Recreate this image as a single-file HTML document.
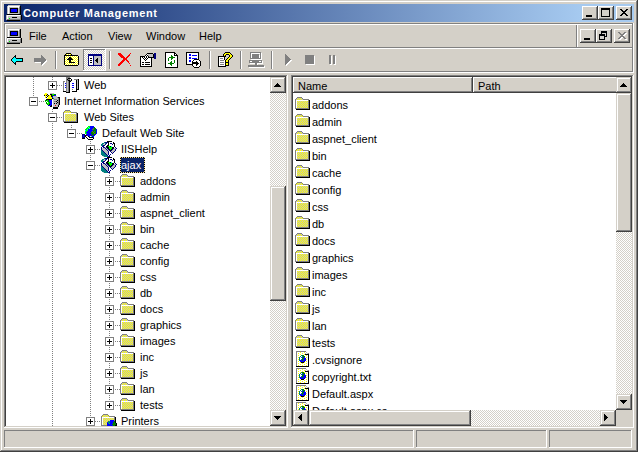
<!DOCTYPE html>
<html><head><meta charset="utf-8"><title>Computer Management</title>
<style>
html,body{margin:0;padding:0;}
body{width:638px;height:452px;overflow:hidden;position:relative;background:#d4d0c8;}
body>div,body>svg,body>span{position:absolute;display:block;}
.t{font-family:"Liberation Sans",sans-serif;font-size:11px;line-height:16px;white-space:nowrap;color:#000;}
</style></head><body>
<svg width="0" height="0" style="position:absolute"><defs><pattern id="v1" width="2" height="2" patternUnits="userSpaceOnUse"><rect x="0" y="0" width="1" height="1" fill="#ffffff"/><rect x="1" y="0" width="1" height="1" fill="#ffff00"/><rect x="0" y="1" width="1" height="1" fill="#ffff00"/><rect x="1" y="1" width="1" height="1" fill="#ffffff"/></pattern><pattern id="y0" width="2" height="2" patternUnits="userSpaceOnUse"><rect x="0" y="0" width="1" height="1" fill="#ffff00"/><rect x="1" y="0" width="1" height="1" fill="#c0c0c0"/><rect x="0" y="1" width="1" height="1" fill="#c0c0c0"/><rect x="1" y="1" width="1" height="1" fill="#ffff00"/></pattern><pattern id="y1" width="2" height="2" patternUnits="userSpaceOnUse"><rect x="0" y="0" width="1" height="1" fill="#c0c0c0"/><rect x="1" y="0" width="1" height="1" fill="#ffff00"/><rect x="0" y="1" width="1" height="1" fill="#ffff00"/><rect x="1" y="1" width="1" height="1" fill="#c0c0c0"/></pattern><pattern id="w21" width="4" height="2" patternUnits="userSpaceOnUse"><rect width="4" height="2" fill="#ffffff"/><rect x="0" y="0" width="1" height="1" fill="#ffff00"/><rect x="2" y="1" width="1" height="1" fill="#ffff00"/></pattern><pattern id="w20" width="4" height="2" patternUnits="userSpaceOnUse"><rect width="4" height="2" fill="#ffffff"/><rect x="2" y="0" width="1" height="1" fill="#ffff00"/><rect x="0" y="1" width="1" height="1" fill="#ffff00"/></pattern></defs></svg>
<div style="left:0px;top:0px;width:638px;height:452px;background:#d4d0c8;"></div>
<div style="left:1px;top:1px;width:636px;height:450px;background:#ffffff;"></div>
<div style="left:0px;top:0px;width:637px;height:451px;background:#d4d0c8;"></div>
<div style="left:0px;top:0px;width:638px;height:452px;background:#404040;"></div>
<div style="left:0px;top:0px;width:637px;height:451px;background:#d4d0c8;"></div>
<div style="left:1px;top:1px;width:636px;height:450px;background:#808080;"></div>
<div style="left:1px;top:1px;width:635px;height:449px;background:#ffffff;"></div>
<div style="left:2px;top:2px;width:634px;height:448px;background:#d4d0c8;"></div>
<div style="left:4px;top:4px;width:630px;height:18px;background:linear-gradient(to right,#0a246a 0px,#a6caf0 578px,#a6caf0 630px);"></div>
<svg style="left:5px;top:5px" width="17" height="16" shape-rendering="crispEdges"><rect x="3" y="0" width="12" height="1" fill="#c0c0c0"/><rect x="2" y="1" width="1" height="1" fill="#c0c0c0"/><rect x="3" y="1" width="11" height="1" fill="#ffffff"/><rect x="14" y="1" width="1" height="1" fill="#c0c0c0"/><rect x="15" y="1" width="1" height="1" fill="#000000"/><rect x="2" y="2" width="1" height="1" fill="#c0c0c0"/><rect x="3" y="2" width="1" height="1" fill="#ffffff"/><rect x="4" y="2" width="9" height="1" fill="#c0c0c0"/><rect x="13" y="2" width="1" height="1" fill="#ffffff"/><rect x="14" y="2" width="1" height="1" fill="#808080"/><rect x="15" y="2" width="1" height="1" fill="#000000"/><rect x="2" y="3" width="1" height="1" fill="#c0c0c0"/><rect x="3" y="3" width="1" height="1" fill="#ffffff"/><rect x="4" y="3" width="1" height="1" fill="#c0c0c0"/><rect x="5" y="3" width="8" height="1" fill="#000000"/><rect x="13" y="3" width="1" height="1" fill="#c0c0c0"/><rect x="14" y="3" width="1" height="1" fill="#808080"/><rect x="15" y="3" width="1" height="1" fill="#000000"/><rect x="2" y="4" width="1" height="1" fill="#c0c0c0"/><rect x="3" y="4" width="1" height="1" fill="#ffffff"/><rect x="4" y="4" width="1" height="1" fill="#c0c0c0"/><rect x="5" y="4" width="1" height="1" fill="#000000"/><rect x="6" y="4" width="6" height="1" fill="#0000ff"/><rect x="12" y="4" width="1" height="1" fill="#000000"/><rect x="13" y="4" width="1" height="1" fill="#c0c0c0"/><rect x="14" y="4" width="1" height="1" fill="#808080"/><rect x="15" y="4" width="1" height="1" fill="#000000"/><rect x="2" y="5" width="1" height="1" fill="#c0c0c0"/><rect x="3" y="5" width="1" height="1" fill="#ffffff"/><rect x="4" y="5" width="1" height="1" fill="#c0c0c0"/><rect x="5" y="5" width="1" height="1" fill="#000000"/><rect x="6" y="5" width="6" height="1" fill="#0000ff"/><rect x="12" y="5" width="1" height="1" fill="#000000"/><rect x="13" y="5" width="1" height="1" fill="#c0c0c0"/><rect x="14" y="5" width="1" height="1" fill="#808080"/><rect x="15" y="5" width="1" height="1" fill="#000000"/><rect x="2" y="6" width="1" height="1" fill="#c0c0c0"/><rect x="3" y="6" width="1" height="1" fill="#ffffff"/><rect x="4" y="6" width="1" height="1" fill="#c0c0c0"/><rect x="5" y="6" width="1" height="1" fill="#000000"/><rect x="6" y="6" width="6" height="1" fill="#0000ff"/><rect x="12" y="6" width="1" height="1" fill="#000000"/><rect x="13" y="6" width="1" height="1" fill="#c0c0c0"/><rect x="14" y="6" width="1" height="1" fill="#808080"/><rect x="15" y="6" width="1" height="1" fill="#000000"/><rect x="2" y="7" width="1" height="1" fill="#c0c0c0"/><rect x="3" y="7" width="1" height="1" fill="#ffffff"/><rect x="4" y="7" width="1" height="1" fill="#c0c0c0"/><rect x="5" y="7" width="8" height="1" fill="#000000"/><rect x="13" y="7" width="1" height="1" fill="#c0c0c0"/><rect x="14" y="7" width="1" height="1" fill="#808080"/><rect x="15" y="7" width="1" height="1" fill="#000000"/><rect x="2" y="8" width="1" height="1" fill="#c0c0c0"/><rect x="3" y="8" width="1" height="1" fill="#ffffff"/><rect x="4" y="8" width="10" height="1" fill="#c0c0c0"/><rect x="14" y="8" width="1" height="1" fill="#808080"/><rect x="15" y="8" width="1" height="1" fill="#000000"/><rect x="2" y="9" width="14" height="1" fill="#000000"/><rect x="1" y="10" width="1" height="1" fill="#c0c0c0"/><rect x="2" y="10" width="13" height="1" fill="#ffffff"/><rect x="15" y="10" width="1" height="1" fill="#c0c0c0"/><rect x="16" y="10" width="1" height="1" fill="#000000"/><rect x="1" y="11" width="1" height="1" fill="#c0c0c0"/><rect x="2" y="11" width="1" height="1" fill="#ffffff"/><rect x="3" y="11" width="12" height="1" fill="#c0c0c0"/><rect x="15" y="11" width="1" height="1" fill="#808080"/><rect x="16" y="11" width="1" height="1" fill="#000000"/><rect x="1" y="12" width="1" height="1" fill="#c0c0c0"/><rect x="2" y="12" width="1" height="1" fill="#ffffff"/><rect x="3" y="12" width="4" height="1" fill="#c0c0c0"/><rect x="7" y="12" width="5" height="1" fill="#000000"/><rect x="12" y="12" width="3" height="1" fill="#c0c0c0"/><rect x="15" y="12" width="1" height="1" fill="#808080"/><rect x="16" y="12" width="1" height="1" fill="#000000"/><rect x="1" y="13" width="1" height="1" fill="#c0c0c0"/><rect x="2" y="13" width="1" height="1" fill="#ffffff"/><rect x="3" y="13" width="1" height="1" fill="#c0c0c0"/><rect x="4" y="13" width="1" height="1" fill="#00ff00"/><rect x="5" y="13" width="10" height="1" fill="#c0c0c0"/><rect x="15" y="13" width="1" height="1" fill="#808080"/><rect x="16" y="13" width="1" height="1" fill="#000000"/><rect x="1" y="14" width="1" height="1" fill="#c0c0c0"/><rect x="2" y="14" width="14" height="1" fill="#808080"/><rect x="16" y="14" width="1" height="1" fill="#000000"/><rect x="2" y="15" width="13" height="1" fill="#000000"/></svg>
<span class="t" style="left:23px;top:5px;color:#fff;font-weight:bold;letter-spacing:0.65px">Computer Management</span>
<div style="left:582px;top:6px;width:16px;height:14px;background:#404040;"></div>
<div style="left:582px;top:6px;width:15px;height:13px;background:#ffffff;"></div>
<div style="left:583px;top:7px;width:14px;height:12px;background:#808080;"></div>
<div style="left:583px;top:7px;width:13px;height:11px;background:#d4d0c8;"></div>
<svg style="left:586px;top:15px" width="6" height="2" shape-rendering="crispEdges"><rect x="0" y="0" width="6" height="1" fill="#000000"/><rect x="0" y="1" width="6" height="1" fill="#000000"/></svg>
<div style="left:598px;top:6px;width:16px;height:14px;background:#404040;"></div>
<div style="left:598px;top:6px;width:15px;height:13px;background:#ffffff;"></div>
<div style="left:599px;top:7px;width:14px;height:12px;background:#808080;"></div>
<div style="left:599px;top:7px;width:13px;height:11px;background:#d4d0c8;"></div>
<svg style="left:601px;top:8px" width="9" height="9" shape-rendering="crispEdges"><rect x="0" y="0" width="9" height="1" fill="#000000"/><rect x="0" y="1" width="9" height="1" fill="#000000"/><rect x="0" y="2" width="1" height="1" fill="#000000"/><rect x="8" y="2" width="1" height="1" fill="#000000"/><rect x="0" y="3" width="1" height="1" fill="#000000"/><rect x="8" y="3" width="1" height="1" fill="#000000"/><rect x="0" y="4" width="1" height="1" fill="#000000"/><rect x="8" y="4" width="1" height="1" fill="#000000"/><rect x="0" y="5" width="1" height="1" fill="#000000"/><rect x="8" y="5" width="1" height="1" fill="#000000"/><rect x="0" y="6" width="1" height="1" fill="#000000"/><rect x="8" y="6" width="1" height="1" fill="#000000"/><rect x="0" y="7" width="1" height="1" fill="#000000"/><rect x="8" y="7" width="1" height="1" fill="#000000"/><rect x="0" y="8" width="9" height="1" fill="#000000"/></svg>
<div style="left:616px;top:6px;width:16px;height:14px;background:#404040;"></div>
<div style="left:616px;top:6px;width:15px;height:13px;background:#ffffff;"></div>
<div style="left:617px;top:7px;width:14px;height:12px;background:#808080;"></div>
<div style="left:617px;top:7px;width:13px;height:11px;background:#d4d0c8;"></div>
<svg style="left:620px;top:9px" width="8" height="7" shape-rendering="crispEdges"><rect x="0" y="0" width="2" height="1" fill="#000000"/><rect x="6" y="0" width="2" height="1" fill="#000000"/><rect x="1" y="1" width="2" height="1" fill="#000000"/><rect x="5" y="1" width="2" height="1" fill="#000000"/><rect x="2" y="2" width="4" height="1" fill="#000000"/><rect x="3" y="3" width="2" height="1" fill="#000000"/><rect x="2" y="4" width="4" height="1" fill="#000000"/><rect x="1" y="5" width="2" height="1" fill="#000000"/><rect x="5" y="5" width="2" height="1" fill="#000000"/><rect x="0" y="6" width="2" height="1" fill="#000000"/><rect x="6" y="6" width="2" height="1" fill="#000000"/></svg>
<div style="left:4px;top:23px;width:630px;height:1px;background:#808080;"></div>
<div style="left:4px;top:23px;width:1px;height:49px;background:#808080;"></div>
<div style="left:5px;top:24px;width:628px;height:1px;background:#ffffff;"></div>
<div style="left:5px;top:24px;width:1px;height:47px;background:#ffffff;"></div>
<div style="left:632px;top:24px;width:1px;height:48px;background:#808080;"></div>
<div style="left:633px;top:23px;width:1px;height:50px;background:#ffffff;"></div>
<div style="left:4px;top:71px;width:629px;height:1px;background:#808080;"></div>
<div style="left:4px;top:72px;width:630px;height:1px;background:#ffffff;"></div>
<div style="left:5px;top:47px;width:627px;height:1px;background:#808080;"></div>
<div style="left:5px;top:48px;width:627px;height:1px;background:#ffffff;"></div>
<div style="left:576px;top:25px;width:1px;height:22px;background:#808080;"></div>
<div style="left:577px;top:25px;width:1px;height:22px;background:#ffffff;"></div>
<svg style="left:5px;top:28px" width="17" height="16" shape-rendering="crispEdges"><rect x="3" y="0" width="12" height="1" fill="#c0c0c0"/><rect x="2" y="1" width="1" height="1" fill="#c0c0c0"/><rect x="3" y="1" width="11" height="1" fill="#ffffff"/><rect x="14" y="1" width="1" height="1" fill="#c0c0c0"/><rect x="15" y="1" width="1" height="1" fill="#000000"/><rect x="2" y="2" width="1" height="1" fill="#c0c0c0"/><rect x="3" y="2" width="1" height="1" fill="#ffffff"/><rect x="4" y="2" width="9" height="1" fill="#c0c0c0"/><rect x="13" y="2" width="1" height="1" fill="#ffffff"/><rect x="14" y="2" width="1" height="1" fill="#808080"/><rect x="15" y="2" width="1" height="1" fill="#000000"/><rect x="2" y="3" width="1" height="1" fill="#c0c0c0"/><rect x="3" y="3" width="1" height="1" fill="#ffffff"/><rect x="4" y="3" width="1" height="1" fill="#c0c0c0"/><rect x="5" y="3" width="8" height="1" fill="#000000"/><rect x="13" y="3" width="1" height="1" fill="#c0c0c0"/><rect x="14" y="3" width="1" height="1" fill="#808080"/><rect x="15" y="3" width="1" height="1" fill="#000000"/><rect x="2" y="4" width="1" height="1" fill="#c0c0c0"/><rect x="3" y="4" width="1" height="1" fill="#ffffff"/><rect x="4" y="4" width="1" height="1" fill="#c0c0c0"/><rect x="5" y="4" width="1" height="1" fill="#000000"/><rect x="6" y="4" width="6" height="1" fill="#0000ff"/><rect x="12" y="4" width="1" height="1" fill="#000000"/><rect x="13" y="4" width="1" height="1" fill="#c0c0c0"/><rect x="14" y="4" width="1" height="1" fill="#808080"/><rect x="15" y="4" width="1" height="1" fill="#000000"/><rect x="2" y="5" width="1" height="1" fill="#c0c0c0"/><rect x="3" y="5" width="1" height="1" fill="#ffffff"/><rect x="4" y="5" width="1" height="1" fill="#c0c0c0"/><rect x="5" y="5" width="1" height="1" fill="#000000"/><rect x="6" y="5" width="6" height="1" fill="#0000ff"/><rect x="12" y="5" width="1" height="1" fill="#000000"/><rect x="13" y="5" width="1" height="1" fill="#c0c0c0"/><rect x="14" y="5" width="1" height="1" fill="#808080"/><rect x="15" y="5" width="1" height="1" fill="#000000"/><rect x="2" y="6" width="1" height="1" fill="#c0c0c0"/><rect x="3" y="6" width="1" height="1" fill="#ffffff"/><rect x="4" y="6" width="1" height="1" fill="#c0c0c0"/><rect x="5" y="6" width="1" height="1" fill="#000000"/><rect x="6" y="6" width="6" height="1" fill="#0000ff"/><rect x="12" y="6" width="1" height="1" fill="#000000"/><rect x="13" y="6" width="1" height="1" fill="#c0c0c0"/><rect x="14" y="6" width="1" height="1" fill="#808080"/><rect x="15" y="6" width="1" height="1" fill="#000000"/><rect x="2" y="7" width="1" height="1" fill="#c0c0c0"/><rect x="3" y="7" width="1" height="1" fill="#ffffff"/><rect x="4" y="7" width="1" height="1" fill="#c0c0c0"/><rect x="5" y="7" width="8" height="1" fill="#000000"/><rect x="13" y="7" width="1" height="1" fill="#c0c0c0"/><rect x="14" y="7" width="1" height="1" fill="#808080"/><rect x="15" y="7" width="1" height="1" fill="#000000"/><rect x="2" y="8" width="1" height="1" fill="#c0c0c0"/><rect x="3" y="8" width="1" height="1" fill="#ffffff"/><rect x="4" y="8" width="10" height="1" fill="#c0c0c0"/><rect x="14" y="8" width="1" height="1" fill="#808080"/><rect x="15" y="8" width="1" height="1" fill="#000000"/><rect x="2" y="9" width="14" height="1" fill="#000000"/><rect x="1" y="10" width="1" height="1" fill="#c0c0c0"/><rect x="2" y="10" width="13" height="1" fill="#ffffff"/><rect x="15" y="10" width="1" height="1" fill="#c0c0c0"/><rect x="16" y="10" width="1" height="1" fill="#000000"/><rect x="1" y="11" width="1" height="1" fill="#c0c0c0"/><rect x="2" y="11" width="1" height="1" fill="#ffffff"/><rect x="3" y="11" width="12" height="1" fill="#c0c0c0"/><rect x="15" y="11" width="1" height="1" fill="#808080"/><rect x="16" y="11" width="1" height="1" fill="#000000"/><rect x="1" y="12" width="1" height="1" fill="#c0c0c0"/><rect x="2" y="12" width="1" height="1" fill="#ffffff"/><rect x="3" y="12" width="4" height="1" fill="#c0c0c0"/><rect x="7" y="12" width="5" height="1" fill="#000000"/><rect x="12" y="12" width="3" height="1" fill="#c0c0c0"/><rect x="15" y="12" width="1" height="1" fill="#808080"/><rect x="16" y="12" width="1" height="1" fill="#000000"/><rect x="1" y="13" width="1" height="1" fill="#c0c0c0"/><rect x="2" y="13" width="1" height="1" fill="#ffffff"/><rect x="3" y="13" width="1" height="1" fill="#c0c0c0"/><rect x="4" y="13" width="1" height="1" fill="#00ff00"/><rect x="5" y="13" width="10" height="1" fill="#c0c0c0"/><rect x="15" y="13" width="1" height="1" fill="#808080"/><rect x="16" y="13" width="1" height="1" fill="#000000"/><rect x="1" y="14" width="1" height="1" fill="#c0c0c0"/><rect x="2" y="14" width="14" height="1" fill="#808080"/><rect x="16" y="14" width="1" height="1" fill="#000000"/><rect x="2" y="15" width="13" height="1" fill="#000000"/></svg>
<span class="t" style="left:29px;top:28px;">File</span>
<span class="t" style="left:62px;top:28px;">Action</span>
<span class="t" style="left:108px;top:28px;">View</span>
<span class="t" style="left:146px;top:28px;">Window</span>
<span class="t" style="left:199px;top:28px;">Help</span>
<div style="left:580px;top:29px;width:16px;height:14px;background:#404040;"></div>
<div style="left:580px;top:29px;width:15px;height:13px;background:#ffffff;"></div>
<div style="left:581px;top:30px;width:14px;height:12px;background:#808080;"></div>
<div style="left:581px;top:30px;width:13px;height:11px;background:#d4d0c8;"></div>
<svg style="left:584px;top:38px" width="6" height="2" shape-rendering="crispEdges"><rect x="0" y="0" width="6" height="1" fill="#000000"/><rect x="0" y="1" width="6" height="1" fill="#000000"/></svg>
<div style="left:596px;top:29px;width:16px;height:14px;background:#404040;"></div>
<div style="left:596px;top:29px;width:15px;height:13px;background:#ffffff;"></div>
<div style="left:597px;top:30px;width:14px;height:12px;background:#808080;"></div>
<div style="left:597px;top:30px;width:13px;height:11px;background:#d4d0c8;"></div>
<svg style="left:599px;top:31px" width="8" height="9" shape-rendering="crispEdges"><rect x="2" y="0" width="6" height="1" fill="#000000"/><rect x="2" y="1" width="6" height="1" fill="#000000"/><rect x="2" y="2" width="1" height="1" fill="#000000"/><rect x="7" y="2" width="1" height="1" fill="#000000"/><rect x="0" y="3" width="6" height="1" fill="#000000"/><rect x="7" y="3" width="1" height="1" fill="#000000"/><rect x="0" y="4" width="6" height="1" fill="#000000"/><rect x="7" y="4" width="1" height="1" fill="#000000"/><rect x="0" y="5" width="1" height="1" fill="#000000"/><rect x="5" y="5" width="3" height="1" fill="#000000"/><rect x="0" y="6" width="1" height="1" fill="#000000"/><rect x="5" y="6" width="1" height="1" fill="#000000"/><rect x="0" y="7" width="1" height="1" fill="#000000"/><rect x="5" y="7" width="1" height="1" fill="#000000"/><rect x="0" y="8" width="6" height="1" fill="#000000"/></svg>
<div style="left:614px;top:29px;width:16px;height:14px;background:#404040;"></div>
<div style="left:614px;top:29px;width:15px;height:13px;background:#ffffff;"></div>
<div style="left:615px;top:30px;width:14px;height:12px;background:#808080;"></div>
<div style="left:615px;top:30px;width:13px;height:11px;background:#d4d0c8;"></div>
<svg style="left:619px;top:33px" width="8" height="7" shape-rendering="crispEdges"><rect x="0" y="0" width="2" height="1" fill="#ffffff"/><rect x="6" y="0" width="2" height="1" fill="#ffffff"/><rect x="1" y="1" width="2" height="1" fill="#ffffff"/><rect x="5" y="1" width="2" height="1" fill="#ffffff"/><rect x="2" y="2" width="4" height="1" fill="#ffffff"/><rect x="3" y="3" width="2" height="1" fill="#ffffff"/><rect x="2" y="4" width="4" height="1" fill="#ffffff"/><rect x="1" y="5" width="2" height="1" fill="#ffffff"/><rect x="5" y="5" width="2" height="1" fill="#ffffff"/><rect x="0" y="6" width="2" height="1" fill="#ffffff"/><rect x="6" y="6" width="2" height="1" fill="#ffffff"/></svg>
<svg style="left:618px;top:32px" width="8" height="7" shape-rendering="crispEdges"><rect x="0" y="0" width="2" height="1" fill="#808080"/><rect x="6" y="0" width="2" height="1" fill="#808080"/><rect x="1" y="1" width="2" height="1" fill="#808080"/><rect x="5" y="1" width="2" height="1" fill="#808080"/><rect x="2" y="2" width="4" height="1" fill="#808080"/><rect x="3" y="3" width="2" height="1" fill="#808080"/><rect x="2" y="4" width="4" height="1" fill="#808080"/><rect x="1" y="5" width="2" height="1" fill="#808080"/><rect x="5" y="5" width="2" height="1" fill="#808080"/><rect x="0" y="6" width="2" height="1" fill="#808080"/><rect x="6" y="6" width="2" height="1" fill="#808080"/></svg>
<div style="left:55px;top:51px;width:1px;height:18px;background:#808080;"></div>
<div style="left:56px;top:51px;width:1px;height:18px;background:#ffffff;"></div>
<div style="left:109px;top:51px;width:1px;height:18px;background:#808080;"></div>
<div style="left:110px;top:51px;width:1px;height:18px;background:#ffffff;"></div>
<div style="left:209px;top:51px;width:1px;height:18px;background:#808080;"></div>
<div style="left:210px;top:51px;width:1px;height:18px;background:#ffffff;"></div>
<div style="left:240px;top:51px;width:1px;height:18px;background:#808080;"></div>
<div style="left:241px;top:51px;width:1px;height:18px;background:#ffffff;"></div>
<div style="left:271px;top:51px;width:1px;height:18px;background:#808080;"></div>
<div style="left:272px;top:51px;width:1px;height:18px;background:#ffffff;"></div>
<div style="left:83px;top:49px;width:23px;height:22px;background:#ffffff;"></div>
<div style="left:83px;top:49px;width:22px;height:21px;background:#808080;"></div>
<svg style="left:84px;top:50px" width="21" height="20" shape-rendering="crispEdges"><defs><pattern id="p84_50" x="0" y="0" width="2" height="2" patternUnits="userSpaceOnUse"><rect width="2" height="2" fill="#d4d0c8"/><rect width="1" height="1" fill="#ffffff"/><rect x="1" y="1" width="1" height="1" fill="#ffffff"/></pattern></defs><rect width="21" height="20" fill="url(#p84_50)"/></svg>
<svg style="left:11px;top:55px" width="12" height="10" shape-rendering="crispEdges"><rect x="4" y="0" width="1" height="1" fill="#000000"/><rect x="3" y="1" width="2" height="1" fill="#000000"/><rect x="2" y="2" width="1" height="1" fill="#000000"/><rect x="3" y="2" width="1" height="1" fill="#00ffff"/><rect x="4" y="2" width="1" height="1" fill="#000000"/><rect x="1" y="3" width="1" height="1" fill="#000000"/><rect x="2" y="3" width="3" height="1" fill="#00ffff"/><rect x="5" y="3" width="7" height="1" fill="#000000"/><rect x="0" y="4" width="1" height="1" fill="#000000"/><rect x="1" y="4" width="10" height="1" fill="#00ffff"/><rect x="11" y="4" width="1" height="1" fill="#000000"/><rect x="0" y="5" width="1" height="1" fill="#000000"/><rect x="1" y="5" width="10" height="1" fill="#00ffff"/><rect x="11" y="5" width="1" height="1" fill="#000000"/><rect x="1" y="6" width="1" height="1" fill="#000000"/><rect x="2" y="6" width="3" height="1" fill="#00ffff"/><rect x="5" y="6" width="7" height="1" fill="#000000"/><rect x="2" y="7" width="1" height="1" fill="#000000"/><rect x="3" y="7" width="1" height="1" fill="#00ffff"/><rect x="4" y="7" width="1" height="1" fill="#000000"/><rect x="3" y="8" width="2" height="1" fill="#000000"/><rect x="4" y="9" width="1" height="1" fill="#000000"/></svg>
<svg style="left:35px;top:56px" width="13" height="10" shape-rendering="crispEdges"><rect x="7" y="0" width="1" height="1" fill="#ffffff"/><rect x="7" y="1" width="2" height="1" fill="#ffffff"/><rect x="7" y="2" width="3" height="1" fill="#ffffff"/><rect x="0" y="3" width="11" height="1" fill="#ffffff"/><rect x="0" y="4" width="12" height="1" fill="#ffffff"/><rect x="0" y="5" width="12" height="1" fill="#ffffff"/><rect x="0" y="6" width="11" height="1" fill="#ffffff"/><rect x="7" y="7" width="3" height="1" fill="#ffffff"/><rect x="7" y="8" width="2" height="1" fill="#ffffff"/><rect x="7" y="9" width="1" height="1" fill="#ffffff"/></svg>
<svg style="left:34px;top:55px" width="13" height="10" shape-rendering="crispEdges"><rect x="7" y="0" width="1" height="1" fill="#808080"/><rect x="7" y="1" width="2" height="1" fill="#808080"/><rect x="7" y="2" width="3" height="1" fill="#808080"/><rect x="0" y="3" width="11" height="1" fill="#808080"/><rect x="0" y="4" width="12" height="1" fill="#808080"/><rect x="0" y="5" width="12" height="1" fill="#808080"/><rect x="0" y="6" width="11" height="1" fill="#808080"/><rect x="7" y="7" width="3" height="1" fill="#808080"/><rect x="7" y="8" width="2" height="1" fill="#808080"/><rect x="7" y="9" width="1" height="1" fill="#808080"/></svg>
<svg style="left:64px;top:53px" width="15" height="13" shape-rendering="crispEdges"><rect x="2" y="0" width="5" height="1" fill="#000000"/><rect x="1" y="1" width="1" height="1" fill="#000000"/><rect x="2" y="1" width="5" height="1" fill="url(#v1)"/><rect x="7" y="1" width="1" height="1" fill="#000000"/><rect x="0" y="2" width="14" height="1" fill="#000000"/><rect x="0" y="3" width="1" height="1" fill="#000000"/><rect x="1" y="3" width="13" height="1" fill="url(#v1)"/><rect x="14" y="3" width="1" height="1" fill="#000000"/><rect x="0" y="4" width="1" height="1" fill="#000000"/><rect x="1" y="4" width="4" height="1" fill="url(#v1)"/><rect x="5" y="4" width="2" height="1" fill="#000000"/><rect x="7" y="4" width="7" height="1" fill="url(#v1)"/><rect x="14" y="4" width="1" height="1" fill="#000000"/><rect x="0" y="5" width="1" height="1" fill="#000000"/><rect x="1" y="5" width="3" height="1" fill="url(#v1)"/><rect x="4" y="5" width="4" height="1" fill="#000000"/><rect x="8" y="5" width="6" height="1" fill="url(#v1)"/><rect x="14" y="5" width="1" height="1" fill="#000000"/><rect x="0" y="6" width="1" height="1" fill="#000000"/><rect x="1" y="6" width="2" height="1" fill="url(#v1)"/><rect x="3" y="6" width="6" height="1" fill="#000000"/><rect x="9" y="6" width="5" height="1" fill="url(#v1)"/><rect x="14" y="6" width="1" height="1" fill="#000000"/><rect x="0" y="7" width="1" height="1" fill="#000000"/><rect x="1" y="7" width="4" height="1" fill="url(#v1)"/><rect x="5" y="7" width="2" height="1" fill="#000000"/><rect x="7" y="7" width="7" height="1" fill="url(#v1)"/><rect x="14" y="7" width="1" height="1" fill="#000000"/><rect x="0" y="8" width="1" height="1" fill="#000000"/><rect x="1" y="8" width="4" height="1" fill="url(#v1)"/><rect x="5" y="8" width="2" height="1" fill="#000000"/><rect x="7" y="8" width="7" height="1" fill="url(#v1)"/><rect x="14" y="8" width="1" height="1" fill="#000000"/><rect x="0" y="9" width="1" height="1" fill="#000000"/><rect x="1" y="9" width="4" height="1" fill="url(#v1)"/><rect x="5" y="9" width="6" height="1" fill="#000000"/><rect x="11" y="9" width="3" height="1" fill="url(#v1)"/><rect x="14" y="9" width="1" height="1" fill="#000000"/><rect x="0" y="10" width="1" height="1" fill="#000000"/><rect x="1" y="10" width="13" height="1" fill="url(#v1)"/><rect x="14" y="10" width="1" height="1" fill="#000000"/><rect x="0" y="11" width="1" height="1" fill="#000000"/><rect x="1" y="11" width="13" height="1" fill="url(#v1)"/><rect x="14" y="11" width="1" height="1" fill="#000000"/><rect x="1" y="12" width="13" height="1" fill="#000000"/></svg>
<svg style="left:88px;top:54px" width="14" height="12" shape-rendering="crispEdges"><rect x="0" y="0" width="14" height="1" fill="#000080"/><rect x="0" y="1" width="14" height="1" fill="#000080"/><rect x="0" y="2" width="1" height="1" fill="#000080"/><rect x="1" y="2" width="4" height="1" fill="#ffffff"/><rect x="5" y="2" width="1" height="1" fill="#000080"/><rect x="6" y="2" width="7" height="1" fill="#c0c0c0"/><rect x="13" y="2" width="1" height="1" fill="#000080"/><rect x="0" y="3" width="1" height="1" fill="#000080"/><rect x="1" y="3" width="4" height="1" fill="#ffffff"/><rect x="5" y="3" width="1" height="1" fill="#000080"/><rect x="6" y="3" width="7" height="1" fill="#c0c0c0"/><rect x="13" y="3" width="1" height="1" fill="#000080"/><rect x="0" y="4" width="1" height="1" fill="#000080"/><rect x="1" y="4" width="1" height="1" fill="#ffffff"/><rect x="2" y="4" width="2" height="1" fill="#000000"/><rect x="4" y="4" width="1" height="1" fill="#ffffff"/><rect x="5" y="4" width="1" height="1" fill="#000080"/><rect x="6" y="4" width="3" height="1" fill="#c0c0c0"/><rect x="9" y="4" width="1" height="1" fill="#000000"/><rect x="10" y="4" width="3" height="1" fill="#c0c0c0"/><rect x="13" y="4" width="1" height="1" fill="#000080"/><rect x="0" y="5" width="1" height="1" fill="#000080"/><rect x="1" y="5" width="4" height="1" fill="#ffffff"/><rect x="5" y="5" width="1" height="1" fill="#000080"/><rect x="6" y="5" width="2" height="1" fill="#c0c0c0"/><rect x="8" y="5" width="2" height="1" fill="#000000"/><rect x="10" y="5" width="3" height="1" fill="#c0c0c0"/><rect x="13" y="5" width="1" height="1" fill="#000080"/><rect x="0" y="6" width="1" height="1" fill="#000080"/><rect x="1" y="6" width="1" height="1" fill="#ffffff"/><rect x="2" y="6" width="2" height="1" fill="#000000"/><rect x="4" y="6" width="1" height="1" fill="#ffffff"/><rect x="5" y="6" width="1" height="1" fill="#000080"/><rect x="6" y="6" width="1" height="1" fill="#c0c0c0"/><rect x="7" y="6" width="3" height="1" fill="#000000"/><rect x="10" y="6" width="3" height="1" fill="#c0c0c0"/><rect x="13" y="6" width="1" height="1" fill="#000080"/><rect x="0" y="7" width="1" height="1" fill="#000080"/><rect x="1" y="7" width="4" height="1" fill="#ffffff"/><rect x="5" y="7" width="1" height="1" fill="#000080"/><rect x="6" y="7" width="2" height="1" fill="#c0c0c0"/><rect x="8" y="7" width="2" height="1" fill="#000000"/><rect x="10" y="7" width="3" height="1" fill="#c0c0c0"/><rect x="13" y="7" width="1" height="1" fill="#000080"/><rect x="0" y="8" width="1" height="1" fill="#000080"/><rect x="1" y="8" width="1" height="1" fill="#ffffff"/><rect x="2" y="8" width="2" height="1" fill="#000000"/><rect x="4" y="8" width="1" height="1" fill="#ffffff"/><rect x="5" y="8" width="1" height="1" fill="#000080"/><rect x="6" y="8" width="3" height="1" fill="#c0c0c0"/><rect x="9" y="8" width="1" height="1" fill="#000000"/><rect x="10" y="8" width="3" height="1" fill="#c0c0c0"/><rect x="13" y="8" width="1" height="1" fill="#000080"/><rect x="0" y="9" width="1" height="1" fill="#000080"/><rect x="1" y="9" width="4" height="1" fill="#ffffff"/><rect x="5" y="9" width="1" height="1" fill="#000080"/><rect x="6" y="9" width="7" height="1" fill="#c0c0c0"/><rect x="13" y="9" width="1" height="1" fill="#000080"/><rect x="0" y="10" width="1" height="1" fill="#000080"/><rect x="1" y="10" width="4" height="1" fill="#ffffff"/><rect x="5" y="10" width="1" height="1" fill="#000080"/><rect x="6" y="10" width="7" height="1" fill="#c0c0c0"/><rect x="13" y="10" width="1" height="1" fill="#000080"/><rect x="0" y="11" width="14" height="1" fill="#000080"/></svg>
<svg style="left:118px;top:53px" width="13" height="13" shape-rendering="crispEdges"><rect x="0" y="0" width="3" height="1" fill="#ff0000"/><rect x="12" y="0" width="1" height="1" fill="#ff0000"/><rect x="0" y="1" width="4" height="1" fill="#ff0000"/><rect x="11" y="1" width="1" height="1" fill="#ff0000"/><rect x="1" y="2" width="4" height="1" fill="#ff0000"/><rect x="10" y="2" width="2" height="1" fill="#ff0000"/><rect x="2" y="3" width="4" height="1" fill="#ff0000"/><rect x="9" y="3" width="2" height="1" fill="#ff0000"/><rect x="3" y="4" width="4" height="1" fill="#ff0000"/><rect x="8" y="4" width="2" height="1" fill="#ff0000"/><rect x="5" y="5" width="4" height="1" fill="#ff0000"/><rect x="5" y="6" width="4" height="1" fill="#ff0000"/><rect x="4" y="7" width="3" height="1" fill="#ff0000"/><rect x="8" y="7" width="2" height="1" fill="#ff0000"/><rect x="3" y="8" width="3" height="1" fill="#ff0000"/><rect x="9" y="8" width="2" height="1" fill="#ff0000"/><rect x="2" y="9" width="3" height="1" fill="#ff0000"/><rect x="10" y="9" width="1" height="1" fill="#ff0000"/><rect x="1" y="10" width="3" height="1" fill="#ff0000"/><rect x="11" y="10" width="1" height="1" fill="#ff0000"/><rect x="0" y="11" width="3" height="1" fill="#ff0000"/><rect x="0" y="12" width="2" height="1" fill="#ff0000"/><rect x="12" y="12" width="1" height="1" fill="#ff0000"/></svg>
<svg style="left:140px;top:53px" width="16" height="14" shape-rendering="crispEdges"><rect x="7" y="0" width="6" height="1" fill="#000000"/><rect x="14" y="0" width="2" height="1" fill="#000080"/><rect x="6" y="1" width="1" height="1" fill="#000000"/><rect x="7" y="1" width="1" height="1" fill="#ffffff"/><rect x="8" y="1" width="5" height="1" fill="#c0c0c0"/><rect x="13" y="1" width="1" height="1" fill="#000000"/><rect x="14" y="1" width="2" height="1" fill="#000080"/><rect x="5" y="2" width="1" height="1" fill="#000000"/><rect x="6" y="2" width="1" height="1" fill="#ffffff"/><rect x="7" y="2" width="1" height="1" fill="#000000"/><rect x="8" y="2" width="5" height="1" fill="#c0c0c0"/><rect x="13" y="2" width="1" height="1" fill="#000000"/><rect x="14" y="2" width="2" height="1" fill="#000080"/><rect x="0" y="3" width="5" height="1" fill="#000000"/><rect x="5" y="3" width="1" height="1" fill="#ffffff"/><rect x="6" y="3" width="1" height="1" fill="#000000"/><rect x="7" y="3" width="1" height="1" fill="#ffffff"/><rect x="8" y="3" width="1" height="1" fill="#000000"/><rect x="9" y="3" width="4" height="1" fill="#c0c0c0"/><rect x="13" y="3" width="1" height="1" fill="#000000"/><rect x="14" y="3" width="2" height="1" fill="#000080"/><rect x="0" y="4" width="1" height="1" fill="#000000"/><rect x="1" y="4" width="1" height="1" fill="#ffffff"/><rect x="2" y="4" width="1" height="1" fill="#000000"/><rect x="3" y="4" width="1" height="1" fill="#ffffff"/><rect x="4" y="4" width="1" height="1" fill="#000000"/><rect x="5" y="4" width="1" height="1" fill="#ffffff"/><rect x="6" y="4" width="1" height="1" fill="#000000"/><rect x="7" y="4" width="1" height="1" fill="#ffffff"/><rect x="8" y="4" width="6" height="1" fill="#000000"/><rect x="14" y="4" width="2" height="1" fill="#000080"/><rect x="0" y="5" width="1" height="1" fill="#000000"/><rect x="1" y="5" width="2" height="1" fill="#ffffff"/><rect x="3" y="5" width="1" height="1" fill="#000000"/><rect x="4" y="5" width="1" height="1" fill="#ffffff"/><rect x="5" y="5" width="1" height="1" fill="#000000"/><rect x="6" y="5" width="1" height="1" fill="#ffffff"/><rect x="7" y="5" width="1" height="1" fill="#000000"/><rect x="8" y="5" width="3" height="1" fill="#ffffff"/><rect x="11" y="5" width="1" height="1" fill="#000000"/><rect x="14" y="5" width="2" height="1" fill="#000080"/><rect x="0" y="6" width="1" height="1" fill="#000000"/><rect x="1" y="6" width="3" height="1" fill="#ffffff"/><rect x="4" y="6" width="1" height="1" fill="#000000"/><rect x="5" y="6" width="1" height="1" fill="#ffffff"/><rect x="6" y="6" width="1" height="1" fill="#000000"/><rect x="7" y="6" width="4" height="1" fill="#ffffff"/><rect x="11" y="6" width="1" height="1" fill="#000000"/><rect x="0" y="7" width="1" height="1" fill="#000000"/><rect x="1" y="7" width="4" height="1" fill="#ffffff"/><rect x="5" y="7" width="1" height="1" fill="#000000"/><rect x="6" y="7" width="5" height="1" fill="#ffffff"/><rect x="11" y="7" width="1" height="1" fill="#000000"/><rect x="0" y="8" width="1" height="1" fill="#000000"/><rect x="1" y="8" width="10" height="1" fill="#ffffff"/><rect x="11" y="8" width="1" height="1" fill="#000000"/><rect x="0" y="9" width="1" height="1" fill="#000000"/><rect x="1" y="9" width="1" height="1" fill="#ffffff"/><rect x="2" y="9" width="2" height="1" fill="#000000"/><rect x="4" y="9" width="1" height="1" fill="#ffffff"/><rect x="5" y="9" width="5" height="1" fill="#000000"/><rect x="10" y="9" width="1" height="1" fill="#ffffff"/><rect x="11" y="9" width="1" height="1" fill="#000000"/><rect x="0" y="10" width="1" height="1" fill="#000000"/><rect x="1" y="10" width="10" height="1" fill="#ffffff"/><rect x="11" y="10" width="1" height="1" fill="#000000"/><rect x="0" y="11" width="1" height="1" fill="#000000"/><rect x="1" y="11" width="1" height="1" fill="#ffffff"/><rect x="2" y="11" width="2" height="1" fill="#000000"/><rect x="4" y="11" width="1" height="1" fill="#ffffff"/><rect x="5" y="11" width="5" height="1" fill="#000000"/><rect x="10" y="11" width="1" height="1" fill="#ffffff"/><rect x="11" y="11" width="1" height="1" fill="#000000"/><rect x="0" y="12" width="1" height="1" fill="#000000"/><rect x="1" y="12" width="10" height="1" fill="#ffffff"/><rect x="11" y="12" width="1" height="1" fill="#000000"/><rect x="0" y="13" width="12" height="1" fill="#000000"/></svg>
<svg style="left:165px;top:52px" width="13" height="16" shape-rendering="crispEdges"><rect x="0" y="0" width="10" height="1" fill="#000000"/><rect x="0" y="1" width="1" height="1" fill="#000000"/><rect x="1" y="1" width="8" height="1" fill="#ffffff"/><rect x="9" y="1" width="2" height="1" fill="#000000"/><rect x="0" y="2" width="1" height="1" fill="#000000"/><rect x="1" y="2" width="8" height="1" fill="#ffffff"/><rect x="9" y="2" width="1" height="1" fill="#000000"/><rect x="10" y="2" width="1" height="1" fill="#ffffff"/><rect x="11" y="2" width="1" height="1" fill="#000000"/><rect x="0" y="3" width="1" height="1" fill="#000000"/><rect x="1" y="3" width="5" height="1" fill="#ffffff"/><rect x="6" y="3" width="1" height="1" fill="#008000"/><rect x="7" y="3" width="2" height="1" fill="#ffffff"/><rect x="9" y="3" width="4" height="1" fill="#000000"/><rect x="0" y="4" width="1" height="1" fill="#000000"/><rect x="1" y="4" width="5" height="1" fill="#ffffff"/><rect x="6" y="4" width="2" height="1" fill="#008000"/><rect x="8" y="4" width="4" height="1" fill="#ffffff"/><rect x="12" y="4" width="1" height="1" fill="#000000"/><rect x="0" y="5" width="1" height="1" fill="#000000"/><rect x="1" y="5" width="3" height="1" fill="#ffffff"/><rect x="4" y="5" width="6" height="1" fill="#008000"/><rect x="10" y="5" width="2" height="1" fill="#ffffff"/><rect x="12" y="5" width="1" height="1" fill="#000000"/><rect x="0" y="6" width="1" height="1" fill="#000000"/><rect x="1" y="6" width="2" height="1" fill="#ffffff"/><rect x="3" y="6" width="1" height="1" fill="#008000"/><rect x="4" y="6" width="2" height="1" fill="#ffffff"/><rect x="6" y="6" width="2" height="1" fill="#008000"/><rect x="8" y="6" width="4" height="1" fill="#ffffff"/><rect x="12" y="6" width="1" height="1" fill="#000000"/><rect x="0" y="7" width="1" height="1" fill="#000000"/><rect x="1" y="7" width="2" height="1" fill="#ffffff"/><rect x="3" y="7" width="1" height="1" fill="#008000"/><rect x="4" y="7" width="2" height="1" fill="#ffffff"/><rect x="6" y="7" width="1" height="1" fill="#008000"/><rect x="7" y="7" width="5" height="1" fill="#ffffff"/><rect x="12" y="7" width="1" height="1" fill="#000000"/><rect x="0" y="8" width="1" height="1" fill="#000000"/><rect x="1" y="8" width="2" height="1" fill="#ffffff"/><rect x="3" y="8" width="1" height="1" fill="#008000"/><rect x="4" y="8" width="5" height="1" fill="#ffffff"/><rect x="9" y="8" width="1" height="1" fill="#008000"/><rect x="10" y="8" width="2" height="1" fill="#ffffff"/><rect x="12" y="8" width="1" height="1" fill="#000000"/><rect x="0" y="9" width="1" height="1" fill="#000000"/><rect x="1" y="9" width="5" height="1" fill="#ffffff"/><rect x="6" y="9" width="1" height="1" fill="#008000"/><rect x="7" y="9" width="2" height="1" fill="#ffffff"/><rect x="9" y="9" width="1" height="1" fill="#008000"/><rect x="10" y="9" width="2" height="1" fill="#ffffff"/><rect x="12" y="9" width="1" height="1" fill="#000000"/><rect x="0" y="10" width="1" height="1" fill="#000000"/><rect x="1" y="10" width="4" height="1" fill="#ffffff"/><rect x="5" y="10" width="2" height="1" fill="#008000"/><rect x="7" y="10" width="2" height="1" fill="#ffffff"/><rect x="9" y="10" width="1" height="1" fill="#008000"/><rect x="10" y="10" width="2" height="1" fill="#ffffff"/><rect x="12" y="10" width="1" height="1" fill="#000000"/><rect x="0" y="11" width="1" height="1" fill="#000000"/><rect x="1" y="11" width="2" height="1" fill="#ffffff"/><rect x="3" y="11" width="6" height="1" fill="#008000"/><rect x="9" y="11" width="3" height="1" fill="#ffffff"/><rect x="12" y="11" width="1" height="1" fill="#000000"/><rect x="0" y="12" width="1" height="1" fill="#000000"/><rect x="1" y="12" width="4" height="1" fill="#ffffff"/><rect x="5" y="12" width="2" height="1" fill="#008000"/><rect x="7" y="12" width="5" height="1" fill="#ffffff"/><rect x="12" y="12" width="1" height="1" fill="#000000"/><rect x="0" y="13" width="1" height="1" fill="#000000"/><rect x="1" y="13" width="5" height="1" fill="#ffffff"/><rect x="6" y="13" width="1" height="1" fill="#008000"/><rect x="7" y="13" width="5" height="1" fill="#ffffff"/><rect x="12" y="13" width="1" height="1" fill="#000000"/><rect x="0" y="14" width="1" height="1" fill="#000000"/><rect x="1" y="14" width="11" height="1" fill="#ffffff"/><rect x="12" y="14" width="1" height="1" fill="#000000"/><rect x="0" y="15" width="13" height="1" fill="#000000"/></svg>
<svg style="left:186px;top:52px" width="15" height="16" shape-rendering="crispEdges"><rect x="0" y="0" width="13" height="1" fill="#000000"/><rect x="0" y="1" width="1" height="1" fill="#000000"/><rect x="1" y="1" width="11" height="1" fill="#ffffff"/><rect x="12" y="1" width="1" height="1" fill="#000000"/><rect x="0" y="2" width="1" height="1" fill="#000000"/><rect x="1" y="2" width="2" height="1" fill="#ffffff"/><rect x="3" y="2" width="2" height="1" fill="#0000ff"/><rect x="5" y="2" width="7" height="1" fill="#ffffff"/><rect x="12" y="2" width="1" height="1" fill="#000000"/><rect x="0" y="3" width="1" height="1" fill="#000000"/><rect x="1" y="3" width="2" height="1" fill="#ffffff"/><rect x="3" y="3" width="2" height="1" fill="#0000ff"/><rect x="5" y="3" width="1" height="1" fill="#ffffff"/><rect x="6" y="3" width="5" height="1" fill="#0000ff"/><rect x="11" y="3" width="1" height="1" fill="#ffffff"/><rect x="12" y="3" width="1" height="1" fill="#000000"/><rect x="0" y="4" width="1" height="1" fill="#000000"/><rect x="1" y="4" width="11" height="1" fill="#ffffff"/><rect x="12" y="4" width="1" height="1" fill="#000000"/><rect x="0" y="5" width="1" height="1" fill="#000000"/><rect x="1" y="5" width="2" height="1" fill="#ffffff"/><rect x="3" y="5" width="2" height="1" fill="#0000ff"/><rect x="5" y="5" width="7" height="1" fill="#ffffff"/><rect x="12" y="5" width="1" height="1" fill="#000000"/><rect x="0" y="6" width="1" height="1" fill="#000000"/><rect x="1" y="6" width="2" height="1" fill="#ffffff"/><rect x="3" y="6" width="2" height="1" fill="#0000ff"/><rect x="5" y="6" width="1" height="1" fill="#ffffff"/><rect x="6" y="6" width="5" height="1" fill="#0000ff"/><rect x="11" y="6" width="1" height="1" fill="#ffffff"/><rect x="12" y="6" width="1" height="1" fill="#000000"/><rect x="0" y="7" width="1" height="1" fill="#000000"/><rect x="1" y="7" width="7" height="1" fill="#ffffff"/><rect x="8" y="7" width="5" height="1" fill="#000000"/><rect x="0" y="8" width="1" height="1" fill="#000000"/><rect x="1" y="8" width="2" height="1" fill="#ffffff"/><rect x="3" y="8" width="2" height="1" fill="#0000ff"/><rect x="5" y="8" width="2" height="1" fill="#ffffff"/><rect x="7" y="8" width="1" height="1" fill="#000000"/><rect x="8" y="8" width="5" height="1" fill="#ffffff"/><rect x="13" y="8" width="1" height="1" fill="#000000"/><rect x="0" y="9" width="1" height="1" fill="#000000"/><rect x="1" y="9" width="2" height="1" fill="#ffffff"/><rect x="3" y="9" width="2" height="1" fill="#0000ff"/><rect x="5" y="9" width="1" height="1" fill="#ffffff"/><rect x="6" y="9" width="1" height="1" fill="#000000"/><rect x="7" y="9" width="3" height="1" fill="#ffffff"/><rect x="10" y="9" width="1" height="1" fill="#000000"/><rect x="11" y="9" width="3" height="1" fill="#ffffff"/><rect x="14" y="9" width="1" height="1" fill="#000000"/><rect x="0" y="10" width="1" height="1" fill="#000000"/><rect x="1" y="10" width="5" height="1" fill="#ffffff"/><rect x="6" y="10" width="6" height="1" fill="#000000"/><rect x="12" y="10" width="2" height="1" fill="#ffffff"/><rect x="14" y="10" width="1" height="1" fill="#000000"/><rect x="0" y="11" width="1" height="1" fill="#000000"/><rect x="1" y="11" width="5" height="1" fill="#ffffff"/><rect x="6" y="11" width="7" height="1" fill="#000000"/><rect x="13" y="11" width="1" height="1" fill="#ffffff"/><rect x="14" y="11" width="1" height="1" fill="#000000"/><rect x="0" y="12" width="7" height="1" fill="#000000"/><rect x="7" y="12" width="3" height="1" fill="#ffffff"/><rect x="10" y="12" width="2" height="1" fill="#000000"/><rect x="12" y="12" width="2" height="1" fill="#ffffff"/><rect x="14" y="12" width="1" height="1" fill="#000000"/><rect x="6" y="13" width="1" height="1" fill="#000000"/><rect x="7" y="13" width="3" height="1" fill="#ffffff"/><rect x="10" y="13" width="1" height="1" fill="#000000"/><rect x="11" y="13" width="3" height="1" fill="#ffffff"/><rect x="14" y="13" width="1" height="1" fill="#000000"/><rect x="7" y="14" width="1" height="1" fill="#000000"/><rect x="8" y="14" width="5" height="1" fill="#ffffff"/><rect x="13" y="14" width="1" height="1" fill="#000000"/><rect x="8" y="15" width="5" height="1" fill="#000000"/></svg>
<svg style="left:218px;top:52px" width="16" height="15" shape-rendering="crispEdges"><rect x="7" y="0" width="5" height="1" fill="#000000"/><rect x="6" y="1" width="1" height="1" fill="#000000"/><rect x="7" y="1" width="5" height="1" fill="#ffff00"/><rect x="12" y="1" width="1" height="1" fill="#000000"/><rect x="5" y="2" width="1" height="1" fill="#000000"/><rect x="6" y="2" width="2" height="1" fill="#ffff00"/><rect x="8" y="2" width="3" height="1" fill="#000000"/><rect x="11" y="2" width="2" height="1" fill="#ffff00"/><rect x="13" y="2" width="1" height="1" fill="#000000"/><rect x="5" y="3" width="1" height="1" fill="#000000"/><rect x="6" y="3" width="1" height="1" fill="#ffff00"/><rect x="7" y="3" width="1" height="1" fill="#000000"/><rect x="11" y="3" width="1" height="1" fill="#000000"/><rect x="12" y="3" width="2" height="1" fill="#ffff00"/><rect x="14" y="3" width="1" height="1" fill="#000000"/><rect x="0" y="4" width="8" height="1" fill="#000000"/><rect x="11" y="4" width="1" height="1" fill="#000000"/><rect x="12" y="4" width="2" height="1" fill="#ffff00"/><rect x="14" y="4" width="1" height="1" fill="#000000"/><rect x="0" y="5" width="1" height="1" fill="#000000"/><rect x="1" y="5" width="5" height="1" fill="#ffffff"/><rect x="6" y="5" width="1" height="1" fill="#000000"/><rect x="10" y="5" width="1" height="1" fill="#000000"/><rect x="11" y="5" width="2" height="1" fill="#ffff00"/><rect x="13" y="5" width="1" height="1" fill="#000000"/><rect x="0" y="6" width="1" height="1" fill="#000000"/><rect x="1" y="6" width="1" height="1" fill="#ffffff"/><rect x="2" y="6" width="3" height="1" fill="#808080"/><rect x="5" y="6" width="1" height="1" fill="#ffffff"/><rect x="6" y="6" width="1" height="1" fill="#000000"/><rect x="9" y="6" width="1" height="1" fill="#000000"/><rect x="10" y="6" width="2" height="1" fill="#ffff00"/><rect x="12" y="6" width="1" height="1" fill="#000000"/><rect x="0" y="7" width="1" height="1" fill="#000000"/><rect x="1" y="7" width="5" height="1" fill="#ffffff"/><rect x="6" y="7" width="1" height="1" fill="#000000"/><rect x="8" y="7" width="1" height="1" fill="#000000"/><rect x="9" y="7" width="2" height="1" fill="#ffff00"/><rect x="11" y="7" width="1" height="1" fill="#000000"/><rect x="0" y="8" width="1" height="1" fill="#000000"/><rect x="1" y="8" width="1" height="1" fill="#ffffff"/><rect x="2" y="8" width="4" height="1" fill="#808080"/><rect x="6" y="8" width="1" height="1" fill="#ffffff"/><rect x="7" y="8" width="1" height="1" fill="#000000"/><rect x="8" y="8" width="2" height="1" fill="#ffff00"/><rect x="10" y="8" width="1" height="1" fill="#000000"/><rect x="0" y="9" width="1" height="1" fill="#000000"/><rect x="1" y="9" width="6" height="1" fill="#ffffff"/><rect x="7" y="9" width="1" height="1" fill="#000000"/><rect x="8" y="9" width="2" height="1" fill="#ffff00"/><rect x="10" y="9" width="1" height="1" fill="#000000"/><rect x="0" y="10" width="1" height="1" fill="#000000"/><rect x="1" y="10" width="1" height="1" fill="#ffffff"/><rect x="2" y="10" width="4" height="1" fill="#808080"/><rect x="6" y="10" width="1" height="1" fill="#ffffff"/><rect x="7" y="10" width="4" height="1" fill="#000000"/><rect x="0" y="11" width="1" height="1" fill="#000000"/><rect x="1" y="11" width="6" height="1" fill="#ffffff"/><rect x="7" y="11" width="1" height="1" fill="#000000"/><rect x="8" y="11" width="2" height="1" fill="#ffff00"/><rect x="10" y="11" width="1" height="1" fill="#000000"/><rect x="0" y="12" width="1" height="1" fill="#000000"/><rect x="1" y="12" width="1" height="1" fill="#ffffff"/><rect x="2" y="12" width="4" height="1" fill="#808080"/><rect x="6" y="12" width="1" height="1" fill="#ffffff"/><rect x="7" y="12" width="1" height="1" fill="#000000"/><rect x="8" y="12" width="2" height="1" fill="#ffff00"/><rect x="10" y="12" width="1" height="1" fill="#000000"/><rect x="0" y="13" width="1" height="1" fill="#000000"/><rect x="1" y="13" width="6" height="1" fill="#ffffff"/><rect x="7" y="13" width="4" height="1" fill="#000000"/><rect x="0" y="14" width="8" height="1" fill="#000000"/></svg>
<svg style="left:249px;top:53px" width="16" height="15" shape-rendering="crispEdges"><rect x="2" y="0" width="11" height="1" fill="#ffffff"/><rect x="2" y="1" width="1" height="1" fill="#ffffff"/><rect x="12" y="1" width="1" height="1" fill="#ffffff"/><rect x="2" y="2" width="1" height="1" fill="#ffffff"/><rect x="4" y="2" width="7" height="1" fill="#ffffff"/><rect x="12" y="2" width="1" height="1" fill="#ffffff"/><rect x="2" y="3" width="1" height="1" fill="#ffffff"/><rect x="4" y="3" width="7" height="1" fill="#ffffff"/><rect x="12" y="3" width="1" height="1" fill="#ffffff"/><rect x="2" y="4" width="1" height="1" fill="#ffffff"/><rect x="4" y="4" width="7" height="1" fill="#ffffff"/><rect x="12" y="4" width="1" height="1" fill="#ffffff"/><rect x="2" y="5" width="1" height="1" fill="#ffffff"/><rect x="4" y="5" width="7" height="1" fill="#ffffff"/><rect x="12" y="5" width="1" height="1" fill="#ffffff"/><rect x="2" y="6" width="11" height="1" fill="#ffffff"/><rect x="1" y="8" width="13" height="1" fill="#ffffff"/><rect x="1" y="9" width="1" height="1" fill="#ffffff"/><rect x="4" y="9" width="7" height="1" fill="#ffffff"/><rect x="13" y="9" width="1" height="1" fill="#ffffff"/><rect x="1" y="10" width="13" height="1" fill="#ffffff"/><rect x="7" y="11" width="2" height="1" fill="#ffffff"/><rect x="7" y="12" width="2" height="1" fill="#ffffff"/><rect x="0" y="13" width="16" height="1" fill="#ffffff"/><rect x="0" y="14" width="16" height="1" fill="#ffffff"/></svg>
<svg style="left:248px;top:52px" width="16" height="15" shape-rendering="crispEdges"><rect x="2" y="0" width="11" height="1" fill="#808080"/><rect x="2" y="1" width="1" height="1" fill="#808080"/><rect x="12" y="1" width="1" height="1" fill="#808080"/><rect x="2" y="2" width="1" height="1" fill="#808080"/><rect x="4" y="2" width="7" height="1" fill="#808080"/><rect x="12" y="2" width="1" height="1" fill="#808080"/><rect x="2" y="3" width="1" height="1" fill="#808080"/><rect x="4" y="3" width="7" height="1" fill="#808080"/><rect x="12" y="3" width="1" height="1" fill="#808080"/><rect x="2" y="4" width="1" height="1" fill="#808080"/><rect x="4" y="4" width="7" height="1" fill="#808080"/><rect x="12" y="4" width="1" height="1" fill="#808080"/><rect x="2" y="5" width="1" height="1" fill="#808080"/><rect x="4" y="5" width="7" height="1" fill="#808080"/><rect x="12" y="5" width="1" height="1" fill="#808080"/><rect x="2" y="6" width="11" height="1" fill="#808080"/><rect x="1" y="8" width="13" height="1" fill="#808080"/><rect x="1" y="9" width="1" height="1" fill="#808080"/><rect x="4" y="9" width="7" height="1" fill="#808080"/><rect x="13" y="9" width="1" height="1" fill="#808080"/><rect x="1" y="10" width="13" height="1" fill="#808080"/><rect x="7" y="11" width="2" height="1" fill="#808080"/><rect x="7" y="12" width="2" height="1" fill="#808080"/><rect x="0" y="13" width="16" height="1" fill="#808080"/><rect x="0" y="14" width="16" height="1" fill="#808080"/></svg>
<svg style="left:286px;top:55px" width="6" height="11" shape-rendering="crispEdges"><rect x="0" y="0" width="1" height="1" fill="#ffffff"/><rect x="0" y="1" width="2" height="1" fill="#ffffff"/><rect x="0" y="2" width="3" height="1" fill="#ffffff"/><rect x="0" y="3" width="4" height="1" fill="#ffffff"/><rect x="0" y="4" width="5" height="1" fill="#ffffff"/><rect x="0" y="5" width="6" height="1" fill="#ffffff"/><rect x="0" y="6" width="5" height="1" fill="#ffffff"/><rect x="0" y="7" width="4" height="1" fill="#ffffff"/><rect x="0" y="8" width="3" height="1" fill="#ffffff"/><rect x="0" y="9" width="2" height="1" fill="#ffffff"/><rect x="0" y="10" width="1" height="1" fill="#ffffff"/></svg>
<svg style="left:285px;top:54px" width="6" height="11" shape-rendering="crispEdges"><rect x="0" y="0" width="1" height="1" fill="#808080"/><rect x="0" y="1" width="2" height="1" fill="#808080"/><rect x="0" y="2" width="3" height="1" fill="#808080"/><rect x="0" y="3" width="4" height="1" fill="#808080"/><rect x="0" y="4" width="5" height="1" fill="#808080"/><rect x="0" y="5" width="6" height="1" fill="#808080"/><rect x="0" y="6" width="5" height="1" fill="#808080"/><rect x="0" y="7" width="4" height="1" fill="#808080"/><rect x="0" y="8" width="3" height="1" fill="#808080"/><rect x="0" y="9" width="2" height="1" fill="#808080"/><rect x="0" y="10" width="1" height="1" fill="#808080"/></svg>
<svg style="left:306px;top:56px" width="9" height="9" shape-rendering="crispEdges"><rect x="0" y="0" width="9" height="1" fill="#ffffff"/><rect x="0" y="1" width="9" height="1" fill="#ffffff"/><rect x="0" y="2" width="9" height="1" fill="#ffffff"/><rect x="0" y="3" width="9" height="1" fill="#ffffff"/><rect x="0" y="4" width="9" height="1" fill="#ffffff"/><rect x="0" y="5" width="9" height="1" fill="#ffffff"/><rect x="0" y="6" width="9" height="1" fill="#ffffff"/><rect x="0" y="7" width="9" height="1" fill="#ffffff"/><rect x="0" y="8" width="9" height="1" fill="#ffffff"/></svg>
<svg style="left:305px;top:55px" width="9" height="9" shape-rendering="crispEdges"><rect x="0" y="0" width="9" height="1" fill="#808080"/><rect x="0" y="1" width="9" height="1" fill="#808080"/><rect x="0" y="2" width="9" height="1" fill="#808080"/><rect x="0" y="3" width="9" height="1" fill="#808080"/><rect x="0" y="4" width="9" height="1" fill="#808080"/><rect x="0" y="5" width="9" height="1" fill="#808080"/><rect x="0" y="6" width="9" height="1" fill="#808080"/><rect x="0" y="7" width="9" height="1" fill="#808080"/><rect x="0" y="8" width="9" height="1" fill="#808080"/></svg>
<svg style="left:330px;top:56px" width="6" height="9" shape-rendering="crispEdges"><rect x="0" y="0" width="2" height="1" fill="#ffffff"/><rect x="4" y="0" width="2" height="1" fill="#ffffff"/><rect x="0" y="1" width="2" height="1" fill="#ffffff"/><rect x="4" y="1" width="2" height="1" fill="#ffffff"/><rect x="0" y="2" width="2" height="1" fill="#ffffff"/><rect x="4" y="2" width="2" height="1" fill="#ffffff"/><rect x="0" y="3" width="2" height="1" fill="#ffffff"/><rect x="4" y="3" width="2" height="1" fill="#ffffff"/><rect x="0" y="4" width="2" height="1" fill="#ffffff"/><rect x="4" y="4" width="2" height="1" fill="#ffffff"/><rect x="0" y="5" width="2" height="1" fill="#ffffff"/><rect x="4" y="5" width="2" height="1" fill="#ffffff"/><rect x="0" y="6" width="2" height="1" fill="#ffffff"/><rect x="4" y="6" width="2" height="1" fill="#ffffff"/><rect x="0" y="7" width="2" height="1" fill="#ffffff"/><rect x="4" y="7" width="2" height="1" fill="#ffffff"/><rect x="0" y="8" width="2" height="1" fill="#ffffff"/><rect x="4" y="8" width="2" height="1" fill="#ffffff"/></svg>
<svg style="left:329px;top:55px" width="6" height="9" shape-rendering="crispEdges"><rect x="0" y="0" width="2" height="1" fill="#808080"/><rect x="4" y="0" width="2" height="1" fill="#808080"/><rect x="0" y="1" width="2" height="1" fill="#808080"/><rect x="4" y="1" width="2" height="1" fill="#808080"/><rect x="0" y="2" width="2" height="1" fill="#808080"/><rect x="4" y="2" width="2" height="1" fill="#808080"/><rect x="0" y="3" width="2" height="1" fill="#808080"/><rect x="4" y="3" width="2" height="1" fill="#808080"/><rect x="0" y="4" width="2" height="1" fill="#808080"/><rect x="4" y="4" width="2" height="1" fill="#808080"/><rect x="0" y="5" width="2" height="1" fill="#808080"/><rect x="4" y="5" width="2" height="1" fill="#808080"/><rect x="0" y="6" width="2" height="1" fill="#808080"/><rect x="4" y="6" width="2" height="1" fill="#808080"/><rect x="0" y="7" width="2" height="1" fill="#808080"/><rect x="4" y="7" width="2" height="1" fill="#808080"/><rect x="0" y="8" width="2" height="1" fill="#808080"/><rect x="4" y="8" width="2" height="1" fill="#808080"/></svg>
<div style="left:4px;top:75px;width:284px;height:353px;background:#ffffff;"></div>
<div style="left:4px;top:75px;width:283px;height:352px;background:#808080;"></div>
<div style="left:5px;top:76px;width:282px;height:351px;background:#d4d0c8;"></div>
<div style="left:5px;top:76px;width:281px;height:350px;background:#404040;"></div>
<div style="left:6px;top:77px;width:280px;height:349px;background:#fff;"></div>
<svg style="left:33px;top:77px" width="1" height="19" shape-rendering="crispEdges"><defs><pattern id="dv33_77" width="1" height="2" patternUnits="userSpaceOnUse"><rect width="1" height="1" fill="#808080"/></pattern></defs><rect width="1" height="19" fill="url(#dv33_77)"/></svg>
<svg style="left:52px;top:77px" width="1" height="3" shape-rendering="crispEdges"><defs><pattern id="dv52_77" width="1" height="2" patternUnits="userSpaceOnUse"><rect width="1" height="1" fill="#808080"/></pattern></defs><rect width="1" height="3" fill="url(#dv52_77)"/></svg>
<svg style="left:52px;top:109px" width="1" height="317" shape-rendering="crispEdges"><defs><pattern id="dv52_109" width="1" height="2" patternUnits="userSpaceOnUse"><rect width="1" height="1" fill="#808080"/></pattern></defs><rect width="1" height="317" fill="url(#dv52_109)"/></svg>
<svg style="left:71px;top:125px" width="1" height="3" shape-rendering="crispEdges"><defs><pattern id="dv71_125" width="1" height="2" patternUnits="userSpaceOnUse"><rect width="1" height="1" fill="#808080"/></pattern></defs><rect width="1" height="3" fill="url(#dv71_125)"/></svg>
<svg style="left:90px;top:141px" width="1" height="285" shape-rendering="crispEdges"><defs><pattern id="dv90_141" width="1" height="2" patternUnits="userSpaceOnUse"><rect width="1" height="1" fill="#808080"/></pattern></defs><rect width="1" height="285" fill="url(#dv90_141)"/></svg>
<svg style="left:109px;top:173px" width="1" height="227" shape-rendering="crispEdges"><defs><pattern id="dv109_173" width="1" height="2" patternUnits="userSpaceOnUse"><rect width="1" height="1" fill="#808080"/></pattern></defs><rect width="1" height="227" fill="url(#dv109_173)"/></svg>
<div style="left:57px;top:85px;width:1px;height:1px;background:#808080;"></div>
<div style="left:59px;top:85px;width:1px;height:1px;background:#808080;"></div>
<div style="left:61px;top:85px;width:1px;height:1px;background:#808080;"></div>
<div style="left:48px;top:81px;width:9px;height:9px;background:#808080;"></div>
<div style="left:49px;top:82px;width:7px;height:7px;background:#ffffff;"></div>
<div style="left:50px;top:85px;width:5px;height:1px;background:#000000;"></div>
<div style="left:52px;top:83px;width:1px;height:5px;background:#000000;"></div>
<svg style="left:63px;top:77px" width="16" height="16" shape-rendering="crispEdges"><rect x="3" y="0" width="4" height="1" fill="#808080"/><rect x="3" y="1" width="2" height="1" fill="#808080"/><rect x="5" y="1" width="3" height="1" fill="#000000"/><rect x="3" y="2" width="1" height="1" fill="#808080"/><rect x="4" y="2" width="1" height="1" fill="#000000"/><rect x="5" y="2" width="2" height="1" fill="#808080"/><rect x="7" y="2" width="1" height="1" fill="#ffffff"/><rect x="8" y="2" width="1" height="1" fill="#000000"/><rect x="11" y="2" width="4" height="1" fill="#808080"/><rect x="15" y="2" width="1" height="1" fill="#000000"/><rect x="3" y="3" width="2" height="1" fill="#808080"/><rect x="5" y="3" width="2" height="1" fill="#000000"/><rect x="7" y="3" width="1" height="1" fill="#808080"/><rect x="8" y="3" width="1" height="1" fill="#000000"/><rect x="11" y="3" width="2" height="1" fill="#ffffff"/><rect x="13" y="3" width="1" height="1" fill="#000000"/><rect x="14" y="3" width="1" height="1" fill="#c0c0c0"/><rect x="15" y="3" width="1" height="1" fill="#000000"/><rect x="0" y="4" width="2" height="1" fill="#808080"/><rect x="3" y="4" width="1" height="1" fill="#808080"/><rect x="4" y="4" width="1" height="1" fill="#c0c0c0"/><rect x="5" y="4" width="1" height="1" fill="#808080"/><rect x="6" y="4" width="2" height="1" fill="#000000"/><rect x="11" y="4" width="2" height="1" fill="#ffffff"/><rect x="13" y="4" width="1" height="1" fill="#000000"/><rect x="14" y="4" width="1" height="1" fill="#c0c0c0"/><rect x="15" y="4" width="1" height="1" fill="#000000"/><rect x="0" y="5" width="1" height="1" fill="#808080"/><rect x="1" y="5" width="1" height="1" fill="#ffffff"/><rect x="3" y="5" width="1" height="1" fill="#808080"/><rect x="4" y="5" width="1" height="1" fill="#c0c0c0"/><rect x="5" y="5" width="1" height="1" fill="#808080"/><rect x="6" y="5" width="1" height="1" fill="#000000"/><rect x="11" y="5" width="2" height="1" fill="#ffffff"/><rect x="13" y="5" width="1" height="1" fill="#000000"/><rect x="14" y="5" width="1" height="1" fill="#c0c0c0"/><rect x="15" y="5" width="1" height="1" fill="#000000"/><rect x="0" y="6" width="1" height="1" fill="#808080"/><rect x="1" y="6" width="1" height="1" fill="#ffffff"/><rect x="2" y="6" width="1" height="1" fill="#0000ff"/><rect x="3" y="6" width="1" height="1" fill="#808080"/><rect x="4" y="6" width="1" height="1" fill="#c0c0c0"/><rect x="5" y="6" width="1" height="1" fill="#808080"/><rect x="6" y="6" width="1" height="1" fill="#000000"/><rect x="9" y="6" width="2" height="1" fill="#0000ff"/><rect x="11" y="6" width="2" height="1" fill="#ffffff"/><rect x="13" y="6" width="1" height="1" fill="#000000"/><rect x="14" y="6" width="1" height="1" fill="#c0c0c0"/><rect x="15" y="6" width="1" height="1" fill="#000000"/><rect x="0" y="7" width="1" height="1" fill="#808080"/><rect x="1" y="7" width="1" height="1" fill="#ffffff"/><rect x="3" y="7" width="1" height="1" fill="#808080"/><rect x="4" y="7" width="1" height="1" fill="#c0c0c0"/><rect x="5" y="7" width="1" height="1" fill="#808080"/><rect x="6" y="7" width="1" height="1" fill="#000000"/><rect x="11" y="7" width="2" height="1" fill="#ffffff"/><rect x="13" y="7" width="1" height="1" fill="#000000"/><rect x="14" y="7" width="1" height="1" fill="#c0c0c0"/><rect x="15" y="7" width="1" height="1" fill="#000000"/><rect x="0" y="8" width="1" height="1" fill="#808080"/><rect x="1" y="8" width="1" height="1" fill="#ffffff"/><rect x="2" y="8" width="1" height="1" fill="#0000ff"/><rect x="3" y="8" width="1" height="1" fill="#808080"/><rect x="4" y="8" width="1" height="1" fill="#c0c0c0"/><rect x="5" y="8" width="1" height="1" fill="#808080"/><rect x="6" y="8" width="1" height="1" fill="#000000"/><rect x="9" y="8" width="2" height="1" fill="#0000ff"/><rect x="11" y="8" width="2" height="1" fill="#ffffff"/><rect x="13" y="8" width="1" height="1" fill="#000000"/><rect x="14" y="8" width="1" height="1" fill="#c0c0c0"/><rect x="15" y="8" width="1" height="1" fill="#000000"/><rect x="0" y="9" width="1" height="1" fill="#808080"/><rect x="1" y="9" width="1" height="1" fill="#ffffff"/><rect x="3" y="9" width="1" height="1" fill="#808080"/><rect x="4" y="9" width="1" height="1" fill="#c0c0c0"/><rect x="5" y="9" width="1" height="1" fill="#808080"/><rect x="6" y="9" width="1" height="1" fill="#000000"/><rect x="11" y="9" width="2" height="1" fill="#ffffff"/><rect x="13" y="9" width="1" height="1" fill="#000000"/><rect x="14" y="9" width="1" height="1" fill="#c0c0c0"/><rect x="15" y="9" width="1" height="1" fill="#000000"/><rect x="0" y="10" width="1" height="1" fill="#808080"/><rect x="1" y="10" width="1" height="1" fill="#ffffff"/><rect x="2" y="10" width="1" height="1" fill="#0000ff"/><rect x="3" y="10" width="1" height="1" fill="#808080"/><rect x="4" y="10" width="1" height="1" fill="#c0c0c0"/><rect x="5" y="10" width="1" height="1" fill="#808080"/><rect x="6" y="10" width="1" height="1" fill="#000000"/><rect x="9" y="10" width="2" height="1" fill="#0000ff"/><rect x="11" y="10" width="2" height="1" fill="#ffffff"/><rect x="13" y="10" width="1" height="1" fill="#000000"/><rect x="14" y="10" width="1" height="1" fill="#c0c0c0"/><rect x="15" y="10" width="1" height="1" fill="#000000"/><rect x="0" y="11" width="1" height="1" fill="#808080"/><rect x="1" y="11" width="1" height="1" fill="#ffffff"/><rect x="3" y="11" width="1" height="1" fill="#808080"/><rect x="4" y="11" width="1" height="1" fill="#c0c0c0"/><rect x="5" y="11" width="1" height="1" fill="#808080"/><rect x="6" y="11" width="1" height="1" fill="#000000"/><rect x="11" y="11" width="2" height="1" fill="#ffffff"/><rect x="13" y="11" width="1" height="1" fill="#000000"/><rect x="14" y="11" width="1" height="1" fill="#c0c0c0"/><rect x="15" y="11" width="1" height="1" fill="#000000"/><rect x="0" y="12" width="1" height="1" fill="#808080"/><rect x="1" y="12" width="1" height="1" fill="#ffffff"/><rect x="3" y="12" width="1" height="1" fill="#808080"/><rect x="4" y="12" width="1" height="1" fill="#c0c0c0"/><rect x="5" y="12" width="1" height="1" fill="#808080"/><rect x="6" y="12" width="1" height="1" fill="#000000"/><rect x="9" y="12" width="1" height="1" fill="#808080"/><rect x="11" y="12" width="2" height="1" fill="#ffffff"/><rect x="13" y="12" width="3" height="1" fill="#000000"/><rect x="0" y="13" width="1" height="1" fill="#808080"/><rect x="1" y="13" width="1" height="1" fill="#ffffff"/><rect x="3" y="13" width="1" height="1" fill="#808080"/><rect x="4" y="13" width="1" height="1" fill="#c0c0c0"/><rect x="5" y="13" width="1" height="1" fill="#808080"/><rect x="6" y="13" width="1" height="1" fill="#000000"/><rect x="11" y="13" width="2" height="1" fill="#ffffff"/><rect x="13" y="13" width="1" height="1" fill="#000000"/><rect x="0" y="14" width="3" height="1" fill="#000000"/><rect x="3" y="14" width="1" height="1" fill="#808080"/><rect x="4" y="14" width="1" height="1" fill="#c0c0c0"/><rect x="5" y="14" width="1" height="1" fill="#808080"/><rect x="6" y="14" width="1" height="1" fill="#000000"/><rect x="9" y="14" width="5" height="1" fill="#000000"/><rect x="3" y="15" width="4" height="1" fill="#000000"/></svg>
<span class="t" style="left:84px;top:77px;">Web</span>
<div style="left:39px;top:101px;width:1px;height:1px;background:#808080;"></div>
<div style="left:41px;top:101px;width:1px;height:1px;background:#808080;"></div>
<div style="left:43px;top:101px;width:1px;height:1px;background:#808080;"></div>
<div style="left:29px;top:97px;width:9px;height:9px;background:#808080;"></div>
<div style="left:30px;top:98px;width:7px;height:7px;background:#ffffff;"></div>
<div style="left:31px;top:101px;width:5px;height:1px;background:#000000;"></div>
<svg style="left:44px;top:93px" width="16" height="16" shape-rendering="crispEdges"><rect x="1" y="0" width="2" height="1" fill="#ffff00"/><rect x="6" y="0" width="4" height="1" fill="#c0c0c0"/><rect x="0" y="1" width="3" height="1" fill="#ffff00"/><rect x="3" y="1" width="1" height="1" fill="#000000"/><rect x="6" y="1" width="2" height="1" fill="#000000"/><rect x="8" y="1" width="2" height="1" fill="#00ff00"/><rect x="10" y="1" width="2" height="1" fill="#008000"/><rect x="0" y="2" width="1" height="1" fill="#000000"/><rect x="1" y="2" width="1" height="1" fill="#ffff00"/><rect x="2" y="2" width="1" height="1" fill="#000000"/><rect x="3" y="2" width="1" height="1" fill="#ffff00"/><rect x="4" y="2" width="1" height="1" fill="#000000"/><rect x="5" y="2" width="2" height="1" fill="#ffff00"/><rect x="7" y="2" width="1" height="1" fill="#000000"/><rect x="8" y="2" width="2" height="1" fill="#008000"/><rect x="10" y="2" width="2" height="1" fill="#0000ff"/><rect x="1" y="3" width="1" height="1" fill="#ffff00"/><rect x="2" y="3" width="1" height="1" fill="#ffffff"/><rect x="3" y="3" width="1" height="1" fill="#000000"/><rect x="4" y="3" width="3" height="1" fill="#ffff00"/><rect x="7" y="3" width="1" height="1" fill="#000000"/><rect x="8" y="3" width="1" height="1" fill="#000080"/><rect x="9" y="3" width="4" height="1" fill="#c0c0c0"/><rect x="1" y="4" width="1" height="1" fill="#ffff00"/><rect x="2" y="4" width="1" height="1" fill="#000000"/><rect x="4" y="4" width="4" height="1" fill="#ffff00"/><rect x="8" y="4" width="1" height="1" fill="#0000ff"/><rect x="9" y="4" width="4" height="1" fill="#c0c0c0"/><rect x="13" y="4" width="1" height="1" fill="#808080"/><rect x="14" y="4" width="2" height="1" fill="#000000"/><rect x="3" y="5" width="5" height="1" fill="#ffff00"/><rect x="8" y="5" width="1" height="1" fill="#000000"/><rect x="9" y="5" width="1" height="1" fill="#008080"/><rect x="10" y="5" width="4" height="1" fill="#c0c0c0"/><rect x="14" y="5" width="1" height="1" fill="#808080"/><rect x="15" y="5" width="1" height="1" fill="#000000"/><rect x="2" y="6" width="6" height="1" fill="#000000"/><rect x="9" y="6" width="1" height="1" fill="#c0c0c0"/><rect x="10" y="6" width="3" height="1" fill="#808080"/><rect x="13" y="6" width="1" height="1" fill="#c0c0c0"/><rect x="14" y="6" width="1" height="1" fill="#808080"/><rect x="15" y="6" width="1" height="1" fill="#000000"/><rect x="1" y="7" width="2" height="1" fill="#008000"/><rect x="3" y="7" width="1" height="1" fill="#00ff00"/><rect x="4" y="7" width="1" height="1" fill="#008000"/><rect x="5" y="7" width="3" height="1" fill="#0000ff"/><rect x="9" y="7" width="4" height="1" fill="#c0c0c0"/><rect x="13" y="7" width="1" height="1" fill="#000000"/><rect x="14" y="7" width="1" height="1" fill="#808080"/><rect x="15" y="7" width="1" height="1" fill="#000000"/><rect x="1" y="8" width="1" height="1" fill="#00ff00"/><rect x="2" y="8" width="1" height="1" fill="#ffffff"/><rect x="3" y="8" width="1" height="1" fill="#00ff00"/><rect x="4" y="8" width="1" height="1" fill="#008000"/><rect x="5" y="8" width="3" height="1" fill="#0000ff"/><rect x="9" y="8" width="1" height="1" fill="#c0c0c0"/><rect x="10" y="8" width="2" height="1" fill="#808080"/><rect x="12" y="8" width="1" height="1" fill="#000000"/><rect x="13" y="8" width="1" height="1" fill="#c0c0c0"/><rect x="14" y="8" width="1" height="1" fill="#808080"/><rect x="15" y="8" width="1" height="1" fill="#000000"/><rect x="2" y="9" width="1" height="1" fill="#008000"/><rect x="3" y="9" width="1" height="1" fill="#ffffff"/><rect x="4" y="9" width="1" height="1" fill="#00ff00"/><rect x="5" y="9" width="1" height="1" fill="#008000"/><rect x="6" y="9" width="2" height="1" fill="#0000ff"/><rect x="9" y="9" width="4" height="1" fill="#c0c0c0"/><rect x="13" y="9" width="1" height="1" fill="#000000"/><rect x="14" y="9" width="1" height="1" fill="#808080"/><rect x="15" y="9" width="1" height="1" fill="#000000"/><rect x="2" y="10" width="1" height="1" fill="#008000"/><rect x="3" y="10" width="2" height="1" fill="#00ff00"/><rect x="5" y="10" width="1" height="1" fill="#008000"/><rect x="6" y="10" width="2" height="1" fill="#0000ff"/><rect x="9" y="10" width="1" height="1" fill="#c0c0c0"/><rect x="10" y="10" width="1" height="1" fill="#000000"/><rect x="11" y="10" width="1" height="1" fill="#c0c0c0"/><rect x="12" y="10" width="1" height="1" fill="#000000"/><rect x="13" y="10" width="1" height="1" fill="#c0c0c0"/><rect x="14" y="10" width="1" height="1" fill="#808080"/><rect x="15" y="10" width="1" height="1" fill="#000000"/><rect x="3" y="11" width="1" height="1" fill="#008000"/><rect x="4" y="11" width="1" height="1" fill="#00ff00"/><rect x="5" y="11" width="1" height="1" fill="#000000"/><rect x="6" y="11" width="2" height="1" fill="#0000ff"/><rect x="9" y="11" width="5" height="1" fill="#c0c0c0"/><rect x="14" y="11" width="1" height="1" fill="#808080"/><rect x="15" y="11" width="1" height="1" fill="#000000"/><rect x="4" y="12" width="1" height="1" fill="#000080"/><rect x="5" y="12" width="2" height="1" fill="#0000ff"/><rect x="7" y="12" width="1" height="1" fill="#000000"/><rect x="9" y="12" width="2" height="1" fill="#c0c0c0"/><rect x="11" y="12" width="1" height="1" fill="#ff0000"/><rect x="12" y="12" width="2" height="1" fill="#c0c0c0"/><rect x="14" y="12" width="1" height="1" fill="#000000"/><rect x="6" y="13" width="2" height="1" fill="#000000"/><rect x="9" y="13" width="5" height="1" fill="#c0c0c0"/><rect x="14" y="13" width="1" height="1" fill="#000000"/><rect x="9" y="14" width="5" height="1" fill="#000000"/><rect x="9" y="15" width="5" height="1" fill="#000000"/></svg>
<span class="t" style="left:64px;top:93px;">Internet Information Services</span>
<div style="left:57px;top:117px;width:1px;height:1px;background:#808080;"></div>
<div style="left:59px;top:117px;width:1px;height:1px;background:#808080;"></div>
<div style="left:61px;top:117px;width:1px;height:1px;background:#808080;"></div>
<div style="left:48px;top:113px;width:9px;height:9px;background:#808080;"></div>
<div style="left:49px;top:114px;width:7px;height:7px;background:#ffffff;"></div>
<div style="left:50px;top:117px;width:5px;height:1px;background:#000000;"></div>
<svg style="left:63px;top:109px" width="15" height="14" shape-rendering="crispEdges"><rect x="2" y="1" width="5" height="1" fill="#808080"/><rect x="1" y="2" width="1" height="1" fill="#808080"/><rect x="2" y="2" width="5" height="1" fill="url(#y0)"/><rect x="7" y="2" width="1" height="1" fill="#808080"/><rect x="0" y="3" width="1" height="1" fill="#808080"/><rect x="1" y="3" width="7" height="1" fill="url(#y0)"/><rect x="8" y="3" width="6" height="1" fill="#808080"/><rect x="0" y="4" width="1" height="1" fill="#808080"/><rect x="1" y="4" width="12" height="1" fill="#ffffff"/><rect x="13" y="4" width="1" height="1" fill="#808080"/><rect x="14" y="4" width="1" height="1" fill="#000000"/><rect x="0" y="5" width="1" height="1" fill="#808080"/><rect x="1" y="5" width="1" height="1" fill="#ffffff"/><rect x="2" y="5" width="11" height="1" fill="url(#y0)"/><rect x="13" y="5" width="1" height="1" fill="#808080"/><rect x="14" y="5" width="1" height="1" fill="#000000"/><rect x="0" y="6" width="1" height="1" fill="#808080"/><rect x="1" y="6" width="1" height="1" fill="#ffffff"/><rect x="2" y="6" width="11" height="1" fill="url(#y0)"/><rect x="13" y="6" width="1" height="1" fill="#808080"/><rect x="14" y="6" width="1" height="1" fill="#000000"/><rect x="0" y="7" width="1" height="1" fill="#808080"/><rect x="1" y="7" width="1" height="1" fill="#ffffff"/><rect x="2" y="7" width="11" height="1" fill="url(#y0)"/><rect x="13" y="7" width="1" height="1" fill="#808080"/><rect x="14" y="7" width="1" height="1" fill="#000000"/><rect x="0" y="8" width="1" height="1" fill="#808080"/><rect x="1" y="8" width="1" height="1" fill="#ffffff"/><rect x="2" y="8" width="11" height="1" fill="url(#y0)"/><rect x="13" y="8" width="1" height="1" fill="#808080"/><rect x="14" y="8" width="1" height="1" fill="#000000"/><rect x="0" y="9" width="1" height="1" fill="#808080"/><rect x="1" y="9" width="1" height="1" fill="#ffffff"/><rect x="2" y="9" width="11" height="1" fill="url(#y0)"/><rect x="13" y="9" width="1" height="1" fill="#808080"/><rect x="14" y="9" width="1" height="1" fill="#000000"/><rect x="0" y="10" width="1" height="1" fill="#808080"/><rect x="1" y="10" width="1" height="1" fill="#ffffff"/><rect x="2" y="10" width="11" height="1" fill="url(#y0)"/><rect x="13" y="10" width="1" height="1" fill="#808080"/><rect x="14" y="10" width="1" height="1" fill="#000000"/><rect x="0" y="11" width="1" height="1" fill="#808080"/><rect x="1" y="11" width="1" height="1" fill="#ffffff"/><rect x="2" y="11" width="11" height="1" fill="url(#y0)"/><rect x="13" y="11" width="1" height="1" fill="#808080"/><rect x="14" y="11" width="1" height="1" fill="#000000"/><rect x="0" y="12" width="14" height="1" fill="#808080"/><rect x="14" y="12" width="1" height="1" fill="#000000"/><rect x="1" y="13" width="14" height="1" fill="#000000"/></svg>
<span class="t" style="left:84px;top:109px;">Web Sites</span>
<div style="left:77px;top:133px;width:1px;height:1px;background:#808080;"></div>
<div style="left:79px;top:133px;width:1px;height:1px;background:#808080;"></div>
<div style="left:81px;top:133px;width:1px;height:1px;background:#808080;"></div>
<div style="left:67px;top:129px;width:9px;height:9px;background:#808080;"></div>
<div style="left:68px;top:130px;width:7px;height:7px;background:#ffffff;"></div>
<div style="left:69px;top:133px;width:5px;height:1px;background:#000000;"></div>
<svg style="left:82px;top:125px" width="16" height="16" shape-rendering="crispEdges"><rect x="6" y="1" width="2" height="1" fill="#00ff00"/><rect x="8" y="1" width="4" height="1" fill="#0000ff"/><rect x="5" y="2" width="1" height="1" fill="#00ff00"/><rect x="6" y="2" width="1" height="1" fill="#00ffff"/><rect x="7" y="2" width="1" height="1" fill="#00ff00"/><rect x="8" y="2" width="4" height="1" fill="#0000ff"/><rect x="12" y="2" width="1" height="1" fill="#008000"/><rect x="4" y="3" width="3" height="1" fill="#00ff00"/><rect x="7" y="3" width="1" height="1" fill="#00ffff"/><rect x="8" y="3" width="3" height="1" fill="#0000ff"/><rect x="11" y="3" width="1" height="1" fill="#808000"/><rect x="12" y="3" width="2" height="1" fill="#008000"/><rect x="3" y="4" width="2" height="1" fill="#00ff00"/><rect x="5" y="4" width="1" height="1" fill="#00ffff"/><rect x="6" y="4" width="4" height="1" fill="#0000ff"/><rect x="10" y="4" width="1" height="1" fill="#808000"/><rect x="11" y="4" width="1" height="1" fill="#008080"/><rect x="12" y="4" width="2" height="1" fill="#008000"/><rect x="14" y="4" width="1" height="1" fill="#0000ff"/><rect x="3" y="5" width="1" height="1" fill="#00ffff"/><rect x="4" y="5" width="2" height="1" fill="#00ff00"/><rect x="6" y="5" width="5" height="1" fill="#0000ff"/><rect x="11" y="5" width="3" height="1" fill="#008000"/><rect x="14" y="5" width="1" height="1" fill="#0000ff"/><rect x="3" y="6" width="2" height="1" fill="#00ff00"/><rect x="5" y="6" width="5" height="1" fill="#0000ff"/><rect x="10" y="6" width="1" height="1" fill="#808000"/><rect x="11" y="6" width="1" height="1" fill="#008000"/><rect x="12" y="6" width="1" height="1" fill="#008080"/><rect x="13" y="6" width="1" height="1" fill="#008000"/><rect x="14" y="6" width="1" height="1" fill="#0000ff"/><rect x="3" y="7" width="1" height="1" fill="#00ff00"/><rect x="4" y="7" width="5" height="1" fill="#0000ff"/><rect x="9" y="7" width="2" height="1" fill="#008000"/><rect x="11" y="7" width="1" height="1" fill="#808000"/><rect x="12" y="7" width="2" height="1" fill="#008000"/><rect x="14" y="7" width="1" height="1" fill="#0000ff"/><rect x="3" y="8" width="2" height="1" fill="#00ff00"/><rect x="5" y="8" width="4" height="1" fill="#0000ff"/><rect x="9" y="8" width="3" height="1" fill="#008000"/><rect x="12" y="8" width="1" height="1" fill="#808000"/><rect x="13" y="8" width="1" height="1" fill="#008000"/><rect x="14" y="8" width="1" height="1" fill="#0000ff"/><rect x="0" y="9" width="3" height="1" fill="#000080"/><rect x="4" y="9" width="6" height="1" fill="#0000ff"/><rect x="10" y="9" width="2" height="1" fill="#008000"/><rect x="12" y="9" width="2" height="1" fill="#0000ff"/><rect x="0" y="10" width="1" height="1" fill="#000080"/><rect x="1" y="10" width="1" height="1" fill="#0000ff"/><rect x="2" y="10" width="1" height="1" fill="#000080"/><rect x="3" y="10" width="1" height="1" fill="#000000"/><rect x="4" y="10" width="1" height="1" fill="#800000"/><rect x="5" y="10" width="4" height="1" fill="#0000ff"/><rect x="9" y="10" width="1" height="1" fill="#800000"/><rect x="10" y="10" width="1" height="1" fill="#0000ff"/><rect x="11" y="10" width="1" height="1" fill="#008000"/><rect x="12" y="10" width="1" height="1" fill="#0000ff"/><rect x="0" y="11" width="1" height="1" fill="#000080"/><rect x="1" y="11" width="1" height="1" fill="#0000ff"/><rect x="2" y="11" width="1" height="1" fill="#000080"/><rect x="3" y="11" width="1" height="1" fill="#000000"/><rect x="4" y="11" width="2" height="1" fill="#ffffff"/><rect x="6" y="11" width="1" height="1" fill="#000000"/><rect x="7" y="11" width="1" height="1" fill="#0000ff"/><rect x="8" y="11" width="1" height="1" fill="#ffffff"/><rect x="9" y="11" width="1" height="1" fill="#00ffff"/><rect x="10" y="11" width="2" height="1" fill="#0000ff"/><rect x="0" y="12" width="3" height="1" fill="#000080"/><rect x="4" y="12" width="1" height="1" fill="#000000"/><rect x="5" y="12" width="2" height="1" fill="#ffffff"/><rect x="7" y="12" width="4" height="1" fill="#000000"/><rect x="11" y="12" width="1" height="1" fill="#000080"/><rect x="0" y="13" width="3" height="1" fill="#000000"/><rect x="5" y="13" width="1" height="1" fill="#000000"/><rect x="6" y="13" width="5" height="1" fill="#ffffff"/><rect x="11" y="13" width="1" height="1" fill="#000000"/><rect x="6" y="14" width="5" height="1" fill="#000000"/></svg>
<span class="t" style="left:102px;top:125px;">Default Web Site</span>
<div style="left:95px;top:149px;width:1px;height:1px;background:#808080;"></div>
<div style="left:97px;top:149px;width:1px;height:1px;background:#808080;"></div>
<div style="left:99px;top:149px;width:1px;height:1px;background:#808080;"></div>
<div style="left:86px;top:145px;width:9px;height:9px;background:#808080;"></div>
<div style="left:87px;top:146px;width:7px;height:7px;background:#ffffff;"></div>
<div style="left:88px;top:149px;width:5px;height:1px;background:#000000;"></div>
<div style="left:90px;top:147px;width:1px;height:5px;background:#000000;"></div>
<svg style="left:101px;top:141px" width="16" height="16" shape-rendering="crispEdges"><rect x="6" y="0" width="5" height="1" fill="#000000"/><rect x="3" y="1" width="1" height="1" fill="#008080"/><rect x="4" y="1" width="3" height="1" fill="#000080"/><rect x="7" y="1" width="1" height="1" fill="#000000"/><rect x="8" y="1" width="4" height="1" fill="#ffffff"/><rect x="12" y="1" width="1" height="1" fill="#000000"/><rect x="1" y="2" width="2" height="1" fill="#008080"/><rect x="3" y="2" width="1" height="1" fill="#c0c0c0"/><rect x="4" y="2" width="1" height="1" fill="#008080"/><rect x="5" y="2" width="1" height="1" fill="#000080"/><rect x="6" y="2" width="1" height="1" fill="#ffffff"/><rect x="7" y="2" width="1" height="1" fill="#000000"/><rect x="8" y="2" width="1" height="1" fill="#ffffff"/><rect x="9" y="2" width="2" height="1" fill="#000080"/><rect x="11" y="2" width="1" height="1" fill="#ffffff"/><rect x="12" y="2" width="2" height="1" fill="#000000"/><rect x="0" y="3" width="2" height="1" fill="#008080"/><rect x="2" y="3" width="2" height="1" fill="#c0c0c0"/><rect x="4" y="3" width="1" height="1" fill="#000080"/><rect x="5" y="3" width="2" height="1" fill="#ffffff"/><rect x="7" y="3" width="1" height="1" fill="#000000"/><rect x="8" y="3" width="3" height="1" fill="#ffffff"/><rect x="11" y="3" width="1" height="1" fill="#000080"/><rect x="12" y="3" width="1" height="1" fill="#ffffff"/><rect x="13" y="3" width="1" height="1" fill="#000000"/><rect x="0" y="4" width="2" height="1" fill="#008080"/><rect x="2" y="4" width="2" height="1" fill="#000080"/><rect x="4" y="4" width="2" height="1" fill="#ffffff"/><rect x="6" y="4" width="2" height="1" fill="#000000"/><rect x="8" y="4" width="5" height="1" fill="#ffffff"/><rect x="13" y="4" width="1" height="1" fill="#000000"/><rect x="1" y="5" width="2" height="1" fill="#000080"/><rect x="3" y="5" width="2" height="1" fill="#ffffff"/><rect x="5" y="5" width="2" height="1" fill="#000000"/><rect x="7" y="5" width="2" height="1" fill="#00ff00"/><rect x="9" y="5" width="1" height="1" fill="#000000"/><rect x="10" y="5" width="1" height="1" fill="#00ffff"/><rect x="11" y="5" width="2" height="1" fill="#ffffff"/><rect x="13" y="5" width="1" height="1" fill="#000000"/><rect x="0" y="6" width="1" height="1" fill="#000080"/><rect x="1" y="6" width="1" height="1" fill="#ffffff"/><rect x="2" y="6" width="2" height="1" fill="#000080"/><rect x="4" y="6" width="1" height="1" fill="#c0c0c0"/><rect x="5" y="6" width="1" height="1" fill="#000080"/><rect x="6" y="6" width="2" height="1" fill="#000000"/><rect x="8" y="6" width="3" height="1" fill="#00ff00"/><rect x="11" y="6" width="2" height="1" fill="#000000"/><rect x="13" y="6" width="1" height="1" fill="#ffffff"/><rect x="14" y="6" width="1" height="1" fill="#000080"/><rect x="0" y="7" width="1" height="1" fill="#000080"/><rect x="1" y="7" width="3" height="1" fill="#c0c0c0"/><rect x="4" y="7" width="1" height="1" fill="#000080"/><rect x="5" y="7" width="1" height="1" fill="#c0c0c0"/><rect x="6" y="7" width="1" height="1" fill="#000080"/><rect x="7" y="7" width="1" height="1" fill="#000000"/><rect x="8" y="7" width="3" height="1" fill="#00ff00"/><rect x="11" y="7" width="1" height="1" fill="#000000"/><rect x="12" y="7" width="1" height="1" fill="#000080"/><rect x="13" y="7" width="2" height="1" fill="#c0c0c0"/><rect x="15" y="7" width="1" height="1" fill="#000080"/><rect x="0" y="8" width="1" height="1" fill="#000080"/><rect x="1" y="8" width="4" height="1" fill="#c0c0c0"/><rect x="5" y="8" width="1" height="1" fill="#000080"/><rect x="6" y="8" width="1" height="1" fill="#c0c0c0"/><rect x="7" y="8" width="1" height="1" fill="#000080"/><rect x="8" y="8" width="1" height="1" fill="#000000"/><rect x="9" y="8" width="1" height="1" fill="#00ff00"/><rect x="10" y="8" width="1" height="1" fill="#000000"/><rect x="11" y="8" width="1" height="1" fill="#000080"/><rect x="12" y="8" width="2" height="1" fill="#c0c0c0"/><rect x="14" y="8" width="1" height="1" fill="#000080"/><rect x="15" y="8" width="1" height="1" fill="#ffffff"/><rect x="0" y="9" width="1" height="1" fill="#008080"/><rect x="1" y="9" width="1" height="1" fill="#000080"/><rect x="2" y="9" width="4" height="1" fill="#c0c0c0"/><rect x="6" y="9" width="1" height="1" fill="#000080"/><rect x="7" y="9" width="1" height="1" fill="#c0c0c0"/><rect x="8" y="9" width="1" height="1" fill="#000080"/><rect x="9" y="9" width="1" height="1" fill="#000000"/><rect x="10" y="9" width="1" height="1" fill="#000080"/><rect x="11" y="9" width="3" height="1" fill="#c0c0c0"/><rect x="14" y="9" width="1" height="1" fill="#000080"/><rect x="0" y="10" width="2" height="1" fill="#008080"/><rect x="2" y="10" width="1" height="1" fill="#000080"/><rect x="3" y="10" width="4" height="1" fill="#c0c0c0"/><rect x="7" y="10" width="1" height="1" fill="#000080"/><rect x="8" y="10" width="1" height="1" fill="#ffffff"/><rect x="9" y="10" width="1" height="1" fill="#000080"/><rect x="10" y="10" width="3" height="1" fill="#c0c0c0"/><rect x="13" y="10" width="1" height="1" fill="#000080"/><rect x="0" y="11" width="3" height="1" fill="#008080"/><rect x="3" y="11" width="1" height="1" fill="#000080"/><rect x="4" y="11" width="3" height="1" fill="#c0c0c0"/><rect x="7" y="11" width="1" height="1" fill="#000080"/><rect x="8" y="11" width="2" height="1" fill="#ffffff"/><rect x="10" y="11" width="1" height="1" fill="#000080"/><rect x="11" y="11" width="1" height="1" fill="#c0c0c0"/><rect x="12" y="11" width="1" height="1" fill="#000080"/><rect x="0" y="12" width="4" height="1" fill="#008080"/><rect x="4" y="12" width="1" height="1" fill="#000080"/><rect x="5" y="12" width="2" height="1" fill="#c0c0c0"/><rect x="7" y="12" width="1" height="1" fill="#000080"/><rect x="8" y="12" width="3" height="1" fill="#ffffff"/><rect x="11" y="12" width="1" height="1" fill="#000080"/><rect x="0" y="13" width="5" height="1" fill="#008080"/><rect x="5" y="13" width="1" height="1" fill="#000080"/><rect x="6" y="13" width="1" height="1" fill="#c0c0c0"/><rect x="7" y="13" width="1" height="1" fill="#000080"/><rect x="8" y="13" width="1" height="1" fill="#ffffff"/><rect x="9" y="13" width="1" height="1" fill="#000080"/><rect x="1" y="14" width="5" height="1" fill="#008080"/><rect x="6" y="14" width="1" height="1" fill="#000080"/><rect x="7" y="14" width="1" height="1" fill="#ffffff"/><rect x="8" y="14" width="1" height="1" fill="#000080"/><rect x="2" y="15" width="1" height="1" fill="#c0c0c0"/><rect x="3" y="15" width="4" height="1" fill="#008080"/><rect x="7" y="15" width="2" height="1" fill="#000080"/></svg>
<span class="t" style="left:121px;top:141px;">IISHelp</span>
<div style="left:95px;top:165px;width:1px;height:1px;background:#808080;"></div>
<div style="left:97px;top:165px;width:1px;height:1px;background:#808080;"></div>
<div style="left:99px;top:165px;width:1px;height:1px;background:#808080;"></div>
<div style="left:86px;top:161px;width:9px;height:9px;background:#808080;"></div>
<div style="left:87px;top:162px;width:7px;height:7px;background:#ffffff;"></div>
<div style="left:88px;top:165px;width:5px;height:1px;background:#000000;"></div>
<svg style="left:101px;top:157px" width="16" height="16" shape-rendering="crispEdges"><rect x="6" y="0" width="5" height="1" fill="#000000"/><rect x="3" y="1" width="1" height="1" fill="#008080"/><rect x="4" y="1" width="3" height="1" fill="#000080"/><rect x="7" y="1" width="1" height="1" fill="#000000"/><rect x="8" y="1" width="4" height="1" fill="#ffffff"/><rect x="12" y="1" width="1" height="1" fill="#000000"/><rect x="1" y="2" width="2" height="1" fill="#008080"/><rect x="3" y="2" width="1" height="1" fill="#c0c0c0"/><rect x="4" y="2" width="1" height="1" fill="#008080"/><rect x="5" y="2" width="1" height="1" fill="#000080"/><rect x="6" y="2" width="1" height="1" fill="#ffffff"/><rect x="7" y="2" width="1" height="1" fill="#000000"/><rect x="8" y="2" width="1" height="1" fill="#ffffff"/><rect x="9" y="2" width="2" height="1" fill="#000080"/><rect x="11" y="2" width="1" height="1" fill="#ffffff"/><rect x="12" y="2" width="2" height="1" fill="#000000"/><rect x="0" y="3" width="2" height="1" fill="#008080"/><rect x="2" y="3" width="2" height="1" fill="#c0c0c0"/><rect x="4" y="3" width="1" height="1" fill="#000080"/><rect x="5" y="3" width="2" height="1" fill="#ffffff"/><rect x="7" y="3" width="1" height="1" fill="#000000"/><rect x="8" y="3" width="3" height="1" fill="#ffffff"/><rect x="11" y="3" width="1" height="1" fill="#000080"/><rect x="12" y="3" width="1" height="1" fill="#ffffff"/><rect x="13" y="3" width="1" height="1" fill="#000000"/><rect x="0" y="4" width="2" height="1" fill="#008080"/><rect x="2" y="4" width="2" height="1" fill="#000080"/><rect x="4" y="4" width="2" height="1" fill="#ffffff"/><rect x="6" y="4" width="2" height="1" fill="#000000"/><rect x="8" y="4" width="5" height="1" fill="#ffffff"/><rect x="13" y="4" width="1" height="1" fill="#000000"/><rect x="1" y="5" width="2" height="1" fill="#000080"/><rect x="3" y="5" width="2" height="1" fill="#ffffff"/><rect x="5" y="5" width="2" height="1" fill="#000000"/><rect x="7" y="5" width="2" height="1" fill="#00ff00"/><rect x="9" y="5" width="1" height="1" fill="#000000"/><rect x="10" y="5" width="1" height="1" fill="#00ffff"/><rect x="11" y="5" width="2" height="1" fill="#ffffff"/><rect x="13" y="5" width="1" height="1" fill="#000000"/><rect x="0" y="6" width="1" height="1" fill="#000080"/><rect x="1" y="6" width="1" height="1" fill="#ffffff"/><rect x="2" y="6" width="2" height="1" fill="#000080"/><rect x="4" y="6" width="1" height="1" fill="#c0c0c0"/><rect x="5" y="6" width="1" height="1" fill="#000080"/><rect x="6" y="6" width="2" height="1" fill="#000000"/><rect x="8" y="6" width="3" height="1" fill="#00ff00"/><rect x="11" y="6" width="2" height="1" fill="#000000"/><rect x="13" y="6" width="1" height="1" fill="#ffffff"/><rect x="14" y="6" width="1" height="1" fill="#000080"/><rect x="0" y="7" width="1" height="1" fill="#000080"/><rect x="1" y="7" width="3" height="1" fill="#c0c0c0"/><rect x="4" y="7" width="1" height="1" fill="#000080"/><rect x="5" y="7" width="1" height="1" fill="#c0c0c0"/><rect x="6" y="7" width="1" height="1" fill="#000080"/><rect x="7" y="7" width="1" height="1" fill="#000000"/><rect x="8" y="7" width="3" height="1" fill="#00ff00"/><rect x="11" y="7" width="1" height="1" fill="#000000"/><rect x="12" y="7" width="1" height="1" fill="#000080"/><rect x="13" y="7" width="2" height="1" fill="#c0c0c0"/><rect x="15" y="7" width="1" height="1" fill="#000080"/><rect x="0" y="8" width="1" height="1" fill="#000080"/><rect x="1" y="8" width="4" height="1" fill="#c0c0c0"/><rect x="5" y="8" width="1" height="1" fill="#000080"/><rect x="6" y="8" width="1" height="1" fill="#c0c0c0"/><rect x="7" y="8" width="1" height="1" fill="#000080"/><rect x="8" y="8" width="1" height="1" fill="#000000"/><rect x="9" y="8" width="1" height="1" fill="#00ff00"/><rect x="10" y="8" width="1" height="1" fill="#000000"/><rect x="11" y="8" width="1" height="1" fill="#000080"/><rect x="12" y="8" width="2" height="1" fill="#c0c0c0"/><rect x="14" y="8" width="1" height="1" fill="#000080"/><rect x="15" y="8" width="1" height="1" fill="#ffffff"/><rect x="0" y="9" width="1" height="1" fill="#008080"/><rect x="1" y="9" width="1" height="1" fill="#000080"/><rect x="2" y="9" width="4" height="1" fill="#c0c0c0"/><rect x="6" y="9" width="1" height="1" fill="#000080"/><rect x="7" y="9" width="1" height="1" fill="#c0c0c0"/><rect x="8" y="9" width="1" height="1" fill="#000080"/><rect x="9" y="9" width="1" height="1" fill="#000000"/><rect x="10" y="9" width="1" height="1" fill="#000080"/><rect x="11" y="9" width="3" height="1" fill="#c0c0c0"/><rect x="14" y="9" width="1" height="1" fill="#000080"/><rect x="0" y="10" width="2" height="1" fill="#008080"/><rect x="2" y="10" width="1" height="1" fill="#000080"/><rect x="3" y="10" width="4" height="1" fill="#c0c0c0"/><rect x="7" y="10" width="1" height="1" fill="#000080"/><rect x="8" y="10" width="1" height="1" fill="#ffffff"/><rect x="9" y="10" width="1" height="1" fill="#000080"/><rect x="10" y="10" width="3" height="1" fill="#c0c0c0"/><rect x="13" y="10" width="1" height="1" fill="#000080"/><rect x="0" y="11" width="3" height="1" fill="#008080"/><rect x="3" y="11" width="1" height="1" fill="#000080"/><rect x="4" y="11" width="3" height="1" fill="#c0c0c0"/><rect x="7" y="11" width="1" height="1" fill="#000080"/><rect x="8" y="11" width="2" height="1" fill="#ffffff"/><rect x="10" y="11" width="1" height="1" fill="#000080"/><rect x="11" y="11" width="1" height="1" fill="#c0c0c0"/><rect x="12" y="11" width="1" height="1" fill="#000080"/><rect x="0" y="12" width="4" height="1" fill="#008080"/><rect x="4" y="12" width="1" height="1" fill="#000080"/><rect x="5" y="12" width="2" height="1" fill="#c0c0c0"/><rect x="7" y="12" width="1" height="1" fill="#000080"/><rect x="8" y="12" width="3" height="1" fill="#ffffff"/><rect x="11" y="12" width="1" height="1" fill="#000080"/><rect x="0" y="13" width="5" height="1" fill="#008080"/><rect x="5" y="13" width="1" height="1" fill="#000080"/><rect x="6" y="13" width="1" height="1" fill="#c0c0c0"/><rect x="7" y="13" width="1" height="1" fill="#000080"/><rect x="8" y="13" width="1" height="1" fill="#ffffff"/><rect x="9" y="13" width="1" height="1" fill="#000080"/><rect x="1" y="14" width="5" height="1" fill="#008080"/><rect x="6" y="14" width="1" height="1" fill="#000080"/><rect x="7" y="14" width="1" height="1" fill="#ffffff"/><rect x="8" y="14" width="1" height="1" fill="#000080"/><rect x="2" y="15" width="1" height="1" fill="#c0c0c0"/><rect x="3" y="15" width="4" height="1" fill="#008080"/><rect x="7" y="15" width="2" height="1" fill="#000080"/></svg>
<div style="left:120px;top:157px;width:25px;height:16px;background:#0a246a;"></div>
<svg style="left:120px;top:157px" width="25" height="16" shape-rendering="crispEdges"><rect x="0" y="0" width="1" height="1" fill="#f5db95"/><rect x="1" y="0" width="1" height="1" fill="#000000"/><rect x="2" y="0" width="1" height="1" fill="#f5db95"/><rect x="3" y="0" width="1" height="1" fill="#000000"/><rect x="4" y="0" width="1" height="1" fill="#f5db95"/><rect x="5" y="0" width="1" height="1" fill="#000000"/><rect x="6" y="0" width="1" height="1" fill="#f5db95"/><rect x="7" y="0" width="1" height="1" fill="#000000"/><rect x="8" y="0" width="1" height="1" fill="#f5db95"/><rect x="9" y="0" width="1" height="1" fill="#000000"/><rect x="10" y="0" width="1" height="1" fill="#f5db95"/><rect x="11" y="0" width="1" height="1" fill="#000000"/><rect x="12" y="0" width="1" height="1" fill="#f5db95"/><rect x="13" y="0" width="1" height="1" fill="#000000"/><rect x="14" y="0" width="1" height="1" fill="#f5db95"/><rect x="15" y="0" width="1" height="1" fill="#000000"/><rect x="16" y="0" width="1" height="1" fill="#f5db95"/><rect x="17" y="0" width="1" height="1" fill="#000000"/><rect x="18" y="0" width="1" height="1" fill="#f5db95"/><rect x="19" y="0" width="1" height="1" fill="#000000"/><rect x="20" y="0" width="1" height="1" fill="#f5db95"/><rect x="21" y="0" width="1" height="1" fill="#000000"/><rect x="22" y="0" width="1" height="1" fill="#f5db95"/><rect x="23" y="0" width="1" height="1" fill="#000000"/><rect x="24" y="0" width="1" height="1" fill="#f5db95"/><rect x="0" y="1" width="1" height="1" fill="#000000"/><rect x="24" y="1" width="1" height="1" fill="#000000"/><rect x="0" y="2" width="1" height="1" fill="#f5db95"/><rect x="24" y="2" width="1" height="1" fill="#f5db95"/><rect x="0" y="3" width="1" height="1" fill="#000000"/><rect x="24" y="3" width="1" height="1" fill="#000000"/><rect x="0" y="4" width="1" height="1" fill="#f5db95"/><rect x="24" y="4" width="1" height="1" fill="#f5db95"/><rect x="0" y="5" width="1" height="1" fill="#000000"/><rect x="24" y="5" width="1" height="1" fill="#000000"/><rect x="0" y="6" width="1" height="1" fill="#f5db95"/><rect x="24" y="6" width="1" height="1" fill="#f5db95"/><rect x="0" y="7" width="1" height="1" fill="#000000"/><rect x="24" y="7" width="1" height="1" fill="#000000"/><rect x="0" y="8" width="1" height="1" fill="#f5db95"/><rect x="24" y="8" width="1" height="1" fill="#f5db95"/><rect x="0" y="9" width="1" height="1" fill="#000000"/><rect x="24" y="9" width="1" height="1" fill="#000000"/><rect x="0" y="10" width="1" height="1" fill="#f5db95"/><rect x="24" y="10" width="1" height="1" fill="#f5db95"/><rect x="0" y="11" width="1" height="1" fill="#000000"/><rect x="24" y="11" width="1" height="1" fill="#000000"/><rect x="0" y="12" width="1" height="1" fill="#f5db95"/><rect x="24" y="12" width="1" height="1" fill="#f5db95"/><rect x="0" y="13" width="1" height="1" fill="#000000"/><rect x="24" y="13" width="1" height="1" fill="#000000"/><rect x="0" y="14" width="1" height="1" fill="#f5db95"/><rect x="24" y="14" width="1" height="1" fill="#f5db95"/><rect x="0" y="15" width="1" height="1" fill="#000000"/><rect x="1" y="15" width="1" height="1" fill="#f5db95"/><rect x="2" y="15" width="1" height="1" fill="#000000"/><rect x="3" y="15" width="1" height="1" fill="#f5db95"/><rect x="4" y="15" width="1" height="1" fill="#000000"/><rect x="5" y="15" width="1" height="1" fill="#f5db95"/><rect x="6" y="15" width="1" height="1" fill="#000000"/><rect x="7" y="15" width="1" height="1" fill="#f5db95"/><rect x="8" y="15" width="1" height="1" fill="#000000"/><rect x="9" y="15" width="1" height="1" fill="#f5db95"/><rect x="10" y="15" width="1" height="1" fill="#000000"/><rect x="11" y="15" width="1" height="1" fill="#f5db95"/><rect x="12" y="15" width="1" height="1" fill="#000000"/><rect x="13" y="15" width="1" height="1" fill="#f5db95"/><rect x="14" y="15" width="1" height="1" fill="#000000"/><rect x="15" y="15" width="1" height="1" fill="#f5db95"/><rect x="16" y="15" width="1" height="1" fill="#000000"/><rect x="17" y="15" width="1" height="1" fill="#f5db95"/><rect x="18" y="15" width="1" height="1" fill="#000000"/><rect x="19" y="15" width="1" height="1" fill="#f5db95"/><rect x="20" y="15" width="1" height="1" fill="#000000"/><rect x="21" y="15" width="1" height="1" fill="#f5db95"/><rect x="22" y="15" width="1" height="1" fill="#000000"/><rect x="23" y="15" width="1" height="1" fill="#f5db95"/><rect x="24" y="15" width="1" height="1" fill="#000000"/></svg>
<span class="t" style="left:121px;top:157px;color:#fff">ajax</span>
<div style="left:115px;top:181px;width:1px;height:1px;background:#808080;"></div>
<div style="left:117px;top:181px;width:1px;height:1px;background:#808080;"></div>
<div style="left:119px;top:181px;width:1px;height:1px;background:#808080;"></div>
<div style="left:105px;top:177px;width:9px;height:9px;background:#808080;"></div>
<div style="left:106px;top:178px;width:7px;height:7px;background:#ffffff;"></div>
<div style="left:107px;top:181px;width:5px;height:1px;background:#000000;"></div>
<div style="left:109px;top:179px;width:1px;height:5px;background:#000000;"></div>
<svg style="left:120px;top:173px" width="15" height="14" shape-rendering="crispEdges"><rect x="2" y="1" width="5" height="1" fill="#808080"/><rect x="1" y="2" width="1" height="1" fill="#808080"/><rect x="2" y="2" width="5" height="1" fill="url(#y1)"/><rect x="7" y="2" width="1" height="1" fill="#808080"/><rect x="0" y="3" width="1" height="1" fill="#808080"/><rect x="1" y="3" width="7" height="1" fill="url(#y1)"/><rect x="8" y="3" width="6" height="1" fill="#808080"/><rect x="0" y="4" width="1" height="1" fill="#808080"/><rect x="1" y="4" width="12" height="1" fill="#ffffff"/><rect x="13" y="4" width="1" height="1" fill="#808080"/><rect x="14" y="4" width="1" height="1" fill="#000000"/><rect x="0" y="5" width="1" height="1" fill="#808080"/><rect x="1" y="5" width="1" height="1" fill="#ffffff"/><rect x="2" y="5" width="11" height="1" fill="url(#y1)"/><rect x="13" y="5" width="1" height="1" fill="#808080"/><rect x="14" y="5" width="1" height="1" fill="#000000"/><rect x="0" y="6" width="1" height="1" fill="#808080"/><rect x="1" y="6" width="1" height="1" fill="#ffffff"/><rect x="2" y="6" width="11" height="1" fill="url(#y1)"/><rect x="13" y="6" width="1" height="1" fill="#808080"/><rect x="14" y="6" width="1" height="1" fill="#000000"/><rect x="0" y="7" width="1" height="1" fill="#808080"/><rect x="1" y="7" width="1" height="1" fill="#ffffff"/><rect x="2" y="7" width="11" height="1" fill="url(#y1)"/><rect x="13" y="7" width="1" height="1" fill="#808080"/><rect x="14" y="7" width="1" height="1" fill="#000000"/><rect x="0" y="8" width="1" height="1" fill="#808080"/><rect x="1" y="8" width="1" height="1" fill="#ffffff"/><rect x="2" y="8" width="11" height="1" fill="url(#y1)"/><rect x="13" y="8" width="1" height="1" fill="#808080"/><rect x="14" y="8" width="1" height="1" fill="#000000"/><rect x="0" y="9" width="1" height="1" fill="#808080"/><rect x="1" y="9" width="1" height="1" fill="#ffffff"/><rect x="2" y="9" width="11" height="1" fill="url(#y1)"/><rect x="13" y="9" width="1" height="1" fill="#808080"/><rect x="14" y="9" width="1" height="1" fill="#000000"/><rect x="0" y="10" width="1" height="1" fill="#808080"/><rect x="1" y="10" width="1" height="1" fill="#ffffff"/><rect x="2" y="10" width="11" height="1" fill="url(#y1)"/><rect x="13" y="10" width="1" height="1" fill="#808080"/><rect x="14" y="10" width="1" height="1" fill="#000000"/><rect x="0" y="11" width="1" height="1" fill="#808080"/><rect x="1" y="11" width="1" height="1" fill="#ffffff"/><rect x="2" y="11" width="11" height="1" fill="url(#y1)"/><rect x="13" y="11" width="1" height="1" fill="#808080"/><rect x="14" y="11" width="1" height="1" fill="#000000"/><rect x="0" y="12" width="14" height="1" fill="#808080"/><rect x="14" y="12" width="1" height="1" fill="#000000"/><rect x="1" y="13" width="14" height="1" fill="#000000"/></svg>
<span class="t" style="left:140px;top:173px;">addons</span>
<div style="left:115px;top:197px;width:1px;height:1px;background:#808080;"></div>
<div style="left:117px;top:197px;width:1px;height:1px;background:#808080;"></div>
<div style="left:119px;top:197px;width:1px;height:1px;background:#808080;"></div>
<div style="left:105px;top:193px;width:9px;height:9px;background:#808080;"></div>
<div style="left:106px;top:194px;width:7px;height:7px;background:#ffffff;"></div>
<div style="left:107px;top:197px;width:5px;height:1px;background:#000000;"></div>
<div style="left:109px;top:195px;width:1px;height:5px;background:#000000;"></div>
<svg style="left:120px;top:189px" width="15" height="14" shape-rendering="crispEdges"><rect x="2" y="1" width="5" height="1" fill="#808080"/><rect x="1" y="2" width="1" height="1" fill="#808080"/><rect x="2" y="2" width="5" height="1" fill="url(#y1)"/><rect x="7" y="2" width="1" height="1" fill="#808080"/><rect x="0" y="3" width="1" height="1" fill="#808080"/><rect x="1" y="3" width="7" height="1" fill="url(#y1)"/><rect x="8" y="3" width="6" height="1" fill="#808080"/><rect x="0" y="4" width="1" height="1" fill="#808080"/><rect x="1" y="4" width="12" height="1" fill="#ffffff"/><rect x="13" y="4" width="1" height="1" fill="#808080"/><rect x="14" y="4" width="1" height="1" fill="#000000"/><rect x="0" y="5" width="1" height="1" fill="#808080"/><rect x="1" y="5" width="1" height="1" fill="#ffffff"/><rect x="2" y="5" width="11" height="1" fill="url(#y1)"/><rect x="13" y="5" width="1" height="1" fill="#808080"/><rect x="14" y="5" width="1" height="1" fill="#000000"/><rect x="0" y="6" width="1" height="1" fill="#808080"/><rect x="1" y="6" width="1" height="1" fill="#ffffff"/><rect x="2" y="6" width="11" height="1" fill="url(#y1)"/><rect x="13" y="6" width="1" height="1" fill="#808080"/><rect x="14" y="6" width="1" height="1" fill="#000000"/><rect x="0" y="7" width="1" height="1" fill="#808080"/><rect x="1" y="7" width="1" height="1" fill="#ffffff"/><rect x="2" y="7" width="11" height="1" fill="url(#y1)"/><rect x="13" y="7" width="1" height="1" fill="#808080"/><rect x="14" y="7" width="1" height="1" fill="#000000"/><rect x="0" y="8" width="1" height="1" fill="#808080"/><rect x="1" y="8" width="1" height="1" fill="#ffffff"/><rect x="2" y="8" width="11" height="1" fill="url(#y1)"/><rect x="13" y="8" width="1" height="1" fill="#808080"/><rect x="14" y="8" width="1" height="1" fill="#000000"/><rect x="0" y="9" width="1" height="1" fill="#808080"/><rect x="1" y="9" width="1" height="1" fill="#ffffff"/><rect x="2" y="9" width="11" height="1" fill="url(#y1)"/><rect x="13" y="9" width="1" height="1" fill="#808080"/><rect x="14" y="9" width="1" height="1" fill="#000000"/><rect x="0" y="10" width="1" height="1" fill="#808080"/><rect x="1" y="10" width="1" height="1" fill="#ffffff"/><rect x="2" y="10" width="11" height="1" fill="url(#y1)"/><rect x="13" y="10" width="1" height="1" fill="#808080"/><rect x="14" y="10" width="1" height="1" fill="#000000"/><rect x="0" y="11" width="1" height="1" fill="#808080"/><rect x="1" y="11" width="1" height="1" fill="#ffffff"/><rect x="2" y="11" width="11" height="1" fill="url(#y1)"/><rect x="13" y="11" width="1" height="1" fill="#808080"/><rect x="14" y="11" width="1" height="1" fill="#000000"/><rect x="0" y="12" width="14" height="1" fill="#808080"/><rect x="14" y="12" width="1" height="1" fill="#000000"/><rect x="1" y="13" width="14" height="1" fill="#000000"/></svg>
<span class="t" style="left:140px;top:189px;">admin</span>
<div style="left:115px;top:213px;width:1px;height:1px;background:#808080;"></div>
<div style="left:117px;top:213px;width:1px;height:1px;background:#808080;"></div>
<div style="left:119px;top:213px;width:1px;height:1px;background:#808080;"></div>
<div style="left:105px;top:209px;width:9px;height:9px;background:#808080;"></div>
<div style="left:106px;top:210px;width:7px;height:7px;background:#ffffff;"></div>
<div style="left:107px;top:213px;width:5px;height:1px;background:#000000;"></div>
<div style="left:109px;top:211px;width:1px;height:5px;background:#000000;"></div>
<svg style="left:120px;top:205px" width="15" height="14" shape-rendering="crispEdges"><rect x="2" y="1" width="5" height="1" fill="#808080"/><rect x="1" y="2" width="1" height="1" fill="#808080"/><rect x="2" y="2" width="5" height="1" fill="url(#y1)"/><rect x="7" y="2" width="1" height="1" fill="#808080"/><rect x="0" y="3" width="1" height="1" fill="#808080"/><rect x="1" y="3" width="7" height="1" fill="url(#y1)"/><rect x="8" y="3" width="6" height="1" fill="#808080"/><rect x="0" y="4" width="1" height="1" fill="#808080"/><rect x="1" y="4" width="12" height="1" fill="#ffffff"/><rect x="13" y="4" width="1" height="1" fill="#808080"/><rect x="14" y="4" width="1" height="1" fill="#000000"/><rect x="0" y="5" width="1" height="1" fill="#808080"/><rect x="1" y="5" width="1" height="1" fill="#ffffff"/><rect x="2" y="5" width="11" height="1" fill="url(#y1)"/><rect x="13" y="5" width="1" height="1" fill="#808080"/><rect x="14" y="5" width="1" height="1" fill="#000000"/><rect x="0" y="6" width="1" height="1" fill="#808080"/><rect x="1" y="6" width="1" height="1" fill="#ffffff"/><rect x="2" y="6" width="11" height="1" fill="url(#y1)"/><rect x="13" y="6" width="1" height="1" fill="#808080"/><rect x="14" y="6" width="1" height="1" fill="#000000"/><rect x="0" y="7" width="1" height="1" fill="#808080"/><rect x="1" y="7" width="1" height="1" fill="#ffffff"/><rect x="2" y="7" width="11" height="1" fill="url(#y1)"/><rect x="13" y="7" width="1" height="1" fill="#808080"/><rect x="14" y="7" width="1" height="1" fill="#000000"/><rect x="0" y="8" width="1" height="1" fill="#808080"/><rect x="1" y="8" width="1" height="1" fill="#ffffff"/><rect x="2" y="8" width="11" height="1" fill="url(#y1)"/><rect x="13" y="8" width="1" height="1" fill="#808080"/><rect x="14" y="8" width="1" height="1" fill="#000000"/><rect x="0" y="9" width="1" height="1" fill="#808080"/><rect x="1" y="9" width="1" height="1" fill="#ffffff"/><rect x="2" y="9" width="11" height="1" fill="url(#y1)"/><rect x="13" y="9" width="1" height="1" fill="#808080"/><rect x="14" y="9" width="1" height="1" fill="#000000"/><rect x="0" y="10" width="1" height="1" fill="#808080"/><rect x="1" y="10" width="1" height="1" fill="#ffffff"/><rect x="2" y="10" width="11" height="1" fill="url(#y1)"/><rect x="13" y="10" width="1" height="1" fill="#808080"/><rect x="14" y="10" width="1" height="1" fill="#000000"/><rect x="0" y="11" width="1" height="1" fill="#808080"/><rect x="1" y="11" width="1" height="1" fill="#ffffff"/><rect x="2" y="11" width="11" height="1" fill="url(#y1)"/><rect x="13" y="11" width="1" height="1" fill="#808080"/><rect x="14" y="11" width="1" height="1" fill="#000000"/><rect x="0" y="12" width="14" height="1" fill="#808080"/><rect x="14" y="12" width="1" height="1" fill="#000000"/><rect x="1" y="13" width="14" height="1" fill="#000000"/></svg>
<span class="t" style="left:140px;top:205px;">aspnet_client</span>
<div style="left:115px;top:229px;width:1px;height:1px;background:#808080;"></div>
<div style="left:117px;top:229px;width:1px;height:1px;background:#808080;"></div>
<div style="left:119px;top:229px;width:1px;height:1px;background:#808080;"></div>
<div style="left:105px;top:225px;width:9px;height:9px;background:#808080;"></div>
<div style="left:106px;top:226px;width:7px;height:7px;background:#ffffff;"></div>
<div style="left:107px;top:229px;width:5px;height:1px;background:#000000;"></div>
<div style="left:109px;top:227px;width:1px;height:5px;background:#000000;"></div>
<svg style="left:120px;top:221px" width="15" height="14" shape-rendering="crispEdges"><rect x="2" y="1" width="5" height="1" fill="#808080"/><rect x="1" y="2" width="1" height="1" fill="#808080"/><rect x="2" y="2" width="5" height="1" fill="url(#y1)"/><rect x="7" y="2" width="1" height="1" fill="#808080"/><rect x="0" y="3" width="1" height="1" fill="#808080"/><rect x="1" y="3" width="7" height="1" fill="url(#y1)"/><rect x="8" y="3" width="6" height="1" fill="#808080"/><rect x="0" y="4" width="1" height="1" fill="#808080"/><rect x="1" y="4" width="12" height="1" fill="#ffffff"/><rect x="13" y="4" width="1" height="1" fill="#808080"/><rect x="14" y="4" width="1" height="1" fill="#000000"/><rect x="0" y="5" width="1" height="1" fill="#808080"/><rect x="1" y="5" width="1" height="1" fill="#ffffff"/><rect x="2" y="5" width="11" height="1" fill="url(#y1)"/><rect x="13" y="5" width="1" height="1" fill="#808080"/><rect x="14" y="5" width="1" height="1" fill="#000000"/><rect x="0" y="6" width="1" height="1" fill="#808080"/><rect x="1" y="6" width="1" height="1" fill="#ffffff"/><rect x="2" y="6" width="11" height="1" fill="url(#y1)"/><rect x="13" y="6" width="1" height="1" fill="#808080"/><rect x="14" y="6" width="1" height="1" fill="#000000"/><rect x="0" y="7" width="1" height="1" fill="#808080"/><rect x="1" y="7" width="1" height="1" fill="#ffffff"/><rect x="2" y="7" width="11" height="1" fill="url(#y1)"/><rect x="13" y="7" width="1" height="1" fill="#808080"/><rect x="14" y="7" width="1" height="1" fill="#000000"/><rect x="0" y="8" width="1" height="1" fill="#808080"/><rect x="1" y="8" width="1" height="1" fill="#ffffff"/><rect x="2" y="8" width="11" height="1" fill="url(#y1)"/><rect x="13" y="8" width="1" height="1" fill="#808080"/><rect x="14" y="8" width="1" height="1" fill="#000000"/><rect x="0" y="9" width="1" height="1" fill="#808080"/><rect x="1" y="9" width="1" height="1" fill="#ffffff"/><rect x="2" y="9" width="11" height="1" fill="url(#y1)"/><rect x="13" y="9" width="1" height="1" fill="#808080"/><rect x="14" y="9" width="1" height="1" fill="#000000"/><rect x="0" y="10" width="1" height="1" fill="#808080"/><rect x="1" y="10" width="1" height="1" fill="#ffffff"/><rect x="2" y="10" width="11" height="1" fill="url(#y1)"/><rect x="13" y="10" width="1" height="1" fill="#808080"/><rect x="14" y="10" width="1" height="1" fill="#000000"/><rect x="0" y="11" width="1" height="1" fill="#808080"/><rect x="1" y="11" width="1" height="1" fill="#ffffff"/><rect x="2" y="11" width="11" height="1" fill="url(#y1)"/><rect x="13" y="11" width="1" height="1" fill="#808080"/><rect x="14" y="11" width="1" height="1" fill="#000000"/><rect x="0" y="12" width="14" height="1" fill="#808080"/><rect x="14" y="12" width="1" height="1" fill="#000000"/><rect x="1" y="13" width="14" height="1" fill="#000000"/></svg>
<span class="t" style="left:140px;top:221px;">bin</span>
<div style="left:115px;top:245px;width:1px;height:1px;background:#808080;"></div>
<div style="left:117px;top:245px;width:1px;height:1px;background:#808080;"></div>
<div style="left:119px;top:245px;width:1px;height:1px;background:#808080;"></div>
<div style="left:105px;top:241px;width:9px;height:9px;background:#808080;"></div>
<div style="left:106px;top:242px;width:7px;height:7px;background:#ffffff;"></div>
<div style="left:107px;top:245px;width:5px;height:1px;background:#000000;"></div>
<div style="left:109px;top:243px;width:1px;height:5px;background:#000000;"></div>
<svg style="left:120px;top:237px" width="15" height="14" shape-rendering="crispEdges"><rect x="2" y="1" width="5" height="1" fill="#808080"/><rect x="1" y="2" width="1" height="1" fill="#808080"/><rect x="2" y="2" width="5" height="1" fill="url(#y1)"/><rect x="7" y="2" width="1" height="1" fill="#808080"/><rect x="0" y="3" width="1" height="1" fill="#808080"/><rect x="1" y="3" width="7" height="1" fill="url(#y1)"/><rect x="8" y="3" width="6" height="1" fill="#808080"/><rect x="0" y="4" width="1" height="1" fill="#808080"/><rect x="1" y="4" width="12" height="1" fill="#ffffff"/><rect x="13" y="4" width="1" height="1" fill="#808080"/><rect x="14" y="4" width="1" height="1" fill="#000000"/><rect x="0" y="5" width="1" height="1" fill="#808080"/><rect x="1" y="5" width="1" height="1" fill="#ffffff"/><rect x="2" y="5" width="11" height="1" fill="url(#y1)"/><rect x="13" y="5" width="1" height="1" fill="#808080"/><rect x="14" y="5" width="1" height="1" fill="#000000"/><rect x="0" y="6" width="1" height="1" fill="#808080"/><rect x="1" y="6" width="1" height="1" fill="#ffffff"/><rect x="2" y="6" width="11" height="1" fill="url(#y1)"/><rect x="13" y="6" width="1" height="1" fill="#808080"/><rect x="14" y="6" width="1" height="1" fill="#000000"/><rect x="0" y="7" width="1" height="1" fill="#808080"/><rect x="1" y="7" width="1" height="1" fill="#ffffff"/><rect x="2" y="7" width="11" height="1" fill="url(#y1)"/><rect x="13" y="7" width="1" height="1" fill="#808080"/><rect x="14" y="7" width="1" height="1" fill="#000000"/><rect x="0" y="8" width="1" height="1" fill="#808080"/><rect x="1" y="8" width="1" height="1" fill="#ffffff"/><rect x="2" y="8" width="11" height="1" fill="url(#y1)"/><rect x="13" y="8" width="1" height="1" fill="#808080"/><rect x="14" y="8" width="1" height="1" fill="#000000"/><rect x="0" y="9" width="1" height="1" fill="#808080"/><rect x="1" y="9" width="1" height="1" fill="#ffffff"/><rect x="2" y="9" width="11" height="1" fill="url(#y1)"/><rect x="13" y="9" width="1" height="1" fill="#808080"/><rect x="14" y="9" width="1" height="1" fill="#000000"/><rect x="0" y="10" width="1" height="1" fill="#808080"/><rect x="1" y="10" width="1" height="1" fill="#ffffff"/><rect x="2" y="10" width="11" height="1" fill="url(#y1)"/><rect x="13" y="10" width="1" height="1" fill="#808080"/><rect x="14" y="10" width="1" height="1" fill="#000000"/><rect x="0" y="11" width="1" height="1" fill="#808080"/><rect x="1" y="11" width="1" height="1" fill="#ffffff"/><rect x="2" y="11" width="11" height="1" fill="url(#y1)"/><rect x="13" y="11" width="1" height="1" fill="#808080"/><rect x="14" y="11" width="1" height="1" fill="#000000"/><rect x="0" y="12" width="14" height="1" fill="#808080"/><rect x="14" y="12" width="1" height="1" fill="#000000"/><rect x="1" y="13" width="14" height="1" fill="#000000"/></svg>
<span class="t" style="left:140px;top:237px;">cache</span>
<div style="left:115px;top:261px;width:1px;height:1px;background:#808080;"></div>
<div style="left:117px;top:261px;width:1px;height:1px;background:#808080;"></div>
<div style="left:119px;top:261px;width:1px;height:1px;background:#808080;"></div>
<div style="left:105px;top:257px;width:9px;height:9px;background:#808080;"></div>
<div style="left:106px;top:258px;width:7px;height:7px;background:#ffffff;"></div>
<div style="left:107px;top:261px;width:5px;height:1px;background:#000000;"></div>
<div style="left:109px;top:259px;width:1px;height:5px;background:#000000;"></div>
<svg style="left:120px;top:253px" width="15" height="14" shape-rendering="crispEdges"><rect x="2" y="1" width="5" height="1" fill="#808080"/><rect x="1" y="2" width="1" height="1" fill="#808080"/><rect x="2" y="2" width="5" height="1" fill="url(#y1)"/><rect x="7" y="2" width="1" height="1" fill="#808080"/><rect x="0" y="3" width="1" height="1" fill="#808080"/><rect x="1" y="3" width="7" height="1" fill="url(#y1)"/><rect x="8" y="3" width="6" height="1" fill="#808080"/><rect x="0" y="4" width="1" height="1" fill="#808080"/><rect x="1" y="4" width="12" height="1" fill="#ffffff"/><rect x="13" y="4" width="1" height="1" fill="#808080"/><rect x="14" y="4" width="1" height="1" fill="#000000"/><rect x="0" y="5" width="1" height="1" fill="#808080"/><rect x="1" y="5" width="1" height="1" fill="#ffffff"/><rect x="2" y="5" width="11" height="1" fill="url(#y1)"/><rect x="13" y="5" width="1" height="1" fill="#808080"/><rect x="14" y="5" width="1" height="1" fill="#000000"/><rect x="0" y="6" width="1" height="1" fill="#808080"/><rect x="1" y="6" width="1" height="1" fill="#ffffff"/><rect x="2" y="6" width="11" height="1" fill="url(#y1)"/><rect x="13" y="6" width="1" height="1" fill="#808080"/><rect x="14" y="6" width="1" height="1" fill="#000000"/><rect x="0" y="7" width="1" height="1" fill="#808080"/><rect x="1" y="7" width="1" height="1" fill="#ffffff"/><rect x="2" y="7" width="11" height="1" fill="url(#y1)"/><rect x="13" y="7" width="1" height="1" fill="#808080"/><rect x="14" y="7" width="1" height="1" fill="#000000"/><rect x="0" y="8" width="1" height="1" fill="#808080"/><rect x="1" y="8" width="1" height="1" fill="#ffffff"/><rect x="2" y="8" width="11" height="1" fill="url(#y1)"/><rect x="13" y="8" width="1" height="1" fill="#808080"/><rect x="14" y="8" width="1" height="1" fill="#000000"/><rect x="0" y="9" width="1" height="1" fill="#808080"/><rect x="1" y="9" width="1" height="1" fill="#ffffff"/><rect x="2" y="9" width="11" height="1" fill="url(#y1)"/><rect x="13" y="9" width="1" height="1" fill="#808080"/><rect x="14" y="9" width="1" height="1" fill="#000000"/><rect x="0" y="10" width="1" height="1" fill="#808080"/><rect x="1" y="10" width="1" height="1" fill="#ffffff"/><rect x="2" y="10" width="11" height="1" fill="url(#y1)"/><rect x="13" y="10" width="1" height="1" fill="#808080"/><rect x="14" y="10" width="1" height="1" fill="#000000"/><rect x="0" y="11" width="1" height="1" fill="#808080"/><rect x="1" y="11" width="1" height="1" fill="#ffffff"/><rect x="2" y="11" width="11" height="1" fill="url(#y1)"/><rect x="13" y="11" width="1" height="1" fill="#808080"/><rect x="14" y="11" width="1" height="1" fill="#000000"/><rect x="0" y="12" width="14" height="1" fill="#808080"/><rect x="14" y="12" width="1" height="1" fill="#000000"/><rect x="1" y="13" width="14" height="1" fill="#000000"/></svg>
<span class="t" style="left:140px;top:253px;">config</span>
<div style="left:115px;top:277px;width:1px;height:1px;background:#808080;"></div>
<div style="left:117px;top:277px;width:1px;height:1px;background:#808080;"></div>
<div style="left:119px;top:277px;width:1px;height:1px;background:#808080;"></div>
<div style="left:105px;top:273px;width:9px;height:9px;background:#808080;"></div>
<div style="left:106px;top:274px;width:7px;height:7px;background:#ffffff;"></div>
<div style="left:107px;top:277px;width:5px;height:1px;background:#000000;"></div>
<div style="left:109px;top:275px;width:1px;height:5px;background:#000000;"></div>
<svg style="left:120px;top:269px" width="15" height="14" shape-rendering="crispEdges"><rect x="2" y="1" width="5" height="1" fill="#808080"/><rect x="1" y="2" width="1" height="1" fill="#808080"/><rect x="2" y="2" width="5" height="1" fill="url(#y1)"/><rect x="7" y="2" width="1" height="1" fill="#808080"/><rect x="0" y="3" width="1" height="1" fill="#808080"/><rect x="1" y="3" width="7" height="1" fill="url(#y1)"/><rect x="8" y="3" width="6" height="1" fill="#808080"/><rect x="0" y="4" width="1" height="1" fill="#808080"/><rect x="1" y="4" width="12" height="1" fill="#ffffff"/><rect x="13" y="4" width="1" height="1" fill="#808080"/><rect x="14" y="4" width="1" height="1" fill="#000000"/><rect x="0" y="5" width="1" height="1" fill="#808080"/><rect x="1" y="5" width="1" height="1" fill="#ffffff"/><rect x="2" y="5" width="11" height="1" fill="url(#y1)"/><rect x="13" y="5" width="1" height="1" fill="#808080"/><rect x="14" y="5" width="1" height="1" fill="#000000"/><rect x="0" y="6" width="1" height="1" fill="#808080"/><rect x="1" y="6" width="1" height="1" fill="#ffffff"/><rect x="2" y="6" width="11" height="1" fill="url(#y1)"/><rect x="13" y="6" width="1" height="1" fill="#808080"/><rect x="14" y="6" width="1" height="1" fill="#000000"/><rect x="0" y="7" width="1" height="1" fill="#808080"/><rect x="1" y="7" width="1" height="1" fill="#ffffff"/><rect x="2" y="7" width="11" height="1" fill="url(#y1)"/><rect x="13" y="7" width="1" height="1" fill="#808080"/><rect x="14" y="7" width="1" height="1" fill="#000000"/><rect x="0" y="8" width="1" height="1" fill="#808080"/><rect x="1" y="8" width="1" height="1" fill="#ffffff"/><rect x="2" y="8" width="11" height="1" fill="url(#y1)"/><rect x="13" y="8" width="1" height="1" fill="#808080"/><rect x="14" y="8" width="1" height="1" fill="#000000"/><rect x="0" y="9" width="1" height="1" fill="#808080"/><rect x="1" y="9" width="1" height="1" fill="#ffffff"/><rect x="2" y="9" width="11" height="1" fill="url(#y1)"/><rect x="13" y="9" width="1" height="1" fill="#808080"/><rect x="14" y="9" width="1" height="1" fill="#000000"/><rect x="0" y="10" width="1" height="1" fill="#808080"/><rect x="1" y="10" width="1" height="1" fill="#ffffff"/><rect x="2" y="10" width="11" height="1" fill="url(#y1)"/><rect x="13" y="10" width="1" height="1" fill="#808080"/><rect x="14" y="10" width="1" height="1" fill="#000000"/><rect x="0" y="11" width="1" height="1" fill="#808080"/><rect x="1" y="11" width="1" height="1" fill="#ffffff"/><rect x="2" y="11" width="11" height="1" fill="url(#y1)"/><rect x="13" y="11" width="1" height="1" fill="#808080"/><rect x="14" y="11" width="1" height="1" fill="#000000"/><rect x="0" y="12" width="14" height="1" fill="#808080"/><rect x="14" y="12" width="1" height="1" fill="#000000"/><rect x="1" y="13" width="14" height="1" fill="#000000"/></svg>
<span class="t" style="left:140px;top:269px;">css</span>
<div style="left:115px;top:293px;width:1px;height:1px;background:#808080;"></div>
<div style="left:117px;top:293px;width:1px;height:1px;background:#808080;"></div>
<div style="left:119px;top:293px;width:1px;height:1px;background:#808080;"></div>
<div style="left:105px;top:289px;width:9px;height:9px;background:#808080;"></div>
<div style="left:106px;top:290px;width:7px;height:7px;background:#ffffff;"></div>
<div style="left:107px;top:293px;width:5px;height:1px;background:#000000;"></div>
<div style="left:109px;top:291px;width:1px;height:5px;background:#000000;"></div>
<svg style="left:120px;top:285px" width="15" height="14" shape-rendering="crispEdges"><rect x="2" y="1" width="5" height="1" fill="#808080"/><rect x="1" y="2" width="1" height="1" fill="#808080"/><rect x="2" y="2" width="5" height="1" fill="url(#y1)"/><rect x="7" y="2" width="1" height="1" fill="#808080"/><rect x="0" y="3" width="1" height="1" fill="#808080"/><rect x="1" y="3" width="7" height="1" fill="url(#y1)"/><rect x="8" y="3" width="6" height="1" fill="#808080"/><rect x="0" y="4" width="1" height="1" fill="#808080"/><rect x="1" y="4" width="12" height="1" fill="#ffffff"/><rect x="13" y="4" width="1" height="1" fill="#808080"/><rect x="14" y="4" width="1" height="1" fill="#000000"/><rect x="0" y="5" width="1" height="1" fill="#808080"/><rect x="1" y="5" width="1" height="1" fill="#ffffff"/><rect x="2" y="5" width="11" height="1" fill="url(#y1)"/><rect x="13" y="5" width="1" height="1" fill="#808080"/><rect x="14" y="5" width="1" height="1" fill="#000000"/><rect x="0" y="6" width="1" height="1" fill="#808080"/><rect x="1" y="6" width="1" height="1" fill="#ffffff"/><rect x="2" y="6" width="11" height="1" fill="url(#y1)"/><rect x="13" y="6" width="1" height="1" fill="#808080"/><rect x="14" y="6" width="1" height="1" fill="#000000"/><rect x="0" y="7" width="1" height="1" fill="#808080"/><rect x="1" y="7" width="1" height="1" fill="#ffffff"/><rect x="2" y="7" width="11" height="1" fill="url(#y1)"/><rect x="13" y="7" width="1" height="1" fill="#808080"/><rect x="14" y="7" width="1" height="1" fill="#000000"/><rect x="0" y="8" width="1" height="1" fill="#808080"/><rect x="1" y="8" width="1" height="1" fill="#ffffff"/><rect x="2" y="8" width="11" height="1" fill="url(#y1)"/><rect x="13" y="8" width="1" height="1" fill="#808080"/><rect x="14" y="8" width="1" height="1" fill="#000000"/><rect x="0" y="9" width="1" height="1" fill="#808080"/><rect x="1" y="9" width="1" height="1" fill="#ffffff"/><rect x="2" y="9" width="11" height="1" fill="url(#y1)"/><rect x="13" y="9" width="1" height="1" fill="#808080"/><rect x="14" y="9" width="1" height="1" fill="#000000"/><rect x="0" y="10" width="1" height="1" fill="#808080"/><rect x="1" y="10" width="1" height="1" fill="#ffffff"/><rect x="2" y="10" width="11" height="1" fill="url(#y1)"/><rect x="13" y="10" width="1" height="1" fill="#808080"/><rect x="14" y="10" width="1" height="1" fill="#000000"/><rect x="0" y="11" width="1" height="1" fill="#808080"/><rect x="1" y="11" width="1" height="1" fill="#ffffff"/><rect x="2" y="11" width="11" height="1" fill="url(#y1)"/><rect x="13" y="11" width="1" height="1" fill="#808080"/><rect x="14" y="11" width="1" height="1" fill="#000000"/><rect x="0" y="12" width="14" height="1" fill="#808080"/><rect x="14" y="12" width="1" height="1" fill="#000000"/><rect x="1" y="13" width="14" height="1" fill="#000000"/></svg>
<span class="t" style="left:140px;top:285px;">db</span>
<div style="left:115px;top:309px;width:1px;height:1px;background:#808080;"></div>
<div style="left:117px;top:309px;width:1px;height:1px;background:#808080;"></div>
<div style="left:119px;top:309px;width:1px;height:1px;background:#808080;"></div>
<div style="left:105px;top:305px;width:9px;height:9px;background:#808080;"></div>
<div style="left:106px;top:306px;width:7px;height:7px;background:#ffffff;"></div>
<div style="left:107px;top:309px;width:5px;height:1px;background:#000000;"></div>
<div style="left:109px;top:307px;width:1px;height:5px;background:#000000;"></div>
<svg style="left:120px;top:301px" width="15" height="14" shape-rendering="crispEdges"><rect x="2" y="1" width="5" height="1" fill="#808080"/><rect x="1" y="2" width="1" height="1" fill="#808080"/><rect x="2" y="2" width="5" height="1" fill="url(#y1)"/><rect x="7" y="2" width="1" height="1" fill="#808080"/><rect x="0" y="3" width="1" height="1" fill="#808080"/><rect x="1" y="3" width="7" height="1" fill="url(#y1)"/><rect x="8" y="3" width="6" height="1" fill="#808080"/><rect x="0" y="4" width="1" height="1" fill="#808080"/><rect x="1" y="4" width="12" height="1" fill="#ffffff"/><rect x="13" y="4" width="1" height="1" fill="#808080"/><rect x="14" y="4" width="1" height="1" fill="#000000"/><rect x="0" y="5" width="1" height="1" fill="#808080"/><rect x="1" y="5" width="1" height="1" fill="#ffffff"/><rect x="2" y="5" width="11" height="1" fill="url(#y1)"/><rect x="13" y="5" width="1" height="1" fill="#808080"/><rect x="14" y="5" width="1" height="1" fill="#000000"/><rect x="0" y="6" width="1" height="1" fill="#808080"/><rect x="1" y="6" width="1" height="1" fill="#ffffff"/><rect x="2" y="6" width="11" height="1" fill="url(#y1)"/><rect x="13" y="6" width="1" height="1" fill="#808080"/><rect x="14" y="6" width="1" height="1" fill="#000000"/><rect x="0" y="7" width="1" height="1" fill="#808080"/><rect x="1" y="7" width="1" height="1" fill="#ffffff"/><rect x="2" y="7" width="11" height="1" fill="url(#y1)"/><rect x="13" y="7" width="1" height="1" fill="#808080"/><rect x="14" y="7" width="1" height="1" fill="#000000"/><rect x="0" y="8" width="1" height="1" fill="#808080"/><rect x="1" y="8" width="1" height="1" fill="#ffffff"/><rect x="2" y="8" width="11" height="1" fill="url(#y1)"/><rect x="13" y="8" width="1" height="1" fill="#808080"/><rect x="14" y="8" width="1" height="1" fill="#000000"/><rect x="0" y="9" width="1" height="1" fill="#808080"/><rect x="1" y="9" width="1" height="1" fill="#ffffff"/><rect x="2" y="9" width="11" height="1" fill="url(#y1)"/><rect x="13" y="9" width="1" height="1" fill="#808080"/><rect x="14" y="9" width="1" height="1" fill="#000000"/><rect x="0" y="10" width="1" height="1" fill="#808080"/><rect x="1" y="10" width="1" height="1" fill="#ffffff"/><rect x="2" y="10" width="11" height="1" fill="url(#y1)"/><rect x="13" y="10" width="1" height="1" fill="#808080"/><rect x="14" y="10" width="1" height="1" fill="#000000"/><rect x="0" y="11" width="1" height="1" fill="#808080"/><rect x="1" y="11" width="1" height="1" fill="#ffffff"/><rect x="2" y="11" width="11" height="1" fill="url(#y1)"/><rect x="13" y="11" width="1" height="1" fill="#808080"/><rect x="14" y="11" width="1" height="1" fill="#000000"/><rect x="0" y="12" width="14" height="1" fill="#808080"/><rect x="14" y="12" width="1" height="1" fill="#000000"/><rect x="1" y="13" width="14" height="1" fill="#000000"/></svg>
<span class="t" style="left:140px;top:301px;">docs</span>
<div style="left:115px;top:325px;width:1px;height:1px;background:#808080;"></div>
<div style="left:117px;top:325px;width:1px;height:1px;background:#808080;"></div>
<div style="left:119px;top:325px;width:1px;height:1px;background:#808080;"></div>
<div style="left:105px;top:321px;width:9px;height:9px;background:#808080;"></div>
<div style="left:106px;top:322px;width:7px;height:7px;background:#ffffff;"></div>
<div style="left:107px;top:325px;width:5px;height:1px;background:#000000;"></div>
<div style="left:109px;top:323px;width:1px;height:5px;background:#000000;"></div>
<svg style="left:120px;top:317px" width="15" height="14" shape-rendering="crispEdges"><rect x="2" y="1" width="5" height="1" fill="#808080"/><rect x="1" y="2" width="1" height="1" fill="#808080"/><rect x="2" y="2" width="5" height="1" fill="url(#y1)"/><rect x="7" y="2" width="1" height="1" fill="#808080"/><rect x="0" y="3" width="1" height="1" fill="#808080"/><rect x="1" y="3" width="7" height="1" fill="url(#y1)"/><rect x="8" y="3" width="6" height="1" fill="#808080"/><rect x="0" y="4" width="1" height="1" fill="#808080"/><rect x="1" y="4" width="12" height="1" fill="#ffffff"/><rect x="13" y="4" width="1" height="1" fill="#808080"/><rect x="14" y="4" width="1" height="1" fill="#000000"/><rect x="0" y="5" width="1" height="1" fill="#808080"/><rect x="1" y="5" width="1" height="1" fill="#ffffff"/><rect x="2" y="5" width="11" height="1" fill="url(#y1)"/><rect x="13" y="5" width="1" height="1" fill="#808080"/><rect x="14" y="5" width="1" height="1" fill="#000000"/><rect x="0" y="6" width="1" height="1" fill="#808080"/><rect x="1" y="6" width="1" height="1" fill="#ffffff"/><rect x="2" y="6" width="11" height="1" fill="url(#y1)"/><rect x="13" y="6" width="1" height="1" fill="#808080"/><rect x="14" y="6" width="1" height="1" fill="#000000"/><rect x="0" y="7" width="1" height="1" fill="#808080"/><rect x="1" y="7" width="1" height="1" fill="#ffffff"/><rect x="2" y="7" width="11" height="1" fill="url(#y1)"/><rect x="13" y="7" width="1" height="1" fill="#808080"/><rect x="14" y="7" width="1" height="1" fill="#000000"/><rect x="0" y="8" width="1" height="1" fill="#808080"/><rect x="1" y="8" width="1" height="1" fill="#ffffff"/><rect x="2" y="8" width="11" height="1" fill="url(#y1)"/><rect x="13" y="8" width="1" height="1" fill="#808080"/><rect x="14" y="8" width="1" height="1" fill="#000000"/><rect x="0" y="9" width="1" height="1" fill="#808080"/><rect x="1" y="9" width="1" height="1" fill="#ffffff"/><rect x="2" y="9" width="11" height="1" fill="url(#y1)"/><rect x="13" y="9" width="1" height="1" fill="#808080"/><rect x="14" y="9" width="1" height="1" fill="#000000"/><rect x="0" y="10" width="1" height="1" fill="#808080"/><rect x="1" y="10" width="1" height="1" fill="#ffffff"/><rect x="2" y="10" width="11" height="1" fill="url(#y1)"/><rect x="13" y="10" width="1" height="1" fill="#808080"/><rect x="14" y="10" width="1" height="1" fill="#000000"/><rect x="0" y="11" width="1" height="1" fill="#808080"/><rect x="1" y="11" width="1" height="1" fill="#ffffff"/><rect x="2" y="11" width="11" height="1" fill="url(#y1)"/><rect x="13" y="11" width="1" height="1" fill="#808080"/><rect x="14" y="11" width="1" height="1" fill="#000000"/><rect x="0" y="12" width="14" height="1" fill="#808080"/><rect x="14" y="12" width="1" height="1" fill="#000000"/><rect x="1" y="13" width="14" height="1" fill="#000000"/></svg>
<span class="t" style="left:140px;top:317px;">graphics</span>
<div style="left:115px;top:341px;width:1px;height:1px;background:#808080;"></div>
<div style="left:117px;top:341px;width:1px;height:1px;background:#808080;"></div>
<div style="left:119px;top:341px;width:1px;height:1px;background:#808080;"></div>
<div style="left:105px;top:337px;width:9px;height:9px;background:#808080;"></div>
<div style="left:106px;top:338px;width:7px;height:7px;background:#ffffff;"></div>
<div style="left:107px;top:341px;width:5px;height:1px;background:#000000;"></div>
<div style="left:109px;top:339px;width:1px;height:5px;background:#000000;"></div>
<svg style="left:120px;top:333px" width="15" height="14" shape-rendering="crispEdges"><rect x="2" y="1" width="5" height="1" fill="#808080"/><rect x="1" y="2" width="1" height="1" fill="#808080"/><rect x="2" y="2" width="5" height="1" fill="url(#y1)"/><rect x="7" y="2" width="1" height="1" fill="#808080"/><rect x="0" y="3" width="1" height="1" fill="#808080"/><rect x="1" y="3" width="7" height="1" fill="url(#y1)"/><rect x="8" y="3" width="6" height="1" fill="#808080"/><rect x="0" y="4" width="1" height="1" fill="#808080"/><rect x="1" y="4" width="12" height="1" fill="#ffffff"/><rect x="13" y="4" width="1" height="1" fill="#808080"/><rect x="14" y="4" width="1" height="1" fill="#000000"/><rect x="0" y="5" width="1" height="1" fill="#808080"/><rect x="1" y="5" width="1" height="1" fill="#ffffff"/><rect x="2" y="5" width="11" height="1" fill="url(#y1)"/><rect x="13" y="5" width="1" height="1" fill="#808080"/><rect x="14" y="5" width="1" height="1" fill="#000000"/><rect x="0" y="6" width="1" height="1" fill="#808080"/><rect x="1" y="6" width="1" height="1" fill="#ffffff"/><rect x="2" y="6" width="11" height="1" fill="url(#y1)"/><rect x="13" y="6" width="1" height="1" fill="#808080"/><rect x="14" y="6" width="1" height="1" fill="#000000"/><rect x="0" y="7" width="1" height="1" fill="#808080"/><rect x="1" y="7" width="1" height="1" fill="#ffffff"/><rect x="2" y="7" width="11" height="1" fill="url(#y1)"/><rect x="13" y="7" width="1" height="1" fill="#808080"/><rect x="14" y="7" width="1" height="1" fill="#000000"/><rect x="0" y="8" width="1" height="1" fill="#808080"/><rect x="1" y="8" width="1" height="1" fill="#ffffff"/><rect x="2" y="8" width="11" height="1" fill="url(#y1)"/><rect x="13" y="8" width="1" height="1" fill="#808080"/><rect x="14" y="8" width="1" height="1" fill="#000000"/><rect x="0" y="9" width="1" height="1" fill="#808080"/><rect x="1" y="9" width="1" height="1" fill="#ffffff"/><rect x="2" y="9" width="11" height="1" fill="url(#y1)"/><rect x="13" y="9" width="1" height="1" fill="#808080"/><rect x="14" y="9" width="1" height="1" fill="#000000"/><rect x="0" y="10" width="1" height="1" fill="#808080"/><rect x="1" y="10" width="1" height="1" fill="#ffffff"/><rect x="2" y="10" width="11" height="1" fill="url(#y1)"/><rect x="13" y="10" width="1" height="1" fill="#808080"/><rect x="14" y="10" width="1" height="1" fill="#000000"/><rect x="0" y="11" width="1" height="1" fill="#808080"/><rect x="1" y="11" width="1" height="1" fill="#ffffff"/><rect x="2" y="11" width="11" height="1" fill="url(#y1)"/><rect x="13" y="11" width="1" height="1" fill="#808080"/><rect x="14" y="11" width="1" height="1" fill="#000000"/><rect x="0" y="12" width="14" height="1" fill="#808080"/><rect x="14" y="12" width="1" height="1" fill="#000000"/><rect x="1" y="13" width="14" height="1" fill="#000000"/></svg>
<span class="t" style="left:140px;top:333px;">images</span>
<div style="left:115px;top:357px;width:1px;height:1px;background:#808080;"></div>
<div style="left:117px;top:357px;width:1px;height:1px;background:#808080;"></div>
<div style="left:119px;top:357px;width:1px;height:1px;background:#808080;"></div>
<div style="left:105px;top:353px;width:9px;height:9px;background:#808080;"></div>
<div style="left:106px;top:354px;width:7px;height:7px;background:#ffffff;"></div>
<div style="left:107px;top:357px;width:5px;height:1px;background:#000000;"></div>
<div style="left:109px;top:355px;width:1px;height:5px;background:#000000;"></div>
<svg style="left:120px;top:349px" width="15" height="14" shape-rendering="crispEdges"><rect x="2" y="1" width="5" height="1" fill="#808080"/><rect x="1" y="2" width="1" height="1" fill="#808080"/><rect x="2" y="2" width="5" height="1" fill="url(#y1)"/><rect x="7" y="2" width="1" height="1" fill="#808080"/><rect x="0" y="3" width="1" height="1" fill="#808080"/><rect x="1" y="3" width="7" height="1" fill="url(#y1)"/><rect x="8" y="3" width="6" height="1" fill="#808080"/><rect x="0" y="4" width="1" height="1" fill="#808080"/><rect x="1" y="4" width="12" height="1" fill="#ffffff"/><rect x="13" y="4" width="1" height="1" fill="#808080"/><rect x="14" y="4" width="1" height="1" fill="#000000"/><rect x="0" y="5" width="1" height="1" fill="#808080"/><rect x="1" y="5" width="1" height="1" fill="#ffffff"/><rect x="2" y="5" width="11" height="1" fill="url(#y1)"/><rect x="13" y="5" width="1" height="1" fill="#808080"/><rect x="14" y="5" width="1" height="1" fill="#000000"/><rect x="0" y="6" width="1" height="1" fill="#808080"/><rect x="1" y="6" width="1" height="1" fill="#ffffff"/><rect x="2" y="6" width="11" height="1" fill="url(#y1)"/><rect x="13" y="6" width="1" height="1" fill="#808080"/><rect x="14" y="6" width="1" height="1" fill="#000000"/><rect x="0" y="7" width="1" height="1" fill="#808080"/><rect x="1" y="7" width="1" height="1" fill="#ffffff"/><rect x="2" y="7" width="11" height="1" fill="url(#y1)"/><rect x="13" y="7" width="1" height="1" fill="#808080"/><rect x="14" y="7" width="1" height="1" fill="#000000"/><rect x="0" y="8" width="1" height="1" fill="#808080"/><rect x="1" y="8" width="1" height="1" fill="#ffffff"/><rect x="2" y="8" width="11" height="1" fill="url(#y1)"/><rect x="13" y="8" width="1" height="1" fill="#808080"/><rect x="14" y="8" width="1" height="1" fill="#000000"/><rect x="0" y="9" width="1" height="1" fill="#808080"/><rect x="1" y="9" width="1" height="1" fill="#ffffff"/><rect x="2" y="9" width="11" height="1" fill="url(#y1)"/><rect x="13" y="9" width="1" height="1" fill="#808080"/><rect x="14" y="9" width="1" height="1" fill="#000000"/><rect x="0" y="10" width="1" height="1" fill="#808080"/><rect x="1" y="10" width="1" height="1" fill="#ffffff"/><rect x="2" y="10" width="11" height="1" fill="url(#y1)"/><rect x="13" y="10" width="1" height="1" fill="#808080"/><rect x="14" y="10" width="1" height="1" fill="#000000"/><rect x="0" y="11" width="1" height="1" fill="#808080"/><rect x="1" y="11" width="1" height="1" fill="#ffffff"/><rect x="2" y="11" width="11" height="1" fill="url(#y1)"/><rect x="13" y="11" width="1" height="1" fill="#808080"/><rect x="14" y="11" width="1" height="1" fill="#000000"/><rect x="0" y="12" width="14" height="1" fill="#808080"/><rect x="14" y="12" width="1" height="1" fill="#000000"/><rect x="1" y="13" width="14" height="1" fill="#000000"/></svg>
<span class="t" style="left:140px;top:349px;">inc</span>
<div style="left:115px;top:373px;width:1px;height:1px;background:#808080;"></div>
<div style="left:117px;top:373px;width:1px;height:1px;background:#808080;"></div>
<div style="left:119px;top:373px;width:1px;height:1px;background:#808080;"></div>
<div style="left:105px;top:369px;width:9px;height:9px;background:#808080;"></div>
<div style="left:106px;top:370px;width:7px;height:7px;background:#ffffff;"></div>
<div style="left:107px;top:373px;width:5px;height:1px;background:#000000;"></div>
<div style="left:109px;top:371px;width:1px;height:5px;background:#000000;"></div>
<svg style="left:120px;top:365px" width="15" height="14" shape-rendering="crispEdges"><rect x="2" y="1" width="5" height="1" fill="#808080"/><rect x="1" y="2" width="1" height="1" fill="#808080"/><rect x="2" y="2" width="5" height="1" fill="url(#y1)"/><rect x="7" y="2" width="1" height="1" fill="#808080"/><rect x="0" y="3" width="1" height="1" fill="#808080"/><rect x="1" y="3" width="7" height="1" fill="url(#y1)"/><rect x="8" y="3" width="6" height="1" fill="#808080"/><rect x="0" y="4" width="1" height="1" fill="#808080"/><rect x="1" y="4" width="12" height="1" fill="#ffffff"/><rect x="13" y="4" width="1" height="1" fill="#808080"/><rect x="14" y="4" width="1" height="1" fill="#000000"/><rect x="0" y="5" width="1" height="1" fill="#808080"/><rect x="1" y="5" width="1" height="1" fill="#ffffff"/><rect x="2" y="5" width="11" height="1" fill="url(#y1)"/><rect x="13" y="5" width="1" height="1" fill="#808080"/><rect x="14" y="5" width="1" height="1" fill="#000000"/><rect x="0" y="6" width="1" height="1" fill="#808080"/><rect x="1" y="6" width="1" height="1" fill="#ffffff"/><rect x="2" y="6" width="11" height="1" fill="url(#y1)"/><rect x="13" y="6" width="1" height="1" fill="#808080"/><rect x="14" y="6" width="1" height="1" fill="#000000"/><rect x="0" y="7" width="1" height="1" fill="#808080"/><rect x="1" y="7" width="1" height="1" fill="#ffffff"/><rect x="2" y="7" width="11" height="1" fill="url(#y1)"/><rect x="13" y="7" width="1" height="1" fill="#808080"/><rect x="14" y="7" width="1" height="1" fill="#000000"/><rect x="0" y="8" width="1" height="1" fill="#808080"/><rect x="1" y="8" width="1" height="1" fill="#ffffff"/><rect x="2" y="8" width="11" height="1" fill="url(#y1)"/><rect x="13" y="8" width="1" height="1" fill="#808080"/><rect x="14" y="8" width="1" height="1" fill="#000000"/><rect x="0" y="9" width="1" height="1" fill="#808080"/><rect x="1" y="9" width="1" height="1" fill="#ffffff"/><rect x="2" y="9" width="11" height="1" fill="url(#y1)"/><rect x="13" y="9" width="1" height="1" fill="#808080"/><rect x="14" y="9" width="1" height="1" fill="#000000"/><rect x="0" y="10" width="1" height="1" fill="#808080"/><rect x="1" y="10" width="1" height="1" fill="#ffffff"/><rect x="2" y="10" width="11" height="1" fill="url(#y1)"/><rect x="13" y="10" width="1" height="1" fill="#808080"/><rect x="14" y="10" width="1" height="1" fill="#000000"/><rect x="0" y="11" width="1" height="1" fill="#808080"/><rect x="1" y="11" width="1" height="1" fill="#ffffff"/><rect x="2" y="11" width="11" height="1" fill="url(#y1)"/><rect x="13" y="11" width="1" height="1" fill="#808080"/><rect x="14" y="11" width="1" height="1" fill="#000000"/><rect x="0" y="12" width="14" height="1" fill="#808080"/><rect x="14" y="12" width="1" height="1" fill="#000000"/><rect x="1" y="13" width="14" height="1" fill="#000000"/></svg>
<span class="t" style="left:140px;top:365px;">js</span>
<div style="left:115px;top:389px;width:1px;height:1px;background:#808080;"></div>
<div style="left:117px;top:389px;width:1px;height:1px;background:#808080;"></div>
<div style="left:119px;top:389px;width:1px;height:1px;background:#808080;"></div>
<div style="left:105px;top:385px;width:9px;height:9px;background:#808080;"></div>
<div style="left:106px;top:386px;width:7px;height:7px;background:#ffffff;"></div>
<div style="left:107px;top:389px;width:5px;height:1px;background:#000000;"></div>
<div style="left:109px;top:387px;width:1px;height:5px;background:#000000;"></div>
<svg style="left:120px;top:381px" width="15" height="14" shape-rendering="crispEdges"><rect x="2" y="1" width="5" height="1" fill="#808080"/><rect x="1" y="2" width="1" height="1" fill="#808080"/><rect x="2" y="2" width="5" height="1" fill="url(#y1)"/><rect x="7" y="2" width="1" height="1" fill="#808080"/><rect x="0" y="3" width="1" height="1" fill="#808080"/><rect x="1" y="3" width="7" height="1" fill="url(#y1)"/><rect x="8" y="3" width="6" height="1" fill="#808080"/><rect x="0" y="4" width="1" height="1" fill="#808080"/><rect x="1" y="4" width="12" height="1" fill="#ffffff"/><rect x="13" y="4" width="1" height="1" fill="#808080"/><rect x="14" y="4" width="1" height="1" fill="#000000"/><rect x="0" y="5" width="1" height="1" fill="#808080"/><rect x="1" y="5" width="1" height="1" fill="#ffffff"/><rect x="2" y="5" width="11" height="1" fill="url(#y1)"/><rect x="13" y="5" width="1" height="1" fill="#808080"/><rect x="14" y="5" width="1" height="1" fill="#000000"/><rect x="0" y="6" width="1" height="1" fill="#808080"/><rect x="1" y="6" width="1" height="1" fill="#ffffff"/><rect x="2" y="6" width="11" height="1" fill="url(#y1)"/><rect x="13" y="6" width="1" height="1" fill="#808080"/><rect x="14" y="6" width="1" height="1" fill="#000000"/><rect x="0" y="7" width="1" height="1" fill="#808080"/><rect x="1" y="7" width="1" height="1" fill="#ffffff"/><rect x="2" y="7" width="11" height="1" fill="url(#y1)"/><rect x="13" y="7" width="1" height="1" fill="#808080"/><rect x="14" y="7" width="1" height="1" fill="#000000"/><rect x="0" y="8" width="1" height="1" fill="#808080"/><rect x="1" y="8" width="1" height="1" fill="#ffffff"/><rect x="2" y="8" width="11" height="1" fill="url(#y1)"/><rect x="13" y="8" width="1" height="1" fill="#808080"/><rect x="14" y="8" width="1" height="1" fill="#000000"/><rect x="0" y="9" width="1" height="1" fill="#808080"/><rect x="1" y="9" width="1" height="1" fill="#ffffff"/><rect x="2" y="9" width="11" height="1" fill="url(#y1)"/><rect x="13" y="9" width="1" height="1" fill="#808080"/><rect x="14" y="9" width="1" height="1" fill="#000000"/><rect x="0" y="10" width="1" height="1" fill="#808080"/><rect x="1" y="10" width="1" height="1" fill="#ffffff"/><rect x="2" y="10" width="11" height="1" fill="url(#y1)"/><rect x="13" y="10" width="1" height="1" fill="#808080"/><rect x="14" y="10" width="1" height="1" fill="#000000"/><rect x="0" y="11" width="1" height="1" fill="#808080"/><rect x="1" y="11" width="1" height="1" fill="#ffffff"/><rect x="2" y="11" width="11" height="1" fill="url(#y1)"/><rect x="13" y="11" width="1" height="1" fill="#808080"/><rect x="14" y="11" width="1" height="1" fill="#000000"/><rect x="0" y="12" width="14" height="1" fill="#808080"/><rect x="14" y="12" width="1" height="1" fill="#000000"/><rect x="1" y="13" width="14" height="1" fill="#000000"/></svg>
<span class="t" style="left:140px;top:381px;">lan</span>
<div style="left:115px;top:405px;width:1px;height:1px;background:#808080;"></div>
<div style="left:117px;top:405px;width:1px;height:1px;background:#808080;"></div>
<div style="left:119px;top:405px;width:1px;height:1px;background:#808080;"></div>
<div style="left:105px;top:401px;width:9px;height:9px;background:#808080;"></div>
<div style="left:106px;top:402px;width:7px;height:7px;background:#ffffff;"></div>
<div style="left:107px;top:405px;width:5px;height:1px;background:#000000;"></div>
<div style="left:109px;top:403px;width:1px;height:5px;background:#000000;"></div>
<svg style="left:120px;top:397px" width="15" height="14" shape-rendering="crispEdges"><rect x="2" y="1" width="5" height="1" fill="#808080"/><rect x="1" y="2" width="1" height="1" fill="#808080"/><rect x="2" y="2" width="5" height="1" fill="url(#y1)"/><rect x="7" y="2" width="1" height="1" fill="#808080"/><rect x="0" y="3" width="1" height="1" fill="#808080"/><rect x="1" y="3" width="7" height="1" fill="url(#y1)"/><rect x="8" y="3" width="6" height="1" fill="#808080"/><rect x="0" y="4" width="1" height="1" fill="#808080"/><rect x="1" y="4" width="12" height="1" fill="#ffffff"/><rect x="13" y="4" width="1" height="1" fill="#808080"/><rect x="14" y="4" width="1" height="1" fill="#000000"/><rect x="0" y="5" width="1" height="1" fill="#808080"/><rect x="1" y="5" width="1" height="1" fill="#ffffff"/><rect x="2" y="5" width="11" height="1" fill="url(#y1)"/><rect x="13" y="5" width="1" height="1" fill="#808080"/><rect x="14" y="5" width="1" height="1" fill="#000000"/><rect x="0" y="6" width="1" height="1" fill="#808080"/><rect x="1" y="6" width="1" height="1" fill="#ffffff"/><rect x="2" y="6" width="11" height="1" fill="url(#y1)"/><rect x="13" y="6" width="1" height="1" fill="#808080"/><rect x="14" y="6" width="1" height="1" fill="#000000"/><rect x="0" y="7" width="1" height="1" fill="#808080"/><rect x="1" y="7" width="1" height="1" fill="#ffffff"/><rect x="2" y="7" width="11" height="1" fill="url(#y1)"/><rect x="13" y="7" width="1" height="1" fill="#808080"/><rect x="14" y="7" width="1" height="1" fill="#000000"/><rect x="0" y="8" width="1" height="1" fill="#808080"/><rect x="1" y="8" width="1" height="1" fill="#ffffff"/><rect x="2" y="8" width="11" height="1" fill="url(#y1)"/><rect x="13" y="8" width="1" height="1" fill="#808080"/><rect x="14" y="8" width="1" height="1" fill="#000000"/><rect x="0" y="9" width="1" height="1" fill="#808080"/><rect x="1" y="9" width="1" height="1" fill="#ffffff"/><rect x="2" y="9" width="11" height="1" fill="url(#y1)"/><rect x="13" y="9" width="1" height="1" fill="#808080"/><rect x="14" y="9" width="1" height="1" fill="#000000"/><rect x="0" y="10" width="1" height="1" fill="#808080"/><rect x="1" y="10" width="1" height="1" fill="#ffffff"/><rect x="2" y="10" width="11" height="1" fill="url(#y1)"/><rect x="13" y="10" width="1" height="1" fill="#808080"/><rect x="14" y="10" width="1" height="1" fill="#000000"/><rect x="0" y="11" width="1" height="1" fill="#808080"/><rect x="1" y="11" width="1" height="1" fill="#ffffff"/><rect x="2" y="11" width="11" height="1" fill="url(#y1)"/><rect x="13" y="11" width="1" height="1" fill="#808080"/><rect x="14" y="11" width="1" height="1" fill="#000000"/><rect x="0" y="12" width="14" height="1" fill="#808080"/><rect x="14" y="12" width="1" height="1" fill="#000000"/><rect x="1" y="13" width="14" height="1" fill="#000000"/></svg>
<span class="t" style="left:140px;top:397px;">tests</span>
<div style="left:95px;top:421px;width:1px;height:1px;background:#808080;"></div>
<div style="left:97px;top:421px;width:1px;height:1px;background:#808080;"></div>
<div style="left:99px;top:421px;width:1px;height:1px;background:#808080;"></div>
<div style="left:86px;top:417px;width:9px;height:9px;background:#808080;"></div>
<div style="left:87px;top:418px;width:7px;height:7px;background:#ffffff;"></div>
<div style="left:88px;top:421px;width:5px;height:1px;background:#000000;"></div>
<div style="left:90px;top:419px;width:1px;height:5px;background:#000000;"></div>
<svg style="left:101px;top:413px" width="16" height="13" shape-rendering="crispEdges"><rect x="2" y="1" width="5" height="1" fill="#808080"/><rect x="1" y="2" width="1" height="1" fill="#808080"/><rect x="2" y="2" width="5" height="1" fill="url(#y0)"/><rect x="7" y="2" width="1" height="1" fill="#808080"/><rect x="0" y="3" width="1" height="1" fill="#808080"/><rect x="1" y="3" width="7" height="1" fill="url(#y0)"/><rect x="8" y="3" width="6" height="1" fill="#808080"/><rect x="0" y="4" width="1" height="1" fill="#808080"/><rect x="1" y="4" width="12" height="1" fill="#ffffff"/><rect x="13" y="4" width="1" height="1" fill="#808080"/><rect x="14" y="4" width="1" height="1" fill="#000000"/><rect x="0" y="5" width="1" height="1" fill="#808080"/><rect x="1" y="5" width="1" height="1" fill="#ffffff"/><rect x="2" y="5" width="11" height="1" fill="url(#y0)"/><rect x="13" y="5" width="1" height="1" fill="#808080"/><rect x="14" y="5" width="1" height="1" fill="#000000"/><rect x="0" y="6" width="1" height="1" fill="#808080"/><rect x="1" y="6" width="1" height="1" fill="#ffffff"/><rect x="2" y="6" width="11" height="1" fill="url(#y0)"/><rect x="13" y="6" width="1" height="1" fill="#808080"/><rect x="14" y="6" width="1" height="1" fill="#000000"/><rect x="0" y="7" width="1" height="1" fill="#808080"/><rect x="1" y="7" width="1" height="1" fill="#ffffff"/><rect x="2" y="7" width="7" height="1" fill="url(#y0)"/><rect x="9" y="7" width="4" height="1" fill="#0000ff"/><rect x="13" y="7" width="1" height="1" fill="#808080"/><rect x="14" y="7" width="1" height="1" fill="#000000"/><rect x="0" y="8" width="1" height="1" fill="#808080"/><rect x="1" y="8" width="1" height="1" fill="#ffffff"/><rect x="2" y="8" width="5" height="1" fill="url(#y0)"/><rect x="7" y="8" width="1" height="1" fill="#0000ff"/><rect x="8" y="8" width="1" height="1" fill="#00ff00"/><rect x="9" y="8" width="4" height="1" fill="#0000ff"/><rect x="13" y="8" width="1" height="1" fill="#008000"/><rect x="14" y="8" width="1" height="1" fill="#000000"/><rect x="0" y="9" width="1" height="1" fill="#808080"/><rect x="1" y="9" width="1" height="1" fill="#ffffff"/><rect x="2" y="9" width="4" height="1" fill="url(#y0)"/><rect x="6" y="9" width="1" height="1" fill="#0000ff"/><rect x="7" y="9" width="1" height="1" fill="#00ff00"/><rect x="8" y="9" width="4" height="1" fill="#0000ff"/><rect x="12" y="9" width="2" height="1" fill="#008000"/><rect x="14" y="9" width="1" height="1" fill="#000000"/><rect x="0" y="10" width="1" height="1" fill="#808080"/><rect x="1" y="10" width="1" height="1" fill="#ffffff"/><rect x="2" y="10" width="4" height="1" fill="url(#y0)"/><rect x="6" y="10" width="2" height="1" fill="#0000ff"/><rect x="8" y="10" width="1" height="1" fill="#00ff00"/><rect x="9" y="10" width="3" height="1" fill="#0000ff"/><rect x="12" y="10" width="3" height="1" fill="#008000"/><rect x="15" y="10" width="1" height="1" fill="#000000"/><rect x="0" y="11" width="1" height="1" fill="#808080"/><rect x="1" y="11" width="1" height="1" fill="#ffffff"/><rect x="2" y="11" width="4" height="1" fill="url(#y0)"/><rect x="6" y="11" width="5" height="1" fill="#0000ff"/><rect x="11" y="11" width="4" height="1" fill="#008000"/><rect x="15" y="11" width="1" height="1" fill="#000000"/><rect x="0" y="12" width="6" height="1" fill="#808080"/><rect x="6" y="12" width="6" height="1" fill="#0000ff"/><rect x="12" y="12" width="2" height="1" fill="#008000"/><rect x="14" y="12" width="2" height="1" fill="#000000"/></svg>
<span class="t" style="left:121px;top:413px;">Printers</span>
<svg style="left:270px;top:93px" width="16" height="317" shape-rendering="crispEdges"><defs><pattern id="p270_93" x="0" y="1" width="2" height="2" patternUnits="userSpaceOnUse"><rect width="2" height="2" fill="#ffffff"/><rect width="1" height="1" fill="#d4d0c8"/><rect x="1" y="1" width="1" height="1" fill="#d4d0c8"/></pattern></defs><rect width="16" height="317" fill="url(#p270_93)"/></svg>
<div style="left:270px;top:77px;width:16px;height:16px;background:#404040;"></div>
<div style="left:270px;top:77px;width:15px;height:15px;background:#d4d0c8;"></div>
<div style="left:271px;top:78px;width:14px;height:14px;background:#808080;"></div>
<div style="left:271px;top:78px;width:13px;height:13px;background:#ffffff;"></div>
<div style="left:272px;top:79px;width:12px;height:12px;background:#d4d0c8;"></div>
<div style="left:277px;top:83px;width:1px;height:1px;background:#000;"></div>
<div style="left:276px;top:84px;width:3px;height:1px;background:#000;"></div>
<div style="left:275px;top:85px;width:5px;height:1px;background:#000;"></div>
<div style="left:274px;top:86px;width:7px;height:1px;background:#000;"></div>
<div style="left:270px;top:186px;width:16px;height:115px;background:#404040;"></div>
<div style="left:270px;top:186px;width:15px;height:114px;background:#d4d0c8;"></div>
<div style="left:271px;top:187px;width:14px;height:113px;background:#808080;"></div>
<div style="left:271px;top:187px;width:13px;height:112px;background:#ffffff;"></div>
<div style="left:272px;top:188px;width:12px;height:111px;background:#d4d0c8;"></div>
<div style="left:270px;top:410px;width:16px;height:16px;background:#404040;"></div>
<div style="left:270px;top:410px;width:15px;height:15px;background:#d4d0c8;"></div>
<div style="left:271px;top:411px;width:14px;height:14px;background:#808080;"></div>
<div style="left:271px;top:411px;width:13px;height:13px;background:#ffffff;"></div>
<div style="left:272px;top:412px;width:12px;height:12px;background:#d4d0c8;"></div>
<div style="left:274px;top:416px;width:7px;height:1px;background:#000;"></div>
<div style="left:275px;top:417px;width:5px;height:1px;background:#000;"></div>
<div style="left:276px;top:418px;width:3px;height:1px;background:#000;"></div>
<div style="left:277px;top:419px;width:1px;height:1px;background:#000;"></div>
<div style="left:291px;top:75px;width:343px;height:353px;background:#ffffff;"></div>
<div style="left:291px;top:75px;width:342px;height:352px;background:#808080;"></div>
<div style="left:292px;top:76px;width:341px;height:351px;background:#d4d0c8;"></div>
<div style="left:292px;top:76px;width:340px;height:350px;background:#404040;"></div>
<div style="left:293px;top:77px;width:339px;height:349px;background:#fff;"></div>
<svg style="left:295px;top:96px" width="15" height="14" shape-rendering="crispEdges"><rect x="2" y="1" width="5" height="1" fill="#808080"/><rect x="1" y="2" width="1" height="1" fill="#808080"/><rect x="2" y="2" width="5" height="1" fill="url(#y1)"/><rect x="7" y="2" width="1" height="1" fill="#808080"/><rect x="0" y="3" width="1" height="1" fill="#808080"/><rect x="1" y="3" width="7" height="1" fill="url(#y1)"/><rect x="8" y="3" width="6" height="1" fill="#808080"/><rect x="0" y="4" width="1" height="1" fill="#808080"/><rect x="1" y="4" width="12" height="1" fill="#ffffff"/><rect x="13" y="4" width="1" height="1" fill="#808080"/><rect x="14" y="4" width="1" height="1" fill="#000000"/><rect x="0" y="5" width="1" height="1" fill="#808080"/><rect x="1" y="5" width="1" height="1" fill="#ffffff"/><rect x="2" y="5" width="11" height="1" fill="url(#y1)"/><rect x="13" y="5" width="1" height="1" fill="#808080"/><rect x="14" y="5" width="1" height="1" fill="#000000"/><rect x="0" y="6" width="1" height="1" fill="#808080"/><rect x="1" y="6" width="1" height="1" fill="#ffffff"/><rect x="2" y="6" width="11" height="1" fill="url(#y1)"/><rect x="13" y="6" width="1" height="1" fill="#808080"/><rect x="14" y="6" width="1" height="1" fill="#000000"/><rect x="0" y="7" width="1" height="1" fill="#808080"/><rect x="1" y="7" width="1" height="1" fill="#ffffff"/><rect x="2" y="7" width="11" height="1" fill="url(#y1)"/><rect x="13" y="7" width="1" height="1" fill="#808080"/><rect x="14" y="7" width="1" height="1" fill="#000000"/><rect x="0" y="8" width="1" height="1" fill="#808080"/><rect x="1" y="8" width="1" height="1" fill="#ffffff"/><rect x="2" y="8" width="11" height="1" fill="url(#y1)"/><rect x="13" y="8" width="1" height="1" fill="#808080"/><rect x="14" y="8" width="1" height="1" fill="#000000"/><rect x="0" y="9" width="1" height="1" fill="#808080"/><rect x="1" y="9" width="1" height="1" fill="#ffffff"/><rect x="2" y="9" width="11" height="1" fill="url(#y1)"/><rect x="13" y="9" width="1" height="1" fill="#808080"/><rect x="14" y="9" width="1" height="1" fill="#000000"/><rect x="0" y="10" width="1" height="1" fill="#808080"/><rect x="1" y="10" width="1" height="1" fill="#ffffff"/><rect x="2" y="10" width="11" height="1" fill="url(#y1)"/><rect x="13" y="10" width="1" height="1" fill="#808080"/><rect x="14" y="10" width="1" height="1" fill="#000000"/><rect x="0" y="11" width="1" height="1" fill="#808080"/><rect x="1" y="11" width="1" height="1" fill="#ffffff"/><rect x="2" y="11" width="11" height="1" fill="url(#y1)"/><rect x="13" y="11" width="1" height="1" fill="#808080"/><rect x="14" y="11" width="1" height="1" fill="#000000"/><rect x="0" y="12" width="14" height="1" fill="#808080"/><rect x="14" y="12" width="1" height="1" fill="#000000"/><rect x="1" y="13" width="14" height="1" fill="#000000"/></svg>
<span class="t" style="left:312px;top:97px;">addons</span>
<svg style="left:295px;top:113px" width="15" height="14" shape-rendering="crispEdges"><rect x="2" y="1" width="5" height="1" fill="#808080"/><rect x="1" y="2" width="1" height="1" fill="#808080"/><rect x="2" y="2" width="5" height="1" fill="url(#y0)"/><rect x="7" y="2" width="1" height="1" fill="#808080"/><rect x="0" y="3" width="1" height="1" fill="#808080"/><rect x="1" y="3" width="7" height="1" fill="url(#y0)"/><rect x="8" y="3" width="6" height="1" fill="#808080"/><rect x="0" y="4" width="1" height="1" fill="#808080"/><rect x="1" y="4" width="12" height="1" fill="#ffffff"/><rect x="13" y="4" width="1" height="1" fill="#808080"/><rect x="14" y="4" width="1" height="1" fill="#000000"/><rect x="0" y="5" width="1" height="1" fill="#808080"/><rect x="1" y="5" width="1" height="1" fill="#ffffff"/><rect x="2" y="5" width="11" height="1" fill="url(#y0)"/><rect x="13" y="5" width="1" height="1" fill="#808080"/><rect x="14" y="5" width="1" height="1" fill="#000000"/><rect x="0" y="6" width="1" height="1" fill="#808080"/><rect x="1" y="6" width="1" height="1" fill="#ffffff"/><rect x="2" y="6" width="11" height="1" fill="url(#y0)"/><rect x="13" y="6" width="1" height="1" fill="#808080"/><rect x="14" y="6" width="1" height="1" fill="#000000"/><rect x="0" y="7" width="1" height="1" fill="#808080"/><rect x="1" y="7" width="1" height="1" fill="#ffffff"/><rect x="2" y="7" width="11" height="1" fill="url(#y0)"/><rect x="13" y="7" width="1" height="1" fill="#808080"/><rect x="14" y="7" width="1" height="1" fill="#000000"/><rect x="0" y="8" width="1" height="1" fill="#808080"/><rect x="1" y="8" width="1" height="1" fill="#ffffff"/><rect x="2" y="8" width="11" height="1" fill="url(#y0)"/><rect x="13" y="8" width="1" height="1" fill="#808080"/><rect x="14" y="8" width="1" height="1" fill="#000000"/><rect x="0" y="9" width="1" height="1" fill="#808080"/><rect x="1" y="9" width="1" height="1" fill="#ffffff"/><rect x="2" y="9" width="11" height="1" fill="url(#y0)"/><rect x="13" y="9" width="1" height="1" fill="#808080"/><rect x="14" y="9" width="1" height="1" fill="#000000"/><rect x="0" y="10" width="1" height="1" fill="#808080"/><rect x="1" y="10" width="1" height="1" fill="#ffffff"/><rect x="2" y="10" width="11" height="1" fill="url(#y0)"/><rect x="13" y="10" width="1" height="1" fill="#808080"/><rect x="14" y="10" width="1" height="1" fill="#000000"/><rect x="0" y="11" width="1" height="1" fill="#808080"/><rect x="1" y="11" width="1" height="1" fill="#ffffff"/><rect x="2" y="11" width="11" height="1" fill="url(#y0)"/><rect x="13" y="11" width="1" height="1" fill="#808080"/><rect x="14" y="11" width="1" height="1" fill="#000000"/><rect x="0" y="12" width="14" height="1" fill="#808080"/><rect x="14" y="12" width="1" height="1" fill="#000000"/><rect x="1" y="13" width="14" height="1" fill="#000000"/></svg>
<span class="t" style="left:312px;top:114px;">admin</span>
<svg style="left:295px;top:130px" width="15" height="14" shape-rendering="crispEdges"><rect x="2" y="1" width="5" height="1" fill="#808080"/><rect x="1" y="2" width="1" height="1" fill="#808080"/><rect x="2" y="2" width="5" height="1" fill="url(#y1)"/><rect x="7" y="2" width="1" height="1" fill="#808080"/><rect x="0" y="3" width="1" height="1" fill="#808080"/><rect x="1" y="3" width="7" height="1" fill="url(#y1)"/><rect x="8" y="3" width="6" height="1" fill="#808080"/><rect x="0" y="4" width="1" height="1" fill="#808080"/><rect x="1" y="4" width="12" height="1" fill="#ffffff"/><rect x="13" y="4" width="1" height="1" fill="#808080"/><rect x="14" y="4" width="1" height="1" fill="#000000"/><rect x="0" y="5" width="1" height="1" fill="#808080"/><rect x="1" y="5" width="1" height="1" fill="#ffffff"/><rect x="2" y="5" width="11" height="1" fill="url(#y1)"/><rect x="13" y="5" width="1" height="1" fill="#808080"/><rect x="14" y="5" width="1" height="1" fill="#000000"/><rect x="0" y="6" width="1" height="1" fill="#808080"/><rect x="1" y="6" width="1" height="1" fill="#ffffff"/><rect x="2" y="6" width="11" height="1" fill="url(#y1)"/><rect x="13" y="6" width="1" height="1" fill="#808080"/><rect x="14" y="6" width="1" height="1" fill="#000000"/><rect x="0" y="7" width="1" height="1" fill="#808080"/><rect x="1" y="7" width="1" height="1" fill="#ffffff"/><rect x="2" y="7" width="11" height="1" fill="url(#y1)"/><rect x="13" y="7" width="1" height="1" fill="#808080"/><rect x="14" y="7" width="1" height="1" fill="#000000"/><rect x="0" y="8" width="1" height="1" fill="#808080"/><rect x="1" y="8" width="1" height="1" fill="#ffffff"/><rect x="2" y="8" width="11" height="1" fill="url(#y1)"/><rect x="13" y="8" width="1" height="1" fill="#808080"/><rect x="14" y="8" width="1" height="1" fill="#000000"/><rect x="0" y="9" width="1" height="1" fill="#808080"/><rect x="1" y="9" width="1" height="1" fill="#ffffff"/><rect x="2" y="9" width="11" height="1" fill="url(#y1)"/><rect x="13" y="9" width="1" height="1" fill="#808080"/><rect x="14" y="9" width="1" height="1" fill="#000000"/><rect x="0" y="10" width="1" height="1" fill="#808080"/><rect x="1" y="10" width="1" height="1" fill="#ffffff"/><rect x="2" y="10" width="11" height="1" fill="url(#y1)"/><rect x="13" y="10" width="1" height="1" fill="#808080"/><rect x="14" y="10" width="1" height="1" fill="#000000"/><rect x="0" y="11" width="1" height="1" fill="#808080"/><rect x="1" y="11" width="1" height="1" fill="#ffffff"/><rect x="2" y="11" width="11" height="1" fill="url(#y1)"/><rect x="13" y="11" width="1" height="1" fill="#808080"/><rect x="14" y="11" width="1" height="1" fill="#000000"/><rect x="0" y="12" width="14" height="1" fill="#808080"/><rect x="14" y="12" width="1" height="1" fill="#000000"/><rect x="1" y="13" width="14" height="1" fill="#000000"/></svg>
<span class="t" style="left:312px;top:131px;">aspnet_client</span>
<svg style="left:295px;top:147px" width="15" height="14" shape-rendering="crispEdges"><rect x="2" y="1" width="5" height="1" fill="#808080"/><rect x="1" y="2" width="1" height="1" fill="#808080"/><rect x="2" y="2" width="5" height="1" fill="url(#y0)"/><rect x="7" y="2" width="1" height="1" fill="#808080"/><rect x="0" y="3" width="1" height="1" fill="#808080"/><rect x="1" y="3" width="7" height="1" fill="url(#y0)"/><rect x="8" y="3" width="6" height="1" fill="#808080"/><rect x="0" y="4" width="1" height="1" fill="#808080"/><rect x="1" y="4" width="12" height="1" fill="#ffffff"/><rect x="13" y="4" width="1" height="1" fill="#808080"/><rect x="14" y="4" width="1" height="1" fill="#000000"/><rect x="0" y="5" width="1" height="1" fill="#808080"/><rect x="1" y="5" width="1" height="1" fill="#ffffff"/><rect x="2" y="5" width="11" height="1" fill="url(#y0)"/><rect x="13" y="5" width="1" height="1" fill="#808080"/><rect x="14" y="5" width="1" height="1" fill="#000000"/><rect x="0" y="6" width="1" height="1" fill="#808080"/><rect x="1" y="6" width="1" height="1" fill="#ffffff"/><rect x="2" y="6" width="11" height="1" fill="url(#y0)"/><rect x="13" y="6" width="1" height="1" fill="#808080"/><rect x="14" y="6" width="1" height="1" fill="#000000"/><rect x="0" y="7" width="1" height="1" fill="#808080"/><rect x="1" y="7" width="1" height="1" fill="#ffffff"/><rect x="2" y="7" width="11" height="1" fill="url(#y0)"/><rect x="13" y="7" width="1" height="1" fill="#808080"/><rect x="14" y="7" width="1" height="1" fill="#000000"/><rect x="0" y="8" width="1" height="1" fill="#808080"/><rect x="1" y="8" width="1" height="1" fill="#ffffff"/><rect x="2" y="8" width="11" height="1" fill="url(#y0)"/><rect x="13" y="8" width="1" height="1" fill="#808080"/><rect x="14" y="8" width="1" height="1" fill="#000000"/><rect x="0" y="9" width="1" height="1" fill="#808080"/><rect x="1" y="9" width="1" height="1" fill="#ffffff"/><rect x="2" y="9" width="11" height="1" fill="url(#y0)"/><rect x="13" y="9" width="1" height="1" fill="#808080"/><rect x="14" y="9" width="1" height="1" fill="#000000"/><rect x="0" y="10" width="1" height="1" fill="#808080"/><rect x="1" y="10" width="1" height="1" fill="#ffffff"/><rect x="2" y="10" width="11" height="1" fill="url(#y0)"/><rect x="13" y="10" width="1" height="1" fill="#808080"/><rect x="14" y="10" width="1" height="1" fill="#000000"/><rect x="0" y="11" width="1" height="1" fill="#808080"/><rect x="1" y="11" width="1" height="1" fill="#ffffff"/><rect x="2" y="11" width="11" height="1" fill="url(#y0)"/><rect x="13" y="11" width="1" height="1" fill="#808080"/><rect x="14" y="11" width="1" height="1" fill="#000000"/><rect x="0" y="12" width="14" height="1" fill="#808080"/><rect x="14" y="12" width="1" height="1" fill="#000000"/><rect x="1" y="13" width="14" height="1" fill="#000000"/></svg>
<span class="t" style="left:312px;top:148px;">bin</span>
<svg style="left:295px;top:164px" width="15" height="14" shape-rendering="crispEdges"><rect x="2" y="1" width="5" height="1" fill="#808080"/><rect x="1" y="2" width="1" height="1" fill="#808080"/><rect x="2" y="2" width="5" height="1" fill="url(#y1)"/><rect x="7" y="2" width="1" height="1" fill="#808080"/><rect x="0" y="3" width="1" height="1" fill="#808080"/><rect x="1" y="3" width="7" height="1" fill="url(#y1)"/><rect x="8" y="3" width="6" height="1" fill="#808080"/><rect x="0" y="4" width="1" height="1" fill="#808080"/><rect x="1" y="4" width="12" height="1" fill="#ffffff"/><rect x="13" y="4" width="1" height="1" fill="#808080"/><rect x="14" y="4" width="1" height="1" fill="#000000"/><rect x="0" y="5" width="1" height="1" fill="#808080"/><rect x="1" y="5" width="1" height="1" fill="#ffffff"/><rect x="2" y="5" width="11" height="1" fill="url(#y1)"/><rect x="13" y="5" width="1" height="1" fill="#808080"/><rect x="14" y="5" width="1" height="1" fill="#000000"/><rect x="0" y="6" width="1" height="1" fill="#808080"/><rect x="1" y="6" width="1" height="1" fill="#ffffff"/><rect x="2" y="6" width="11" height="1" fill="url(#y1)"/><rect x="13" y="6" width="1" height="1" fill="#808080"/><rect x="14" y="6" width="1" height="1" fill="#000000"/><rect x="0" y="7" width="1" height="1" fill="#808080"/><rect x="1" y="7" width="1" height="1" fill="#ffffff"/><rect x="2" y="7" width="11" height="1" fill="url(#y1)"/><rect x="13" y="7" width="1" height="1" fill="#808080"/><rect x="14" y="7" width="1" height="1" fill="#000000"/><rect x="0" y="8" width="1" height="1" fill="#808080"/><rect x="1" y="8" width="1" height="1" fill="#ffffff"/><rect x="2" y="8" width="11" height="1" fill="url(#y1)"/><rect x="13" y="8" width="1" height="1" fill="#808080"/><rect x="14" y="8" width="1" height="1" fill="#000000"/><rect x="0" y="9" width="1" height="1" fill="#808080"/><rect x="1" y="9" width="1" height="1" fill="#ffffff"/><rect x="2" y="9" width="11" height="1" fill="url(#y1)"/><rect x="13" y="9" width="1" height="1" fill="#808080"/><rect x="14" y="9" width="1" height="1" fill="#000000"/><rect x="0" y="10" width="1" height="1" fill="#808080"/><rect x="1" y="10" width="1" height="1" fill="#ffffff"/><rect x="2" y="10" width="11" height="1" fill="url(#y1)"/><rect x="13" y="10" width="1" height="1" fill="#808080"/><rect x="14" y="10" width="1" height="1" fill="#000000"/><rect x="0" y="11" width="1" height="1" fill="#808080"/><rect x="1" y="11" width="1" height="1" fill="#ffffff"/><rect x="2" y="11" width="11" height="1" fill="url(#y1)"/><rect x="13" y="11" width="1" height="1" fill="#808080"/><rect x="14" y="11" width="1" height="1" fill="#000000"/><rect x="0" y="12" width="14" height="1" fill="#808080"/><rect x="14" y="12" width="1" height="1" fill="#000000"/><rect x="1" y="13" width="14" height="1" fill="#000000"/></svg>
<span class="t" style="left:312px;top:165px;">cache</span>
<svg style="left:295px;top:181px" width="15" height="14" shape-rendering="crispEdges"><rect x="2" y="1" width="5" height="1" fill="#808080"/><rect x="1" y="2" width="1" height="1" fill="#808080"/><rect x="2" y="2" width="5" height="1" fill="url(#y0)"/><rect x="7" y="2" width="1" height="1" fill="#808080"/><rect x="0" y="3" width="1" height="1" fill="#808080"/><rect x="1" y="3" width="7" height="1" fill="url(#y0)"/><rect x="8" y="3" width="6" height="1" fill="#808080"/><rect x="0" y="4" width="1" height="1" fill="#808080"/><rect x="1" y="4" width="12" height="1" fill="#ffffff"/><rect x="13" y="4" width="1" height="1" fill="#808080"/><rect x="14" y="4" width="1" height="1" fill="#000000"/><rect x="0" y="5" width="1" height="1" fill="#808080"/><rect x="1" y="5" width="1" height="1" fill="#ffffff"/><rect x="2" y="5" width="11" height="1" fill="url(#y0)"/><rect x="13" y="5" width="1" height="1" fill="#808080"/><rect x="14" y="5" width="1" height="1" fill="#000000"/><rect x="0" y="6" width="1" height="1" fill="#808080"/><rect x="1" y="6" width="1" height="1" fill="#ffffff"/><rect x="2" y="6" width="11" height="1" fill="url(#y0)"/><rect x="13" y="6" width="1" height="1" fill="#808080"/><rect x="14" y="6" width="1" height="1" fill="#000000"/><rect x="0" y="7" width="1" height="1" fill="#808080"/><rect x="1" y="7" width="1" height="1" fill="#ffffff"/><rect x="2" y="7" width="11" height="1" fill="url(#y0)"/><rect x="13" y="7" width="1" height="1" fill="#808080"/><rect x="14" y="7" width="1" height="1" fill="#000000"/><rect x="0" y="8" width="1" height="1" fill="#808080"/><rect x="1" y="8" width="1" height="1" fill="#ffffff"/><rect x="2" y="8" width="11" height="1" fill="url(#y0)"/><rect x="13" y="8" width="1" height="1" fill="#808080"/><rect x="14" y="8" width="1" height="1" fill="#000000"/><rect x="0" y="9" width="1" height="1" fill="#808080"/><rect x="1" y="9" width="1" height="1" fill="#ffffff"/><rect x="2" y="9" width="11" height="1" fill="url(#y0)"/><rect x="13" y="9" width="1" height="1" fill="#808080"/><rect x="14" y="9" width="1" height="1" fill="#000000"/><rect x="0" y="10" width="1" height="1" fill="#808080"/><rect x="1" y="10" width="1" height="1" fill="#ffffff"/><rect x="2" y="10" width="11" height="1" fill="url(#y0)"/><rect x="13" y="10" width="1" height="1" fill="#808080"/><rect x="14" y="10" width="1" height="1" fill="#000000"/><rect x="0" y="11" width="1" height="1" fill="#808080"/><rect x="1" y="11" width="1" height="1" fill="#ffffff"/><rect x="2" y="11" width="11" height="1" fill="url(#y0)"/><rect x="13" y="11" width="1" height="1" fill="#808080"/><rect x="14" y="11" width="1" height="1" fill="#000000"/><rect x="0" y="12" width="14" height="1" fill="#808080"/><rect x="14" y="12" width="1" height="1" fill="#000000"/><rect x="1" y="13" width="14" height="1" fill="#000000"/></svg>
<span class="t" style="left:312px;top:182px;">config</span>
<svg style="left:295px;top:198px" width="15" height="14" shape-rendering="crispEdges"><rect x="2" y="1" width="5" height="1" fill="#808080"/><rect x="1" y="2" width="1" height="1" fill="#808080"/><rect x="2" y="2" width="5" height="1" fill="url(#y1)"/><rect x="7" y="2" width="1" height="1" fill="#808080"/><rect x="0" y="3" width="1" height="1" fill="#808080"/><rect x="1" y="3" width="7" height="1" fill="url(#y1)"/><rect x="8" y="3" width="6" height="1" fill="#808080"/><rect x="0" y="4" width="1" height="1" fill="#808080"/><rect x="1" y="4" width="12" height="1" fill="#ffffff"/><rect x="13" y="4" width="1" height="1" fill="#808080"/><rect x="14" y="4" width="1" height="1" fill="#000000"/><rect x="0" y="5" width="1" height="1" fill="#808080"/><rect x="1" y="5" width="1" height="1" fill="#ffffff"/><rect x="2" y="5" width="11" height="1" fill="url(#y1)"/><rect x="13" y="5" width="1" height="1" fill="#808080"/><rect x="14" y="5" width="1" height="1" fill="#000000"/><rect x="0" y="6" width="1" height="1" fill="#808080"/><rect x="1" y="6" width="1" height="1" fill="#ffffff"/><rect x="2" y="6" width="11" height="1" fill="url(#y1)"/><rect x="13" y="6" width="1" height="1" fill="#808080"/><rect x="14" y="6" width="1" height="1" fill="#000000"/><rect x="0" y="7" width="1" height="1" fill="#808080"/><rect x="1" y="7" width="1" height="1" fill="#ffffff"/><rect x="2" y="7" width="11" height="1" fill="url(#y1)"/><rect x="13" y="7" width="1" height="1" fill="#808080"/><rect x="14" y="7" width="1" height="1" fill="#000000"/><rect x="0" y="8" width="1" height="1" fill="#808080"/><rect x="1" y="8" width="1" height="1" fill="#ffffff"/><rect x="2" y="8" width="11" height="1" fill="url(#y1)"/><rect x="13" y="8" width="1" height="1" fill="#808080"/><rect x="14" y="8" width="1" height="1" fill="#000000"/><rect x="0" y="9" width="1" height="1" fill="#808080"/><rect x="1" y="9" width="1" height="1" fill="#ffffff"/><rect x="2" y="9" width="11" height="1" fill="url(#y1)"/><rect x="13" y="9" width="1" height="1" fill="#808080"/><rect x="14" y="9" width="1" height="1" fill="#000000"/><rect x="0" y="10" width="1" height="1" fill="#808080"/><rect x="1" y="10" width="1" height="1" fill="#ffffff"/><rect x="2" y="10" width="11" height="1" fill="url(#y1)"/><rect x="13" y="10" width="1" height="1" fill="#808080"/><rect x="14" y="10" width="1" height="1" fill="#000000"/><rect x="0" y="11" width="1" height="1" fill="#808080"/><rect x="1" y="11" width="1" height="1" fill="#ffffff"/><rect x="2" y="11" width="11" height="1" fill="url(#y1)"/><rect x="13" y="11" width="1" height="1" fill="#808080"/><rect x="14" y="11" width="1" height="1" fill="#000000"/><rect x="0" y="12" width="14" height="1" fill="#808080"/><rect x="14" y="12" width="1" height="1" fill="#000000"/><rect x="1" y="13" width="14" height="1" fill="#000000"/></svg>
<span class="t" style="left:312px;top:199px;">css</span>
<svg style="left:295px;top:215px" width="15" height="14" shape-rendering="crispEdges"><rect x="2" y="1" width="5" height="1" fill="#808080"/><rect x="1" y="2" width="1" height="1" fill="#808080"/><rect x="2" y="2" width="5" height="1" fill="url(#y0)"/><rect x="7" y="2" width="1" height="1" fill="#808080"/><rect x="0" y="3" width="1" height="1" fill="#808080"/><rect x="1" y="3" width="7" height="1" fill="url(#y0)"/><rect x="8" y="3" width="6" height="1" fill="#808080"/><rect x="0" y="4" width="1" height="1" fill="#808080"/><rect x="1" y="4" width="12" height="1" fill="#ffffff"/><rect x="13" y="4" width="1" height="1" fill="#808080"/><rect x="14" y="4" width="1" height="1" fill="#000000"/><rect x="0" y="5" width="1" height="1" fill="#808080"/><rect x="1" y="5" width="1" height="1" fill="#ffffff"/><rect x="2" y="5" width="11" height="1" fill="url(#y0)"/><rect x="13" y="5" width="1" height="1" fill="#808080"/><rect x="14" y="5" width="1" height="1" fill="#000000"/><rect x="0" y="6" width="1" height="1" fill="#808080"/><rect x="1" y="6" width="1" height="1" fill="#ffffff"/><rect x="2" y="6" width="11" height="1" fill="url(#y0)"/><rect x="13" y="6" width="1" height="1" fill="#808080"/><rect x="14" y="6" width="1" height="1" fill="#000000"/><rect x="0" y="7" width="1" height="1" fill="#808080"/><rect x="1" y="7" width="1" height="1" fill="#ffffff"/><rect x="2" y="7" width="11" height="1" fill="url(#y0)"/><rect x="13" y="7" width="1" height="1" fill="#808080"/><rect x="14" y="7" width="1" height="1" fill="#000000"/><rect x="0" y="8" width="1" height="1" fill="#808080"/><rect x="1" y="8" width="1" height="1" fill="#ffffff"/><rect x="2" y="8" width="11" height="1" fill="url(#y0)"/><rect x="13" y="8" width="1" height="1" fill="#808080"/><rect x="14" y="8" width="1" height="1" fill="#000000"/><rect x="0" y="9" width="1" height="1" fill="#808080"/><rect x="1" y="9" width="1" height="1" fill="#ffffff"/><rect x="2" y="9" width="11" height="1" fill="url(#y0)"/><rect x="13" y="9" width="1" height="1" fill="#808080"/><rect x="14" y="9" width="1" height="1" fill="#000000"/><rect x="0" y="10" width="1" height="1" fill="#808080"/><rect x="1" y="10" width="1" height="1" fill="#ffffff"/><rect x="2" y="10" width="11" height="1" fill="url(#y0)"/><rect x="13" y="10" width="1" height="1" fill="#808080"/><rect x="14" y="10" width="1" height="1" fill="#000000"/><rect x="0" y="11" width="1" height="1" fill="#808080"/><rect x="1" y="11" width="1" height="1" fill="#ffffff"/><rect x="2" y="11" width="11" height="1" fill="url(#y0)"/><rect x="13" y="11" width="1" height="1" fill="#808080"/><rect x="14" y="11" width="1" height="1" fill="#000000"/><rect x="0" y="12" width="14" height="1" fill="#808080"/><rect x="14" y="12" width="1" height="1" fill="#000000"/><rect x="1" y="13" width="14" height="1" fill="#000000"/></svg>
<span class="t" style="left:312px;top:216px;">db</span>
<svg style="left:295px;top:232px" width="15" height="14" shape-rendering="crispEdges"><rect x="2" y="1" width="5" height="1" fill="#808080"/><rect x="1" y="2" width="1" height="1" fill="#808080"/><rect x="2" y="2" width="5" height="1" fill="url(#y1)"/><rect x="7" y="2" width="1" height="1" fill="#808080"/><rect x="0" y="3" width="1" height="1" fill="#808080"/><rect x="1" y="3" width="7" height="1" fill="url(#y1)"/><rect x="8" y="3" width="6" height="1" fill="#808080"/><rect x="0" y="4" width="1" height="1" fill="#808080"/><rect x="1" y="4" width="12" height="1" fill="#ffffff"/><rect x="13" y="4" width="1" height="1" fill="#808080"/><rect x="14" y="4" width="1" height="1" fill="#000000"/><rect x="0" y="5" width="1" height="1" fill="#808080"/><rect x="1" y="5" width="1" height="1" fill="#ffffff"/><rect x="2" y="5" width="11" height="1" fill="url(#y1)"/><rect x="13" y="5" width="1" height="1" fill="#808080"/><rect x="14" y="5" width="1" height="1" fill="#000000"/><rect x="0" y="6" width="1" height="1" fill="#808080"/><rect x="1" y="6" width="1" height="1" fill="#ffffff"/><rect x="2" y="6" width="11" height="1" fill="url(#y1)"/><rect x="13" y="6" width="1" height="1" fill="#808080"/><rect x="14" y="6" width="1" height="1" fill="#000000"/><rect x="0" y="7" width="1" height="1" fill="#808080"/><rect x="1" y="7" width="1" height="1" fill="#ffffff"/><rect x="2" y="7" width="11" height="1" fill="url(#y1)"/><rect x="13" y="7" width="1" height="1" fill="#808080"/><rect x="14" y="7" width="1" height="1" fill="#000000"/><rect x="0" y="8" width="1" height="1" fill="#808080"/><rect x="1" y="8" width="1" height="1" fill="#ffffff"/><rect x="2" y="8" width="11" height="1" fill="url(#y1)"/><rect x="13" y="8" width="1" height="1" fill="#808080"/><rect x="14" y="8" width="1" height="1" fill="#000000"/><rect x="0" y="9" width="1" height="1" fill="#808080"/><rect x="1" y="9" width="1" height="1" fill="#ffffff"/><rect x="2" y="9" width="11" height="1" fill="url(#y1)"/><rect x="13" y="9" width="1" height="1" fill="#808080"/><rect x="14" y="9" width="1" height="1" fill="#000000"/><rect x="0" y="10" width="1" height="1" fill="#808080"/><rect x="1" y="10" width="1" height="1" fill="#ffffff"/><rect x="2" y="10" width="11" height="1" fill="url(#y1)"/><rect x="13" y="10" width="1" height="1" fill="#808080"/><rect x="14" y="10" width="1" height="1" fill="#000000"/><rect x="0" y="11" width="1" height="1" fill="#808080"/><rect x="1" y="11" width="1" height="1" fill="#ffffff"/><rect x="2" y="11" width="11" height="1" fill="url(#y1)"/><rect x="13" y="11" width="1" height="1" fill="#808080"/><rect x="14" y="11" width="1" height="1" fill="#000000"/><rect x="0" y="12" width="14" height="1" fill="#808080"/><rect x="14" y="12" width="1" height="1" fill="#000000"/><rect x="1" y="13" width="14" height="1" fill="#000000"/></svg>
<span class="t" style="left:312px;top:233px;">docs</span>
<svg style="left:295px;top:249px" width="15" height="14" shape-rendering="crispEdges"><rect x="2" y="1" width="5" height="1" fill="#808080"/><rect x="1" y="2" width="1" height="1" fill="#808080"/><rect x="2" y="2" width="5" height="1" fill="url(#y0)"/><rect x="7" y="2" width="1" height="1" fill="#808080"/><rect x="0" y="3" width="1" height="1" fill="#808080"/><rect x="1" y="3" width="7" height="1" fill="url(#y0)"/><rect x="8" y="3" width="6" height="1" fill="#808080"/><rect x="0" y="4" width="1" height="1" fill="#808080"/><rect x="1" y="4" width="12" height="1" fill="#ffffff"/><rect x="13" y="4" width="1" height="1" fill="#808080"/><rect x="14" y="4" width="1" height="1" fill="#000000"/><rect x="0" y="5" width="1" height="1" fill="#808080"/><rect x="1" y="5" width="1" height="1" fill="#ffffff"/><rect x="2" y="5" width="11" height="1" fill="url(#y0)"/><rect x="13" y="5" width="1" height="1" fill="#808080"/><rect x="14" y="5" width="1" height="1" fill="#000000"/><rect x="0" y="6" width="1" height="1" fill="#808080"/><rect x="1" y="6" width="1" height="1" fill="#ffffff"/><rect x="2" y="6" width="11" height="1" fill="url(#y0)"/><rect x="13" y="6" width="1" height="1" fill="#808080"/><rect x="14" y="6" width="1" height="1" fill="#000000"/><rect x="0" y="7" width="1" height="1" fill="#808080"/><rect x="1" y="7" width="1" height="1" fill="#ffffff"/><rect x="2" y="7" width="11" height="1" fill="url(#y0)"/><rect x="13" y="7" width="1" height="1" fill="#808080"/><rect x="14" y="7" width="1" height="1" fill="#000000"/><rect x="0" y="8" width="1" height="1" fill="#808080"/><rect x="1" y="8" width="1" height="1" fill="#ffffff"/><rect x="2" y="8" width="11" height="1" fill="url(#y0)"/><rect x="13" y="8" width="1" height="1" fill="#808080"/><rect x="14" y="8" width="1" height="1" fill="#000000"/><rect x="0" y="9" width="1" height="1" fill="#808080"/><rect x="1" y="9" width="1" height="1" fill="#ffffff"/><rect x="2" y="9" width="11" height="1" fill="url(#y0)"/><rect x="13" y="9" width="1" height="1" fill="#808080"/><rect x="14" y="9" width="1" height="1" fill="#000000"/><rect x="0" y="10" width="1" height="1" fill="#808080"/><rect x="1" y="10" width="1" height="1" fill="#ffffff"/><rect x="2" y="10" width="11" height="1" fill="url(#y0)"/><rect x="13" y="10" width="1" height="1" fill="#808080"/><rect x="14" y="10" width="1" height="1" fill="#000000"/><rect x="0" y="11" width="1" height="1" fill="#808080"/><rect x="1" y="11" width="1" height="1" fill="#ffffff"/><rect x="2" y="11" width="11" height="1" fill="url(#y0)"/><rect x="13" y="11" width="1" height="1" fill="#808080"/><rect x="14" y="11" width="1" height="1" fill="#000000"/><rect x="0" y="12" width="14" height="1" fill="#808080"/><rect x="14" y="12" width="1" height="1" fill="#000000"/><rect x="1" y="13" width="14" height="1" fill="#000000"/></svg>
<span class="t" style="left:312px;top:250px;">graphics</span>
<svg style="left:295px;top:266px" width="15" height="14" shape-rendering="crispEdges"><rect x="2" y="1" width="5" height="1" fill="#808080"/><rect x="1" y="2" width="1" height="1" fill="#808080"/><rect x="2" y="2" width="5" height="1" fill="url(#y1)"/><rect x="7" y="2" width="1" height="1" fill="#808080"/><rect x="0" y="3" width="1" height="1" fill="#808080"/><rect x="1" y="3" width="7" height="1" fill="url(#y1)"/><rect x="8" y="3" width="6" height="1" fill="#808080"/><rect x="0" y="4" width="1" height="1" fill="#808080"/><rect x="1" y="4" width="12" height="1" fill="#ffffff"/><rect x="13" y="4" width="1" height="1" fill="#808080"/><rect x="14" y="4" width="1" height="1" fill="#000000"/><rect x="0" y="5" width="1" height="1" fill="#808080"/><rect x="1" y="5" width="1" height="1" fill="#ffffff"/><rect x="2" y="5" width="11" height="1" fill="url(#y1)"/><rect x="13" y="5" width="1" height="1" fill="#808080"/><rect x="14" y="5" width="1" height="1" fill="#000000"/><rect x="0" y="6" width="1" height="1" fill="#808080"/><rect x="1" y="6" width="1" height="1" fill="#ffffff"/><rect x="2" y="6" width="11" height="1" fill="url(#y1)"/><rect x="13" y="6" width="1" height="1" fill="#808080"/><rect x="14" y="6" width="1" height="1" fill="#000000"/><rect x="0" y="7" width="1" height="1" fill="#808080"/><rect x="1" y="7" width="1" height="1" fill="#ffffff"/><rect x="2" y="7" width="11" height="1" fill="url(#y1)"/><rect x="13" y="7" width="1" height="1" fill="#808080"/><rect x="14" y="7" width="1" height="1" fill="#000000"/><rect x="0" y="8" width="1" height="1" fill="#808080"/><rect x="1" y="8" width="1" height="1" fill="#ffffff"/><rect x="2" y="8" width="11" height="1" fill="url(#y1)"/><rect x="13" y="8" width="1" height="1" fill="#808080"/><rect x="14" y="8" width="1" height="1" fill="#000000"/><rect x="0" y="9" width="1" height="1" fill="#808080"/><rect x="1" y="9" width="1" height="1" fill="#ffffff"/><rect x="2" y="9" width="11" height="1" fill="url(#y1)"/><rect x="13" y="9" width="1" height="1" fill="#808080"/><rect x="14" y="9" width="1" height="1" fill="#000000"/><rect x="0" y="10" width="1" height="1" fill="#808080"/><rect x="1" y="10" width="1" height="1" fill="#ffffff"/><rect x="2" y="10" width="11" height="1" fill="url(#y1)"/><rect x="13" y="10" width="1" height="1" fill="#808080"/><rect x="14" y="10" width="1" height="1" fill="#000000"/><rect x="0" y="11" width="1" height="1" fill="#808080"/><rect x="1" y="11" width="1" height="1" fill="#ffffff"/><rect x="2" y="11" width="11" height="1" fill="url(#y1)"/><rect x="13" y="11" width="1" height="1" fill="#808080"/><rect x="14" y="11" width="1" height="1" fill="#000000"/><rect x="0" y="12" width="14" height="1" fill="#808080"/><rect x="14" y="12" width="1" height="1" fill="#000000"/><rect x="1" y="13" width="14" height="1" fill="#000000"/></svg>
<span class="t" style="left:312px;top:267px;">images</span>
<svg style="left:295px;top:283px" width="15" height="14" shape-rendering="crispEdges"><rect x="2" y="1" width="5" height="1" fill="#808080"/><rect x="1" y="2" width="1" height="1" fill="#808080"/><rect x="2" y="2" width="5" height="1" fill="url(#y0)"/><rect x="7" y="2" width="1" height="1" fill="#808080"/><rect x="0" y="3" width="1" height="1" fill="#808080"/><rect x="1" y="3" width="7" height="1" fill="url(#y0)"/><rect x="8" y="3" width="6" height="1" fill="#808080"/><rect x="0" y="4" width="1" height="1" fill="#808080"/><rect x="1" y="4" width="12" height="1" fill="#ffffff"/><rect x="13" y="4" width="1" height="1" fill="#808080"/><rect x="14" y="4" width="1" height="1" fill="#000000"/><rect x="0" y="5" width="1" height="1" fill="#808080"/><rect x="1" y="5" width="1" height="1" fill="#ffffff"/><rect x="2" y="5" width="11" height="1" fill="url(#y0)"/><rect x="13" y="5" width="1" height="1" fill="#808080"/><rect x="14" y="5" width="1" height="1" fill="#000000"/><rect x="0" y="6" width="1" height="1" fill="#808080"/><rect x="1" y="6" width="1" height="1" fill="#ffffff"/><rect x="2" y="6" width="11" height="1" fill="url(#y0)"/><rect x="13" y="6" width="1" height="1" fill="#808080"/><rect x="14" y="6" width="1" height="1" fill="#000000"/><rect x="0" y="7" width="1" height="1" fill="#808080"/><rect x="1" y="7" width="1" height="1" fill="#ffffff"/><rect x="2" y="7" width="11" height="1" fill="url(#y0)"/><rect x="13" y="7" width="1" height="1" fill="#808080"/><rect x="14" y="7" width="1" height="1" fill="#000000"/><rect x="0" y="8" width="1" height="1" fill="#808080"/><rect x="1" y="8" width="1" height="1" fill="#ffffff"/><rect x="2" y="8" width="11" height="1" fill="url(#y0)"/><rect x="13" y="8" width="1" height="1" fill="#808080"/><rect x="14" y="8" width="1" height="1" fill="#000000"/><rect x="0" y="9" width="1" height="1" fill="#808080"/><rect x="1" y="9" width="1" height="1" fill="#ffffff"/><rect x="2" y="9" width="11" height="1" fill="url(#y0)"/><rect x="13" y="9" width="1" height="1" fill="#808080"/><rect x="14" y="9" width="1" height="1" fill="#000000"/><rect x="0" y="10" width="1" height="1" fill="#808080"/><rect x="1" y="10" width="1" height="1" fill="#ffffff"/><rect x="2" y="10" width="11" height="1" fill="url(#y0)"/><rect x="13" y="10" width="1" height="1" fill="#808080"/><rect x="14" y="10" width="1" height="1" fill="#000000"/><rect x="0" y="11" width="1" height="1" fill="#808080"/><rect x="1" y="11" width="1" height="1" fill="#ffffff"/><rect x="2" y="11" width="11" height="1" fill="url(#y0)"/><rect x="13" y="11" width="1" height="1" fill="#808080"/><rect x="14" y="11" width="1" height="1" fill="#000000"/><rect x="0" y="12" width="14" height="1" fill="#808080"/><rect x="14" y="12" width="1" height="1" fill="#000000"/><rect x="1" y="13" width="14" height="1" fill="#000000"/></svg>
<span class="t" style="left:312px;top:284px;">inc</span>
<svg style="left:295px;top:300px" width="15" height="14" shape-rendering="crispEdges"><rect x="2" y="1" width="5" height="1" fill="#808080"/><rect x="1" y="2" width="1" height="1" fill="#808080"/><rect x="2" y="2" width="5" height="1" fill="url(#y1)"/><rect x="7" y="2" width="1" height="1" fill="#808080"/><rect x="0" y="3" width="1" height="1" fill="#808080"/><rect x="1" y="3" width="7" height="1" fill="url(#y1)"/><rect x="8" y="3" width="6" height="1" fill="#808080"/><rect x="0" y="4" width="1" height="1" fill="#808080"/><rect x="1" y="4" width="12" height="1" fill="#ffffff"/><rect x="13" y="4" width="1" height="1" fill="#808080"/><rect x="14" y="4" width="1" height="1" fill="#000000"/><rect x="0" y="5" width="1" height="1" fill="#808080"/><rect x="1" y="5" width="1" height="1" fill="#ffffff"/><rect x="2" y="5" width="11" height="1" fill="url(#y1)"/><rect x="13" y="5" width="1" height="1" fill="#808080"/><rect x="14" y="5" width="1" height="1" fill="#000000"/><rect x="0" y="6" width="1" height="1" fill="#808080"/><rect x="1" y="6" width="1" height="1" fill="#ffffff"/><rect x="2" y="6" width="11" height="1" fill="url(#y1)"/><rect x="13" y="6" width="1" height="1" fill="#808080"/><rect x="14" y="6" width="1" height="1" fill="#000000"/><rect x="0" y="7" width="1" height="1" fill="#808080"/><rect x="1" y="7" width="1" height="1" fill="#ffffff"/><rect x="2" y="7" width="11" height="1" fill="url(#y1)"/><rect x="13" y="7" width="1" height="1" fill="#808080"/><rect x="14" y="7" width="1" height="1" fill="#000000"/><rect x="0" y="8" width="1" height="1" fill="#808080"/><rect x="1" y="8" width="1" height="1" fill="#ffffff"/><rect x="2" y="8" width="11" height="1" fill="url(#y1)"/><rect x="13" y="8" width="1" height="1" fill="#808080"/><rect x="14" y="8" width="1" height="1" fill="#000000"/><rect x="0" y="9" width="1" height="1" fill="#808080"/><rect x="1" y="9" width="1" height="1" fill="#ffffff"/><rect x="2" y="9" width="11" height="1" fill="url(#y1)"/><rect x="13" y="9" width="1" height="1" fill="#808080"/><rect x="14" y="9" width="1" height="1" fill="#000000"/><rect x="0" y="10" width="1" height="1" fill="#808080"/><rect x="1" y="10" width="1" height="1" fill="#ffffff"/><rect x="2" y="10" width="11" height="1" fill="url(#y1)"/><rect x="13" y="10" width="1" height="1" fill="#808080"/><rect x="14" y="10" width="1" height="1" fill="#000000"/><rect x="0" y="11" width="1" height="1" fill="#808080"/><rect x="1" y="11" width="1" height="1" fill="#ffffff"/><rect x="2" y="11" width="11" height="1" fill="url(#y1)"/><rect x="13" y="11" width="1" height="1" fill="#808080"/><rect x="14" y="11" width="1" height="1" fill="#000000"/><rect x="0" y="12" width="14" height="1" fill="#808080"/><rect x="14" y="12" width="1" height="1" fill="#000000"/><rect x="1" y="13" width="14" height="1" fill="#000000"/></svg>
<span class="t" style="left:312px;top:301px;">js</span>
<svg style="left:295px;top:317px" width="15" height="14" shape-rendering="crispEdges"><rect x="2" y="1" width="5" height="1" fill="#808080"/><rect x="1" y="2" width="1" height="1" fill="#808080"/><rect x="2" y="2" width="5" height="1" fill="url(#y0)"/><rect x="7" y="2" width="1" height="1" fill="#808080"/><rect x="0" y="3" width="1" height="1" fill="#808080"/><rect x="1" y="3" width="7" height="1" fill="url(#y0)"/><rect x="8" y="3" width="6" height="1" fill="#808080"/><rect x="0" y="4" width="1" height="1" fill="#808080"/><rect x="1" y="4" width="12" height="1" fill="#ffffff"/><rect x="13" y="4" width="1" height="1" fill="#808080"/><rect x="14" y="4" width="1" height="1" fill="#000000"/><rect x="0" y="5" width="1" height="1" fill="#808080"/><rect x="1" y="5" width="1" height="1" fill="#ffffff"/><rect x="2" y="5" width="11" height="1" fill="url(#y0)"/><rect x="13" y="5" width="1" height="1" fill="#808080"/><rect x="14" y="5" width="1" height="1" fill="#000000"/><rect x="0" y="6" width="1" height="1" fill="#808080"/><rect x="1" y="6" width="1" height="1" fill="#ffffff"/><rect x="2" y="6" width="11" height="1" fill="url(#y0)"/><rect x="13" y="6" width="1" height="1" fill="#808080"/><rect x="14" y="6" width="1" height="1" fill="#000000"/><rect x="0" y="7" width="1" height="1" fill="#808080"/><rect x="1" y="7" width="1" height="1" fill="#ffffff"/><rect x="2" y="7" width="11" height="1" fill="url(#y0)"/><rect x="13" y="7" width="1" height="1" fill="#808080"/><rect x="14" y="7" width="1" height="1" fill="#000000"/><rect x="0" y="8" width="1" height="1" fill="#808080"/><rect x="1" y="8" width="1" height="1" fill="#ffffff"/><rect x="2" y="8" width="11" height="1" fill="url(#y0)"/><rect x="13" y="8" width="1" height="1" fill="#808080"/><rect x="14" y="8" width="1" height="1" fill="#000000"/><rect x="0" y="9" width="1" height="1" fill="#808080"/><rect x="1" y="9" width="1" height="1" fill="#ffffff"/><rect x="2" y="9" width="11" height="1" fill="url(#y0)"/><rect x="13" y="9" width="1" height="1" fill="#808080"/><rect x="14" y="9" width="1" height="1" fill="#000000"/><rect x="0" y="10" width="1" height="1" fill="#808080"/><rect x="1" y="10" width="1" height="1" fill="#ffffff"/><rect x="2" y="10" width="11" height="1" fill="url(#y0)"/><rect x="13" y="10" width="1" height="1" fill="#808080"/><rect x="14" y="10" width="1" height="1" fill="#000000"/><rect x="0" y="11" width="1" height="1" fill="#808080"/><rect x="1" y="11" width="1" height="1" fill="#ffffff"/><rect x="2" y="11" width="11" height="1" fill="url(#y0)"/><rect x="13" y="11" width="1" height="1" fill="#808080"/><rect x="14" y="11" width="1" height="1" fill="#000000"/><rect x="0" y="12" width="14" height="1" fill="#808080"/><rect x="14" y="12" width="1" height="1" fill="#000000"/><rect x="1" y="13" width="14" height="1" fill="#000000"/></svg>
<span class="t" style="left:312px;top:318px;">lan</span>
<svg style="left:295px;top:334px" width="15" height="14" shape-rendering="crispEdges"><rect x="2" y="1" width="5" height="1" fill="#808080"/><rect x="1" y="2" width="1" height="1" fill="#808080"/><rect x="2" y="2" width="5" height="1" fill="url(#y1)"/><rect x="7" y="2" width="1" height="1" fill="#808080"/><rect x="0" y="3" width="1" height="1" fill="#808080"/><rect x="1" y="3" width="7" height="1" fill="url(#y1)"/><rect x="8" y="3" width="6" height="1" fill="#808080"/><rect x="0" y="4" width="1" height="1" fill="#808080"/><rect x="1" y="4" width="12" height="1" fill="#ffffff"/><rect x="13" y="4" width="1" height="1" fill="#808080"/><rect x="14" y="4" width="1" height="1" fill="#000000"/><rect x="0" y="5" width="1" height="1" fill="#808080"/><rect x="1" y="5" width="1" height="1" fill="#ffffff"/><rect x="2" y="5" width="11" height="1" fill="url(#y1)"/><rect x="13" y="5" width="1" height="1" fill="#808080"/><rect x="14" y="5" width="1" height="1" fill="#000000"/><rect x="0" y="6" width="1" height="1" fill="#808080"/><rect x="1" y="6" width="1" height="1" fill="#ffffff"/><rect x="2" y="6" width="11" height="1" fill="url(#y1)"/><rect x="13" y="6" width="1" height="1" fill="#808080"/><rect x="14" y="6" width="1" height="1" fill="#000000"/><rect x="0" y="7" width="1" height="1" fill="#808080"/><rect x="1" y="7" width="1" height="1" fill="#ffffff"/><rect x="2" y="7" width="11" height="1" fill="url(#y1)"/><rect x="13" y="7" width="1" height="1" fill="#808080"/><rect x="14" y="7" width="1" height="1" fill="#000000"/><rect x="0" y="8" width="1" height="1" fill="#808080"/><rect x="1" y="8" width="1" height="1" fill="#ffffff"/><rect x="2" y="8" width="11" height="1" fill="url(#y1)"/><rect x="13" y="8" width="1" height="1" fill="#808080"/><rect x="14" y="8" width="1" height="1" fill="#000000"/><rect x="0" y="9" width="1" height="1" fill="#808080"/><rect x="1" y="9" width="1" height="1" fill="#ffffff"/><rect x="2" y="9" width="11" height="1" fill="url(#y1)"/><rect x="13" y="9" width="1" height="1" fill="#808080"/><rect x="14" y="9" width="1" height="1" fill="#000000"/><rect x="0" y="10" width="1" height="1" fill="#808080"/><rect x="1" y="10" width="1" height="1" fill="#ffffff"/><rect x="2" y="10" width="11" height="1" fill="url(#y1)"/><rect x="13" y="10" width="1" height="1" fill="#808080"/><rect x="14" y="10" width="1" height="1" fill="#000000"/><rect x="0" y="11" width="1" height="1" fill="#808080"/><rect x="1" y="11" width="1" height="1" fill="#ffffff"/><rect x="2" y="11" width="11" height="1" fill="url(#y1)"/><rect x="13" y="11" width="1" height="1" fill="#808080"/><rect x="14" y="11" width="1" height="1" fill="#000000"/><rect x="0" y="12" width="14" height="1" fill="#808080"/><rect x="14" y="12" width="1" height="1" fill="#000000"/><rect x="1" y="13" width="14" height="1" fill="#000000"/></svg>
<span class="t" style="left:312px;top:335px;">tests</span>
<svg style="left:294px;top:351px" width="16" height="16" shape-rendering="crispEdges"><rect x="2" y="0" width="10" height="1" fill="#808080"/><rect x="2" y="1" width="1" height="1" fill="#808080"/><rect x="3" y="1" width="9" height="1" fill="url(#w21)"/><rect x="12" y="1" width="1" height="1" fill="#c0c0c0"/><rect x="13" y="1" width="1" height="1" fill="#ffffff"/><rect x="2" y="2" width="1" height="1" fill="#808080"/><rect x="3" y="2" width="8" height="1" fill="url(#w21)"/><rect x="11" y="2" width="1" height="1" fill="#c0c0c0"/><rect x="12" y="2" width="1" height="1" fill="#ffffff"/><rect x="13" y="2" width="1" height="1" fill="#c0c0c0"/><rect x="14" y="2" width="1" height="1" fill="#808080"/><rect x="2" y="3" width="1" height="1" fill="#808080"/><rect x="3" y="3" width="8" height="1" fill="url(#w21)"/><rect x="11" y="3" width="4" height="1" fill="#000000"/><rect x="2" y="4" width="1" height="1" fill="#808080"/><rect x="3" y="4" width="4" height="1" fill="url(#w21)"/><rect x="7" y="4" width="1" height="1" fill="#008080"/><rect x="8" y="4" width="2" height="1" fill="#008000"/><rect x="10" y="4" width="4" height="1" fill="url(#w21)"/><rect x="14" y="4" width="1" height="1" fill="#000000"/><rect x="2" y="5" width="1" height="1" fill="#808080"/><rect x="3" y="5" width="3" height="1" fill="url(#w21)"/><rect x="6" y="5" width="1" height="1" fill="#008080"/><rect x="7" y="5" width="1" height="1" fill="#ffffff"/><rect x="8" y="5" width="1" height="1" fill="#008080"/><rect x="9" y="5" width="2" height="1" fill="#008000"/><rect x="11" y="5" width="3" height="1" fill="url(#w21)"/><rect x="14" y="5" width="1" height="1" fill="#000000"/><rect x="2" y="6" width="1" height="1" fill="#808080"/><rect x="3" y="6" width="2" height="1" fill="url(#w21)"/><rect x="5" y="6" width="1" height="1" fill="#008080"/><rect x="6" y="6" width="1" height="1" fill="#ffffff"/><rect x="7" y="6" width="1" height="1" fill="#008080"/><rect x="8" y="6" width="1" height="1" fill="#0000ff"/><rect x="9" y="6" width="1" height="1" fill="#008000"/><rect x="10" y="6" width="1" height="1" fill="#0000ff"/><rect x="11" y="6" width="3" height="1" fill="url(#w21)"/><rect x="14" y="6" width="1" height="1" fill="#000000"/><rect x="2" y="7" width="1" height="1" fill="#808080"/><rect x="3" y="7" width="2" height="1" fill="url(#w21)"/><rect x="5" y="7" width="1" height="1" fill="#008080"/><rect x="6" y="7" width="2" height="1" fill="#ffffff"/><rect x="8" y="7" width="2" height="1" fill="#008000"/><rect x="10" y="7" width="2" height="1" fill="#0000ff"/><rect x="12" y="7" width="2" height="1" fill="url(#w21)"/><rect x="14" y="7" width="1" height="1" fill="#000000"/><rect x="2" y="8" width="1" height="1" fill="#808080"/><rect x="3" y="8" width="2" height="1" fill="url(#w21)"/><rect x="5" y="8" width="1" height="1" fill="#008080"/><rect x="6" y="8" width="1" height="1" fill="#ffffff"/><rect x="7" y="8" width="1" height="1" fill="#008080"/><rect x="8" y="8" width="1" height="1" fill="#008000"/><rect x="9" y="8" width="3" height="1" fill="#0000ff"/><rect x="12" y="8" width="2" height="1" fill="url(#w21)"/><rect x="14" y="8" width="1" height="1" fill="#000000"/><rect x="2" y="9" width="1" height="1" fill="#808080"/><rect x="3" y="9" width="2" height="1" fill="url(#w21)"/><rect x="5" y="9" width="1" height="1" fill="#008080"/><rect x="6" y="9" width="2" height="1" fill="#0000ff"/><rect x="8" y="9" width="1" height="1" fill="#008000"/><rect x="9" y="9" width="3" height="1" fill="#0000ff"/><rect x="12" y="9" width="2" height="1" fill="url(#w21)"/><rect x="14" y="9" width="1" height="1" fill="#000000"/><rect x="2" y="10" width="1" height="1" fill="#808080"/><rect x="3" y="10" width="3" height="1" fill="url(#w21)"/><rect x="6" y="10" width="4" height="1" fill="#0000ff"/><rect x="10" y="10" width="1" height="1" fill="#000080"/><rect x="11" y="10" width="3" height="1" fill="url(#w21)"/><rect x="14" y="10" width="1" height="1" fill="#000000"/><rect x="2" y="11" width="1" height="1" fill="#808080"/><rect x="3" y="11" width="4" height="1" fill="url(#w21)"/><rect x="7" y="11" width="3" height="1" fill="#000000"/><rect x="10" y="11" width="4" height="1" fill="url(#w21)"/><rect x="14" y="11" width="1" height="1" fill="#000000"/><rect x="2" y="12" width="1" height="1" fill="#808080"/><rect x="3" y="12" width="11" height="1" fill="url(#w21)"/><rect x="14" y="12" width="1" height="1" fill="#000000"/><rect x="2" y="13" width="1" height="1" fill="#808080"/><rect x="3" y="13" width="11" height="1" fill="url(#w21)"/><rect x="14" y="13" width="1" height="1" fill="#000000"/><rect x="2" y="14" width="1" height="1" fill="#808080"/><rect x="3" y="14" width="11" height="1" fill="url(#w21)"/><rect x="14" y="14" width="1" height="1" fill="#000000"/><rect x="2" y="15" width="13" height="1" fill="#000000"/></svg>
<span class="t" style="left:312px;top:352px;">.cvsignore</span>
<svg style="left:294px;top:368px" width="16" height="16" shape-rendering="crispEdges"><rect x="2" y="0" width="10" height="1" fill="#808080"/><rect x="2" y="1" width="1" height="1" fill="#808080"/><rect x="3" y="1" width="9" height="1" fill="url(#w20)"/><rect x="12" y="1" width="1" height="1" fill="#c0c0c0"/><rect x="13" y="1" width="1" height="1" fill="#ffffff"/><rect x="2" y="2" width="1" height="1" fill="#808080"/><rect x="3" y="2" width="8" height="1" fill="url(#w20)"/><rect x="11" y="2" width="1" height="1" fill="#c0c0c0"/><rect x="12" y="2" width="1" height="1" fill="#ffffff"/><rect x="13" y="2" width="1" height="1" fill="#c0c0c0"/><rect x="14" y="2" width="1" height="1" fill="#808080"/><rect x="2" y="3" width="1" height="1" fill="#808080"/><rect x="3" y="3" width="8" height="1" fill="url(#w20)"/><rect x="11" y="3" width="4" height="1" fill="#000000"/><rect x="2" y="4" width="1" height="1" fill="#808080"/><rect x="3" y="4" width="4" height="1" fill="url(#w20)"/><rect x="7" y="4" width="1" height="1" fill="#008080"/><rect x="8" y="4" width="2" height="1" fill="#008000"/><rect x="10" y="4" width="4" height="1" fill="url(#w20)"/><rect x="14" y="4" width="1" height="1" fill="#000000"/><rect x="2" y="5" width="1" height="1" fill="#808080"/><rect x="3" y="5" width="3" height="1" fill="url(#w20)"/><rect x="6" y="5" width="1" height="1" fill="#008080"/><rect x="7" y="5" width="1" height="1" fill="#ffffff"/><rect x="8" y="5" width="1" height="1" fill="#008080"/><rect x="9" y="5" width="2" height="1" fill="#008000"/><rect x="11" y="5" width="3" height="1" fill="url(#w20)"/><rect x="14" y="5" width="1" height="1" fill="#000000"/><rect x="2" y="6" width="1" height="1" fill="#808080"/><rect x="3" y="6" width="2" height="1" fill="url(#w20)"/><rect x="5" y="6" width="1" height="1" fill="#008080"/><rect x="6" y="6" width="1" height="1" fill="#ffffff"/><rect x="7" y="6" width="1" height="1" fill="#008080"/><rect x="8" y="6" width="1" height="1" fill="#0000ff"/><rect x="9" y="6" width="1" height="1" fill="#008000"/><rect x="10" y="6" width="1" height="1" fill="#0000ff"/><rect x="11" y="6" width="3" height="1" fill="url(#w20)"/><rect x="14" y="6" width="1" height="1" fill="#000000"/><rect x="2" y="7" width="1" height="1" fill="#808080"/><rect x="3" y="7" width="2" height="1" fill="url(#w20)"/><rect x="5" y="7" width="1" height="1" fill="#008080"/><rect x="6" y="7" width="2" height="1" fill="#ffffff"/><rect x="8" y="7" width="2" height="1" fill="#008000"/><rect x="10" y="7" width="2" height="1" fill="#0000ff"/><rect x="12" y="7" width="2" height="1" fill="url(#w20)"/><rect x="14" y="7" width="1" height="1" fill="#000000"/><rect x="2" y="8" width="1" height="1" fill="#808080"/><rect x="3" y="8" width="2" height="1" fill="url(#w20)"/><rect x="5" y="8" width="1" height="1" fill="#008080"/><rect x="6" y="8" width="1" height="1" fill="#ffffff"/><rect x="7" y="8" width="1" height="1" fill="#008080"/><rect x="8" y="8" width="1" height="1" fill="#008000"/><rect x="9" y="8" width="3" height="1" fill="#0000ff"/><rect x="12" y="8" width="2" height="1" fill="url(#w20)"/><rect x="14" y="8" width="1" height="1" fill="#000000"/><rect x="2" y="9" width="1" height="1" fill="#808080"/><rect x="3" y="9" width="2" height="1" fill="url(#w20)"/><rect x="5" y="9" width="1" height="1" fill="#008080"/><rect x="6" y="9" width="2" height="1" fill="#0000ff"/><rect x="8" y="9" width="1" height="1" fill="#008000"/><rect x="9" y="9" width="3" height="1" fill="#0000ff"/><rect x="12" y="9" width="2" height="1" fill="url(#w20)"/><rect x="14" y="9" width="1" height="1" fill="#000000"/><rect x="2" y="10" width="1" height="1" fill="#808080"/><rect x="3" y="10" width="3" height="1" fill="url(#w20)"/><rect x="6" y="10" width="4" height="1" fill="#0000ff"/><rect x="10" y="10" width="1" height="1" fill="#000080"/><rect x="11" y="10" width="3" height="1" fill="url(#w20)"/><rect x="14" y="10" width="1" height="1" fill="#000000"/><rect x="2" y="11" width="1" height="1" fill="#808080"/><rect x="3" y="11" width="4" height="1" fill="url(#w20)"/><rect x="7" y="11" width="3" height="1" fill="#000000"/><rect x="10" y="11" width="4" height="1" fill="url(#w20)"/><rect x="14" y="11" width="1" height="1" fill="#000000"/><rect x="2" y="12" width="1" height="1" fill="#808080"/><rect x="3" y="12" width="11" height="1" fill="url(#w20)"/><rect x="14" y="12" width="1" height="1" fill="#000000"/><rect x="2" y="13" width="1" height="1" fill="#808080"/><rect x="3" y="13" width="11" height="1" fill="url(#w20)"/><rect x="14" y="13" width="1" height="1" fill="#000000"/><rect x="2" y="14" width="1" height="1" fill="#808080"/><rect x="3" y="14" width="11" height="1" fill="url(#w20)"/><rect x="14" y="14" width="1" height="1" fill="#000000"/><rect x="2" y="15" width="13" height="1" fill="#000000"/></svg>
<span class="t" style="left:312px;top:369px;">copyright.txt</span>
<svg style="left:294px;top:385px" width="16" height="16" shape-rendering="crispEdges"><rect x="2" y="0" width="10" height="1" fill="#808080"/><rect x="2" y="1" width="1" height="1" fill="#808080"/><rect x="3" y="1" width="9" height="1" fill="url(#w21)"/><rect x="12" y="1" width="1" height="1" fill="#c0c0c0"/><rect x="13" y="1" width="1" height="1" fill="#ffffff"/><rect x="2" y="2" width="1" height="1" fill="#808080"/><rect x="3" y="2" width="8" height="1" fill="url(#w21)"/><rect x="11" y="2" width="1" height="1" fill="#c0c0c0"/><rect x="12" y="2" width="1" height="1" fill="#ffffff"/><rect x="13" y="2" width="1" height="1" fill="#c0c0c0"/><rect x="14" y="2" width="1" height="1" fill="#808080"/><rect x="2" y="3" width="1" height="1" fill="#808080"/><rect x="3" y="3" width="8" height="1" fill="url(#w21)"/><rect x="11" y="3" width="4" height="1" fill="#000000"/><rect x="2" y="4" width="1" height="1" fill="#808080"/><rect x="3" y="4" width="4" height="1" fill="url(#w21)"/><rect x="7" y="4" width="1" height="1" fill="#008080"/><rect x="8" y="4" width="2" height="1" fill="#008000"/><rect x="10" y="4" width="4" height="1" fill="url(#w21)"/><rect x="14" y="4" width="1" height="1" fill="#000000"/><rect x="2" y="5" width="1" height="1" fill="#808080"/><rect x="3" y="5" width="3" height="1" fill="url(#w21)"/><rect x="6" y="5" width="1" height="1" fill="#008080"/><rect x="7" y="5" width="1" height="1" fill="#ffffff"/><rect x="8" y="5" width="1" height="1" fill="#008080"/><rect x="9" y="5" width="2" height="1" fill="#008000"/><rect x="11" y="5" width="3" height="1" fill="url(#w21)"/><rect x="14" y="5" width="1" height="1" fill="#000000"/><rect x="2" y="6" width="1" height="1" fill="#808080"/><rect x="3" y="6" width="2" height="1" fill="url(#w21)"/><rect x="5" y="6" width="1" height="1" fill="#008080"/><rect x="6" y="6" width="1" height="1" fill="#ffffff"/><rect x="7" y="6" width="1" height="1" fill="#008080"/><rect x="8" y="6" width="1" height="1" fill="#0000ff"/><rect x="9" y="6" width="1" height="1" fill="#008000"/><rect x="10" y="6" width="1" height="1" fill="#0000ff"/><rect x="11" y="6" width="3" height="1" fill="url(#w21)"/><rect x="14" y="6" width="1" height="1" fill="#000000"/><rect x="2" y="7" width="1" height="1" fill="#808080"/><rect x="3" y="7" width="2" height="1" fill="url(#w21)"/><rect x="5" y="7" width="1" height="1" fill="#008080"/><rect x="6" y="7" width="2" height="1" fill="#ffffff"/><rect x="8" y="7" width="2" height="1" fill="#008000"/><rect x="10" y="7" width="2" height="1" fill="#0000ff"/><rect x="12" y="7" width="2" height="1" fill="url(#w21)"/><rect x="14" y="7" width="1" height="1" fill="#000000"/><rect x="2" y="8" width="1" height="1" fill="#808080"/><rect x="3" y="8" width="2" height="1" fill="url(#w21)"/><rect x="5" y="8" width="1" height="1" fill="#008080"/><rect x="6" y="8" width="1" height="1" fill="#ffffff"/><rect x="7" y="8" width="1" height="1" fill="#008080"/><rect x="8" y="8" width="1" height="1" fill="#008000"/><rect x="9" y="8" width="3" height="1" fill="#0000ff"/><rect x="12" y="8" width="2" height="1" fill="url(#w21)"/><rect x="14" y="8" width="1" height="1" fill="#000000"/><rect x="2" y="9" width="1" height="1" fill="#808080"/><rect x="3" y="9" width="2" height="1" fill="url(#w21)"/><rect x="5" y="9" width="1" height="1" fill="#008080"/><rect x="6" y="9" width="2" height="1" fill="#0000ff"/><rect x="8" y="9" width="1" height="1" fill="#008000"/><rect x="9" y="9" width="3" height="1" fill="#0000ff"/><rect x="12" y="9" width="2" height="1" fill="url(#w21)"/><rect x="14" y="9" width="1" height="1" fill="#000000"/><rect x="2" y="10" width="1" height="1" fill="#808080"/><rect x="3" y="10" width="3" height="1" fill="url(#w21)"/><rect x="6" y="10" width="4" height="1" fill="#0000ff"/><rect x="10" y="10" width="1" height="1" fill="#000080"/><rect x="11" y="10" width="3" height="1" fill="url(#w21)"/><rect x="14" y="10" width="1" height="1" fill="#000000"/><rect x="2" y="11" width="1" height="1" fill="#808080"/><rect x="3" y="11" width="4" height="1" fill="url(#w21)"/><rect x="7" y="11" width="3" height="1" fill="#000000"/><rect x="10" y="11" width="4" height="1" fill="url(#w21)"/><rect x="14" y="11" width="1" height="1" fill="#000000"/><rect x="2" y="12" width="1" height="1" fill="#808080"/><rect x="3" y="12" width="11" height="1" fill="url(#w21)"/><rect x="14" y="12" width="1" height="1" fill="#000000"/><rect x="2" y="13" width="1" height="1" fill="#808080"/><rect x="3" y="13" width="11" height="1" fill="url(#w21)"/><rect x="14" y="13" width="1" height="1" fill="#000000"/><rect x="2" y="14" width="1" height="1" fill="#808080"/><rect x="3" y="14" width="11" height="1" fill="url(#w21)"/><rect x="14" y="14" width="1" height="1" fill="#000000"/><rect x="2" y="15" width="13" height="1" fill="#000000"/></svg>
<span class="t" style="left:312px;top:386px;">Default.aspx</span>
<svg style="left:294px;top:402px" width="16" height="16" shape-rendering="crispEdges"><rect x="2" y="0" width="10" height="1" fill="#808080"/><rect x="2" y="1" width="1" height="1" fill="#808080"/><rect x="3" y="1" width="9" height="1" fill="url(#w20)"/><rect x="12" y="1" width="1" height="1" fill="#c0c0c0"/><rect x="13" y="1" width="1" height="1" fill="#ffffff"/><rect x="2" y="2" width="1" height="1" fill="#808080"/><rect x="3" y="2" width="8" height="1" fill="url(#w20)"/><rect x="11" y="2" width="1" height="1" fill="#c0c0c0"/><rect x="12" y="2" width="1" height="1" fill="#ffffff"/><rect x="13" y="2" width="1" height="1" fill="#c0c0c0"/><rect x="14" y="2" width="1" height="1" fill="#808080"/><rect x="2" y="3" width="1" height="1" fill="#808080"/><rect x="3" y="3" width="8" height="1" fill="url(#w20)"/><rect x="11" y="3" width="4" height="1" fill="#000000"/><rect x="2" y="4" width="1" height="1" fill="#808080"/><rect x="3" y="4" width="4" height="1" fill="url(#w20)"/><rect x="7" y="4" width="1" height="1" fill="#008080"/><rect x="8" y="4" width="2" height="1" fill="#008000"/><rect x="10" y="4" width="4" height="1" fill="url(#w20)"/><rect x="14" y="4" width="1" height="1" fill="#000000"/><rect x="2" y="5" width="1" height="1" fill="#808080"/><rect x="3" y="5" width="3" height="1" fill="url(#w20)"/><rect x="6" y="5" width="1" height="1" fill="#008080"/><rect x="7" y="5" width="1" height="1" fill="#ffffff"/><rect x="8" y="5" width="1" height="1" fill="#008080"/><rect x="9" y="5" width="2" height="1" fill="#008000"/><rect x="11" y="5" width="3" height="1" fill="url(#w20)"/><rect x="14" y="5" width="1" height="1" fill="#000000"/><rect x="2" y="6" width="1" height="1" fill="#808080"/><rect x="3" y="6" width="2" height="1" fill="url(#w20)"/><rect x="5" y="6" width="1" height="1" fill="#008080"/><rect x="6" y="6" width="1" height="1" fill="#ffffff"/><rect x="7" y="6" width="1" height="1" fill="#008080"/><rect x="8" y="6" width="1" height="1" fill="#0000ff"/><rect x="9" y="6" width="1" height="1" fill="#008000"/><rect x="10" y="6" width="1" height="1" fill="#0000ff"/><rect x="11" y="6" width="3" height="1" fill="url(#w20)"/><rect x="14" y="6" width="1" height="1" fill="#000000"/><rect x="2" y="7" width="1" height="1" fill="#808080"/><rect x="3" y="7" width="2" height="1" fill="url(#w20)"/><rect x="5" y="7" width="1" height="1" fill="#008080"/><rect x="6" y="7" width="2" height="1" fill="#ffffff"/><rect x="8" y="7" width="2" height="1" fill="#008000"/><rect x="10" y="7" width="2" height="1" fill="#0000ff"/><rect x="12" y="7" width="2" height="1" fill="url(#w20)"/><rect x="14" y="7" width="1" height="1" fill="#000000"/><rect x="2" y="8" width="1" height="1" fill="#808080"/><rect x="3" y="8" width="2" height="1" fill="url(#w20)"/><rect x="5" y="8" width="1" height="1" fill="#008080"/><rect x="6" y="8" width="1" height="1" fill="#ffffff"/><rect x="7" y="8" width="1" height="1" fill="#008080"/><rect x="8" y="8" width="1" height="1" fill="#008000"/><rect x="9" y="8" width="3" height="1" fill="#0000ff"/><rect x="12" y="8" width="2" height="1" fill="url(#w20)"/><rect x="14" y="8" width="1" height="1" fill="#000000"/><rect x="2" y="9" width="1" height="1" fill="#808080"/><rect x="3" y="9" width="2" height="1" fill="url(#w20)"/><rect x="5" y="9" width="1" height="1" fill="#008080"/><rect x="6" y="9" width="2" height="1" fill="#0000ff"/><rect x="8" y="9" width="1" height="1" fill="#008000"/><rect x="9" y="9" width="3" height="1" fill="#0000ff"/><rect x="12" y="9" width="2" height="1" fill="url(#w20)"/><rect x="14" y="9" width="1" height="1" fill="#000000"/><rect x="2" y="10" width="1" height="1" fill="#808080"/><rect x="3" y="10" width="3" height="1" fill="url(#w20)"/><rect x="6" y="10" width="4" height="1" fill="#0000ff"/><rect x="10" y="10" width="1" height="1" fill="#000080"/><rect x="11" y="10" width="3" height="1" fill="url(#w20)"/><rect x="14" y="10" width="1" height="1" fill="#000000"/><rect x="2" y="11" width="1" height="1" fill="#808080"/><rect x="3" y="11" width="4" height="1" fill="url(#w20)"/><rect x="7" y="11" width="3" height="1" fill="#000000"/><rect x="10" y="11" width="4" height="1" fill="url(#w20)"/><rect x="14" y="11" width="1" height="1" fill="#000000"/><rect x="2" y="12" width="1" height="1" fill="#808080"/><rect x="3" y="12" width="11" height="1" fill="url(#w20)"/><rect x="14" y="12" width="1" height="1" fill="#000000"/><rect x="2" y="13" width="1" height="1" fill="#808080"/><rect x="3" y="13" width="11" height="1" fill="url(#w20)"/><rect x="14" y="13" width="1" height="1" fill="#000000"/><rect x="2" y="14" width="1" height="1" fill="#808080"/><rect x="3" y="14" width="11" height="1" fill="url(#w20)"/><rect x="14" y="14" width="1" height="1" fill="#000000"/><rect x="2" y="15" width="13" height="1" fill="#000000"/></svg>
<span class="t" style="left:312px;top:403px;">Default.aspx.cs</span>
<div style="left:293px;top:77px;width:180px;height:16px;background:#404040;"></div>
<div style="left:293px;top:77px;width:179px;height:15px;background:#ffffff;"></div>
<div style="left:294px;top:78px;width:178px;height:14px;background:#808080;"></div>
<div style="left:294px;top:78px;width:177px;height:13px;background:#d4d0c8;"></div>
<div style="left:473px;top:77px;width:143px;height:16px;background:#404040;"></div>
<div style="left:473px;top:77px;width:143px;height:15px;background:#ffffff;"></div>
<div style="left:474px;top:78px;width:142px;height:14px;background:#808080;"></div>
<div style="left:474px;top:78px;width:142px;height:13px;background:#d4d0c8;"></div>
<span class="t" style="left:298px;top:78px;">Name</span>
<span class="t" style="left:478px;top:78px;">Path</span>
<svg style="left:616px;top:93px" width="16" height="301" shape-rendering="crispEdges"><defs><pattern id="p616_93" x="0" y="1" width="2" height="2" patternUnits="userSpaceOnUse"><rect width="2" height="2" fill="#ffffff"/><rect width="1" height="1" fill="#d4d0c8"/><rect x="1" y="1" width="1" height="1" fill="#d4d0c8"/></pattern></defs><rect width="16" height="301" fill="url(#p616_93)"/></svg>
<div style="left:616px;top:77px;width:16px;height:16px;background:#404040;"></div>
<div style="left:616px;top:77px;width:15px;height:15px;background:#d4d0c8;"></div>
<div style="left:617px;top:78px;width:14px;height:14px;background:#808080;"></div>
<div style="left:617px;top:78px;width:13px;height:13px;background:#ffffff;"></div>
<div style="left:618px;top:79px;width:12px;height:12px;background:#d4d0c8;"></div>
<div style="left:623px;top:83px;width:1px;height:1px;background:#000;"></div>
<div style="left:622px;top:84px;width:3px;height:1px;background:#000;"></div>
<div style="left:621px;top:85px;width:5px;height:1px;background:#000;"></div>
<div style="left:620px;top:86px;width:7px;height:1px;background:#000;"></div>
<div style="left:616px;top:93px;width:16px;height:139px;background:#404040;"></div>
<div style="left:616px;top:93px;width:15px;height:138px;background:#d4d0c8;"></div>
<div style="left:617px;top:94px;width:14px;height:137px;background:#808080;"></div>
<div style="left:617px;top:94px;width:13px;height:136px;background:#ffffff;"></div>
<div style="left:618px;top:95px;width:12px;height:135px;background:#d4d0c8;"></div>
<div style="left:616px;top:394px;width:16px;height:16px;background:#404040;"></div>
<div style="left:616px;top:394px;width:15px;height:15px;background:#d4d0c8;"></div>
<div style="left:617px;top:395px;width:14px;height:14px;background:#808080;"></div>
<div style="left:617px;top:395px;width:13px;height:13px;background:#ffffff;"></div>
<div style="left:618px;top:396px;width:12px;height:12px;background:#d4d0c8;"></div>
<div style="left:620px;top:400px;width:7px;height:1px;background:#000;"></div>
<div style="left:621px;top:401px;width:5px;height:1px;background:#000;"></div>
<div style="left:622px;top:402px;width:3px;height:1px;background:#000;"></div>
<div style="left:623px;top:403px;width:1px;height:1px;background:#000;"></div>
<svg style="left:309px;top:410px" width="291" height="16" shape-rendering="crispEdges"><defs><pattern id="p309_410" x="1" y="0" width="2" height="2" patternUnits="userSpaceOnUse"><rect width="2" height="2" fill="#ffffff"/><rect width="1" height="1" fill="#d4d0c8"/><rect x="1" y="1" width="1" height="1" fill="#d4d0c8"/></pattern></defs><rect width="291" height="16" fill="url(#p309_410)"/></svg>
<div style="left:293px;top:410px;width:16px;height:16px;background:#404040;"></div>
<div style="left:293px;top:410px;width:15px;height:15px;background:#d4d0c8;"></div>
<div style="left:294px;top:411px;width:14px;height:14px;background:#808080;"></div>
<div style="left:294px;top:411px;width:13px;height:13px;background:#ffffff;"></div>
<div style="left:295px;top:412px;width:12px;height:12px;background:#d4d0c8;"></div>
<div style="left:298px;top:417px;width:1px;height:1px;background:#000;"></div>
<div style="left:299px;top:416px;width:1px;height:3px;background:#000;"></div>
<div style="left:300px;top:415px;width:1px;height:5px;background:#000;"></div>
<div style="left:301px;top:414px;width:1px;height:7px;background:#000;"></div>
<div style="left:309px;top:410px;width:162px;height:16px;background:#404040;"></div>
<div style="left:309px;top:410px;width:161px;height:15px;background:#d4d0c8;"></div>
<div style="left:310px;top:411px;width:160px;height:14px;background:#808080;"></div>
<div style="left:310px;top:411px;width:159px;height:13px;background:#ffffff;"></div>
<div style="left:311px;top:412px;width:158px;height:12px;background:#d4d0c8;"></div>
<div style="left:600px;top:410px;width:16px;height:16px;background:#404040;"></div>
<div style="left:600px;top:410px;width:15px;height:15px;background:#d4d0c8;"></div>
<div style="left:601px;top:411px;width:14px;height:14px;background:#808080;"></div>
<div style="left:601px;top:411px;width:13px;height:13px;background:#ffffff;"></div>
<div style="left:602px;top:412px;width:12px;height:12px;background:#d4d0c8;"></div>
<div style="left:604px;top:414px;width:1px;height:7px;background:#000;"></div>
<div style="left:605px;top:415px;width:1px;height:5px;background:#000;"></div>
<div style="left:606px;top:416px;width:1px;height:3px;background:#000;"></div>
<div style="left:607px;top:417px;width:1px;height:1px;background:#000;"></div>
<div style="left:616px;top:410px;width:16px;height:16px;background:#d4d0c8;"></div>
<div style="left:4px;top:430px;width:410px;height:18px;background:#ffffff;"></div>
<div style="left:4px;top:430px;width:409px;height:17px;background:#808080;"></div>
<div style="left:5px;top:431px;width:408px;height:16px;background:#d4d0c8;"></div>
<div style="left:416px;top:430px;width:131px;height:18px;background:#ffffff;"></div>
<div style="left:416px;top:430px;width:130px;height:17px;background:#808080;"></div>
<div style="left:417px;top:431px;width:129px;height:16px;background:#d4d0c8;"></div>
<div style="left:549px;top:430px;width:83px;height:18px;background:#ffffff;"></div>
<div style="left:549px;top:430px;width:82px;height:17px;background:#808080;"></div>
<div style="left:550px;top:431px;width:81px;height:16px;background:#d4d0c8;"></div>
</body></html>
